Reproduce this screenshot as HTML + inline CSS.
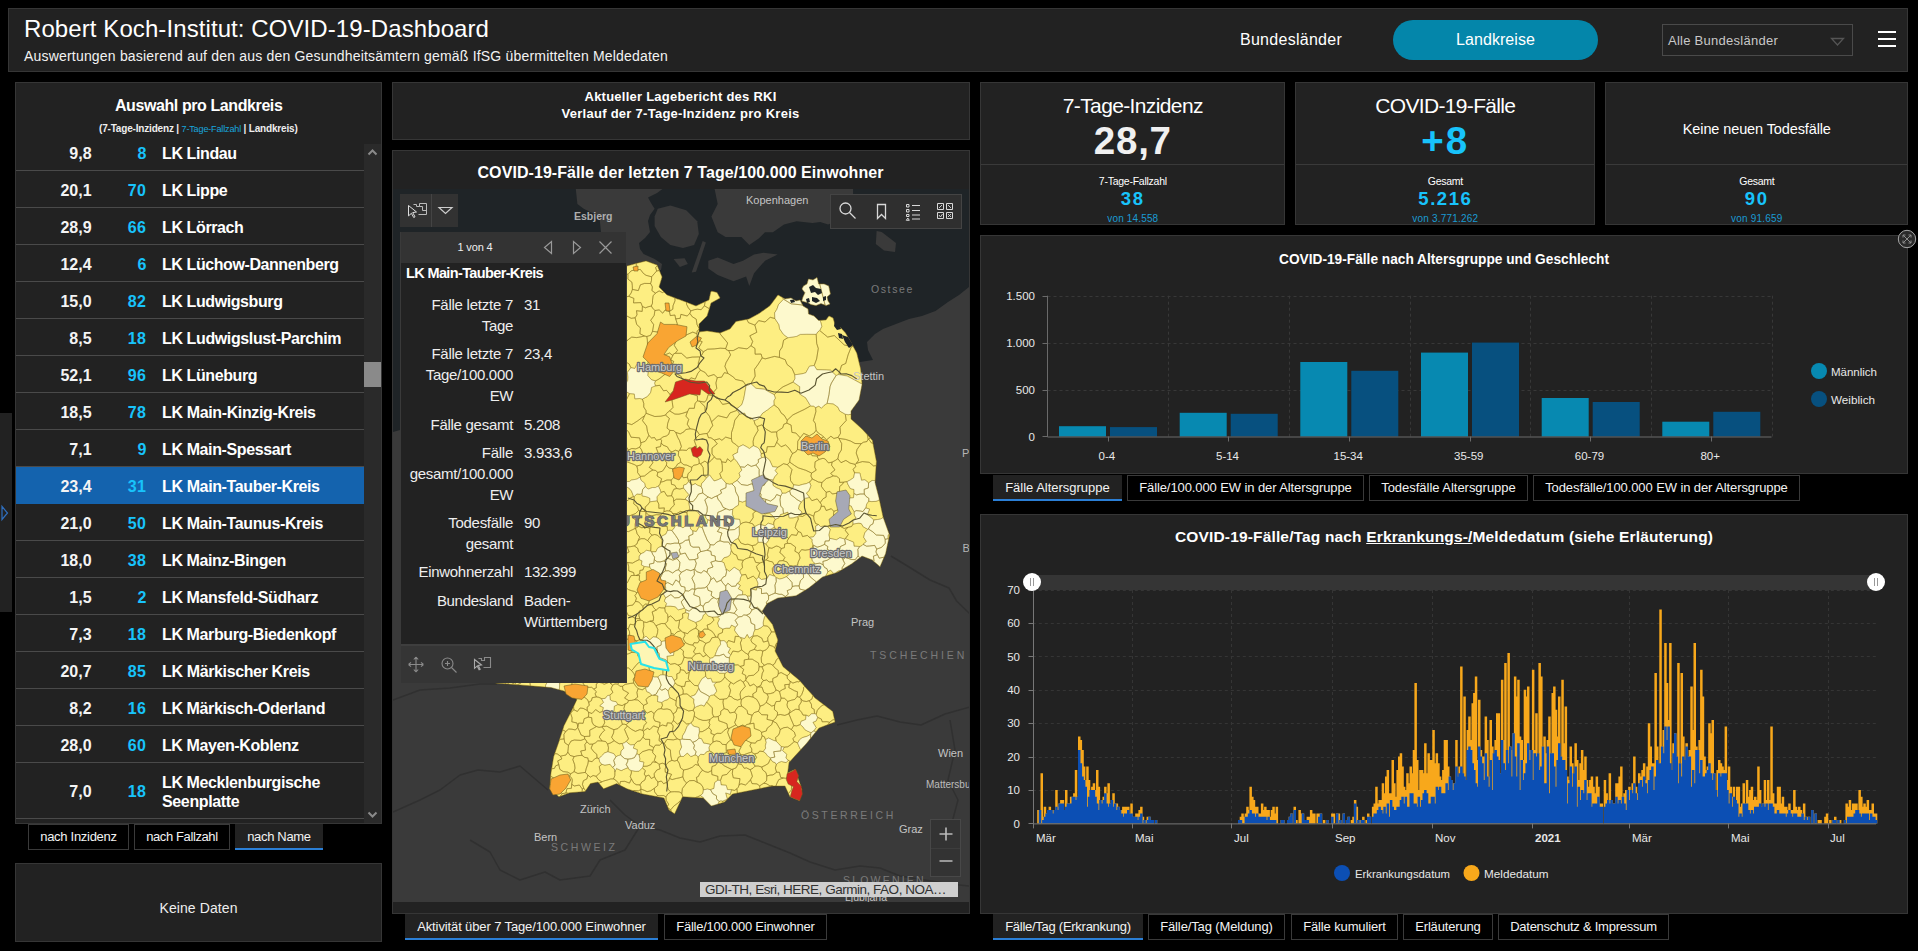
<!DOCTYPE html>
<html lang="de"><head><meta charset="utf-8"><title>Robert Koch-Institut: COVID-19-Dashboard</title>
<style>
html,body{margin:0;padding:0;background:#000;}
body{width:1918px;height:951px;position:relative;overflow:hidden;font-family:"Liberation Sans",sans-serif;}
.b{position:absolute;box-sizing:border-box;}
.t{position:absolute;white-space:nowrap;}
svg{overflow:visible}
svg text{font-family:"Liberation Sans",sans-serif;}
</style></head><body>
<div class="b" style="left:8px;top:8px;width:1900px;height:64px;background:#222;border:1px solid #363636;"></div>
<div class="t" style="left:24.0px;top:16.7px;font-size:24px;line-height:24px;color:#fff;letter-spacing:0.087px;">Robert Koch-Institut: COVID-19-Dashboard</div>
<div class="t" style="left:24.0px;top:49.1px;font-size:14px;line-height:14px;color:#f2f2f2;letter-spacing:0.191px;">Auswertungen basierend auf den aus den Gesundheitsämtern gemäß IfSG übermittelten Meldedaten</div>
<div class="t" style="left:1240.0px;top:32.0px;font-size:16px;line-height:16px;color:#fff;letter-spacing:0.272px;">Bundesländer</div>
<div class="b" style="left:1393px;top:20px;width:205px;height:40px;border-radius:20px;background:#0486aa"></div>
<div class="t" style="left:1456.0px;top:32.0px;font-size:16px;line-height:16px;color:#fff;letter-spacing:0.073px;">Landkreise</div>
<div class="b" style="left:1662px;top:24px;width:191px;height:32px;background:#222;border:1px solid #4a4a4a;"></div>
<div class="t" style="left:1668.0px;top:33.5px;font-size:13px;line-height:13px;color:#c8c8c8;letter-spacing:0.264px;">Alle Bundesländer</div>
<svg class="b" style="left:1829px;top:36px" width="18" height="12"><path d="M2.5 2.5h12l-6 6.5z" fill="none" stroke="#555" stroke-width="1.3"/></svg>
<div class="b" style="left:1878px;top:31px;width:18px;height:2px;background:#fff;"></div>
<div class="b" style="left:1878px;top:38px;width:18px;height:2px;background:#fff;"></div>
<div class="b" style="left:1878px;top:45px;width:18px;height:2px;background:#fff;"></div>
<div class="b" style="left:0px;top:413px;width:12px;height:199px;background:#222;"></div>
<svg class="b" style="left:0;top:504px" width="12" height="18"><path d="M2 2.5l5.5 6.5L2 15.5z" fill="none" stroke="#2f6fbf" stroke-width="1.2"/></svg>
<div class="b" style="left:15px;top:82px;width:367px;height:742px;background:#222;border:1px solid #363636;"></div>
<div class="t" style="left:114.9px;top:97.5px;font-size:16px;line-height:16px;color:#fff;font-weight:700;letter-spacing:-0.406px;">Auswahl pro Landkreis</div>
<div class="t" style="left:99px;top:123px;font-size:10px;line-height:11px;font-weight:700;color:#eee;letter-spacing:-0.18px">(7-Tage-Inzidenz | <span style="color:#18a6dd;font-weight:400;font-size:9.1px;letter-spacing:-0.18px">7-Tage-Fallzahl</span> | Landkreis)</div>
<div class="b" style="left:0;top:140px;width:382px;height:683px;overflow:hidden"><div class="b" style="left:0;top:-140px"><div class="b" style="left:16px;top:170px;width:348px;height:1px;background:#4a4a4a;"></div><div class="t" style="left:69.3px;top:146.1px;font-size:16px;line-height:16px;color:#f4f4f4;font-weight:700;">9,8</div><div class="t" style="left:137.4px;top:146.1px;font-size:16px;line-height:16px;color:#18c3fb;font-weight:700;">8</div><div class="t" style="left:162.0px;top:146.1px;font-size:16px;line-height:16px;color:#fff;font-weight:700;letter-spacing:-0.391px;">LK Lindau</div><div class="b" style="left:16px;top:207px;width:348px;height:1px;background:#4a4a4a;"></div><div class="t" style="left:60.4px;top:183.1px;font-size:16px;line-height:16px;color:#f4f4f4;font-weight:700;">20,1</div><div class="t" style="left:127.8px;top:183.1px;font-size:16px;line-height:16px;color:#18c3fb;font-weight:700;letter-spacing:0.356px;">70</div><div class="t" style="left:162.0px;top:183.1px;font-size:16px;line-height:16px;color:#fff;font-weight:700;letter-spacing:-0.385px;">LK Lippe</div><div class="b" style="left:16px;top:244px;width:348px;height:1px;background:#4a4a4a;"></div><div class="t" style="left:60.4px;top:220.1px;font-size:16px;line-height:16px;color:#f4f4f4;font-weight:700;">28,9</div><div class="t" style="left:127.8px;top:220.1px;font-size:16px;line-height:16px;color:#18c3fb;font-weight:700;letter-spacing:0.356px;">66</div><div class="t" style="left:162.0px;top:220.1px;font-size:16px;line-height:16px;color:#fff;font-weight:700;letter-spacing:-0.384px;">LK Lörrach</div><div class="b" style="left:16px;top:281px;width:348px;height:1px;background:#4a4a4a;"></div><div class="t" style="left:60.4px;top:257.1px;font-size:16px;line-height:16px;color:#f4f4f4;font-weight:700;">12,4</div><div class="t" style="left:137.4px;top:257.1px;font-size:16px;line-height:16px;color:#18c3fb;font-weight:700;">6</div><div class="t" style="left:162.0px;top:257.1px;font-size:16px;line-height:16px;color:#fff;font-weight:700;letter-spacing:-0.416px;">LK Lüchow-Dannenberg</div><div class="b" style="left:16px;top:318px;width:348px;height:1px;background:#4a4a4a;"></div><div class="t" style="left:60.4px;top:294.1px;font-size:16px;line-height:16px;color:#f4f4f4;font-weight:700;">15,0</div><div class="t" style="left:127.8px;top:294.1px;font-size:16px;line-height:16px;color:#18c3fb;font-weight:700;letter-spacing:0.356px;">82</div><div class="t" style="left:162.0px;top:294.1px;font-size:16px;line-height:16px;color:#fff;font-weight:700;letter-spacing:-0.406px;">LK Ludwigsburg</div><div class="b" style="left:16px;top:355px;width:348px;height:1px;background:#4a4a4a;"></div><div class="t" style="left:69.3px;top:331.1px;font-size:16px;line-height:16px;color:#f4f4f4;font-weight:700;">8,5</div><div class="t" style="left:127.8px;top:331.1px;font-size:16px;line-height:16px;color:#18c3fb;font-weight:700;letter-spacing:0.356px;">18</div><div class="t" style="left:162.0px;top:331.1px;font-size:16px;line-height:16px;color:#fff;font-weight:700;letter-spacing:-0.384px;">LK Ludwigslust-Parchim</div><div class="b" style="left:16px;top:392px;width:348px;height:1px;background:#4a4a4a;"></div><div class="t" style="left:60.4px;top:368.1px;font-size:16px;line-height:16px;color:#f4f4f4;font-weight:700;">52,1</div><div class="t" style="left:127.8px;top:368.1px;font-size:16px;line-height:16px;color:#18c3fb;font-weight:700;letter-spacing:0.356px;">96</div><div class="t" style="left:162.0px;top:368.1px;font-size:16px;line-height:16px;color:#fff;font-weight:700;letter-spacing:-0.407px;">LK Lüneburg</div><div class="b" style="left:16px;top:429px;width:348px;height:1px;background:#4a4a4a;"></div><div class="t" style="left:60.4px;top:405.1px;font-size:16px;line-height:16px;color:#f4f4f4;font-weight:700;">18,5</div><div class="t" style="left:127.8px;top:405.1px;font-size:16px;line-height:16px;color:#18c3fb;font-weight:700;letter-spacing:0.356px;">78</div><div class="t" style="left:162.0px;top:405.1px;font-size:16px;line-height:16px;color:#fff;font-weight:700;letter-spacing:-0.362px;">LK Main-Kinzig-Kreis</div><div class="b" style="left:16px;top:466px;width:348px;height:1px;background:#4a4a4a;"></div><div class="t" style="left:69.3px;top:442.1px;font-size:16px;line-height:16px;color:#f4f4f4;font-weight:700;">7,1</div><div class="t" style="left:137.4px;top:442.1px;font-size:16px;line-height:16px;color:#18c3fb;font-weight:700;">9</div><div class="t" style="left:162.0px;top:442.1px;font-size:16px;line-height:16px;color:#fff;font-weight:700;letter-spacing:-0.380px;">LK Main-Spessart</div><div class="b" style="left:16px;top:467px;width:348px;height:37px;background:#1463ae;"></div><div class="t" style="left:60.4px;top:479.1px;font-size:16px;line-height:16px;color:#f4f4f4;font-weight:700;">23,4</div><div class="t" style="left:127.8px;top:479.1px;font-size:16px;line-height:16px;color:#18c3fb;font-weight:700;letter-spacing:0.356px;">31</div><div class="t" style="left:162.0px;top:479.1px;font-size:16px;line-height:16px;color:#fff;font-weight:700;letter-spacing:-0.371px;">LK Main-Tauber-Kreis</div><div class="b" style="left:16px;top:540px;width:348px;height:1px;background:#4a4a4a;"></div><div class="t" style="left:60.4px;top:516.1px;font-size:16px;line-height:16px;color:#f4f4f4;font-weight:700;">21,0</div><div class="t" style="left:127.8px;top:516.1px;font-size:16px;line-height:16px;color:#18c3fb;font-weight:700;letter-spacing:0.356px;">50</div><div class="t" style="left:162.0px;top:516.1px;font-size:16px;line-height:16px;color:#fff;font-weight:700;letter-spacing:-0.379px;">LK Main-Taunus-Kreis</div><div class="b" style="left:16px;top:577px;width:348px;height:1px;background:#4a4a4a;"></div><div class="t" style="left:60.4px;top:553.1px;font-size:16px;line-height:16px;color:#f4f4f4;font-weight:700;">18,0</div><div class="t" style="left:127.8px;top:553.1px;font-size:16px;line-height:16px;color:#18c3fb;font-weight:700;letter-spacing:0.356px;">38</div><div class="t" style="left:162.0px;top:553.1px;font-size:16px;line-height:16px;color:#fff;font-weight:700;letter-spacing:-0.389px;">LK Mainz-Bingen</div><div class="b" style="left:16px;top:614px;width:348px;height:1px;background:#4a4a4a;"></div><div class="t" style="left:69.3px;top:590.1px;font-size:16px;line-height:16px;color:#f4f4f4;font-weight:700;">1,5</div><div class="t" style="left:137.4px;top:590.1px;font-size:16px;line-height:16px;color:#18c3fb;font-weight:700;">2</div><div class="t" style="left:162.0px;top:590.1px;font-size:16px;line-height:16px;color:#fff;font-weight:700;letter-spacing:-0.387px;">LK Mansfeld-Südharz</div><div class="b" style="left:16px;top:651px;width:348px;height:1px;background:#4a4a4a;"></div><div class="t" style="left:69.3px;top:627.1px;font-size:16px;line-height:16px;color:#f4f4f4;font-weight:700;">7,3</div><div class="t" style="left:127.8px;top:627.1px;font-size:16px;line-height:16px;color:#18c3fb;font-weight:700;letter-spacing:0.356px;">18</div><div class="t" style="left:162.0px;top:627.1px;font-size:16px;line-height:16px;color:#fff;font-weight:700;letter-spacing:-0.390px;">LK Marburg-Biedenkopf</div><div class="b" style="left:16px;top:688px;width:348px;height:1px;background:#4a4a4a;"></div><div class="t" style="left:60.4px;top:664.1px;font-size:16px;line-height:16px;color:#f4f4f4;font-weight:700;">20,7</div><div class="t" style="left:127.8px;top:664.1px;font-size:16px;line-height:16px;color:#18c3fb;font-weight:700;letter-spacing:0.356px;">85</div><div class="t" style="left:162.0px;top:664.1px;font-size:16px;line-height:16px;color:#fff;font-weight:700;letter-spacing:-0.366px;">LK Märkischer Kreis</div><div class="b" style="left:16px;top:725px;width:348px;height:1px;background:#4a4a4a;"></div><div class="t" style="left:69.3px;top:701.1px;font-size:16px;line-height:16px;color:#f4f4f4;font-weight:700;">8,2</div><div class="t" style="left:127.8px;top:701.1px;font-size:16px;line-height:16px;color:#18c3fb;font-weight:700;letter-spacing:0.356px;">16</div><div class="t" style="left:162.0px;top:701.1px;font-size:16px;line-height:16px;color:#fff;font-weight:700;letter-spacing:-0.384px;">LK Märkisch-Oderland</div><div class="b" style="left:16px;top:762px;width:348px;height:1px;background:#4a4a4a;"></div><div class="t" style="left:60.4px;top:738.1px;font-size:16px;line-height:16px;color:#f4f4f4;font-weight:700;">28,0</div><div class="t" style="left:127.8px;top:738.1px;font-size:16px;line-height:16px;color:#18c3fb;font-weight:700;letter-spacing:0.356px;">60</div><div class="t" style="left:162.0px;top:738.1px;font-size:16px;line-height:16px;color:#fff;font-weight:700;letter-spacing:-0.402px;">LK Mayen-Koblenz</div><div class="b" style="left:16px;top:818px;width:348px;height:1px;background:#4a4a4a;"></div><div class="t" style="left:69.3px;top:784.1px;font-size:16px;line-height:16px;color:#f4f4f4;font-weight:700;">7,0</div><div class="t" style="left:127.8px;top:784.1px;font-size:16px;line-height:16px;color:#18c3fb;font-weight:700;letter-spacing:0.356px;">18</div><div class="t" style="left:162.0px;top:775.1px;font-size:16px;line-height:16px;color:#fff;font-weight:700;letter-spacing:-0.392px;">LK Mecklenburgische</div><div class="t" style="left:162.0px;top:794.1px;font-size:16px;line-height:16px;color:#fff;font-weight:700;letter-spacing:-0.364px;">Seenplatte</div></div></div>
<div class="b" style="left:364px;top:144px;width:17px;height:679px;background:#2a2a2a;"></div>
<div class="b" style="left:364px;top:362px;width:17px;height:25px;background:#8a8a8a;"></div>
<svg class="b" style="left:364px;top:144px" width="17" height="17"><path d="M4.5 10.5l4-4 4 4" fill="none" stroke="#8a8a8a" stroke-width="2"/></svg>
<svg class="b" style="left:364px;top:806px" width="17" height="17"><path d="M4.5 6.5l4 4 4-4" fill="none" stroke="#8a8a8a" stroke-width="2"/></svg>
<div class="b" style="left:28px;top:824px;width:101px;height:26px;background:#000;border:1px solid #3a3a3a;"></div>
<div class="t" style="left:40.2px;top:830.1px;font-size:13px;line-height:13px;color:#f2f2f2;letter-spacing:-0.286px;">nach Inzidenz</div>
<div class="b" style="left:134px;top:824px;width:96px;height:26px;background:#000;border:1px solid #3a3a3a;"></div>
<div class="t" style="left:146.2px;top:830.1px;font-size:13px;line-height:13px;color:#f2f2f2;letter-spacing:-0.392px;">nach Fallzahl</div>
<div class="b" style="left:235px;top:824px;width:88px;height:26px;background:#222;border-bottom:2px solid #2b7fd6;box-sizing:border-box;"></div>
<div class="t" style="left:247.2px;top:830.1px;font-size:13px;line-height:13px;color:#f2f2f2;letter-spacing:-0.331px;">nach Name</div>
<div class="b" style="left:15px;top:863px;width:367px;height:79px;background:#222;border:1px solid #363636;"></div>
<div class="t" style="left:159.5px;top:901.1px;font-size:14px;line-height:14px;color:#eee;letter-spacing:0.086px;">Keine Daten</div>
<div class="b" style="left:392px;top:82px;width:578px;height:58px;background:#222;border:1px solid #363636;"></div>
<div class="t" style="left:584.5px;top:90.0px;font-size:13px;line-height:13px;color:#fff;font-weight:700;letter-spacing:0.244px;">Aktueller Lagebericht des RKI</div>
<div class="t" style="left:561.5px;top:107.0px;font-size:13px;line-height:13px;color:#fff;font-weight:700;letter-spacing:0.270px;">Verlauf der 7-Tage-Inzidenz pro Kreis</div>
<div class="b" style="left:980px;top:82px;width:305px;height:143px;background:#222;border:1px solid #363636;"></div>
<div class="b" style="left:981px;top:164px;width:303px;height:1px;background:#3a3a3a;"></div>
<div class="t" style="left:1062.8px;top:95.2px;font-size:21px;line-height:21px;color:#fff;letter-spacing:-0.627px;">7-Tage-Inzidenz</div>
<div class="t" style="left:1093.8px;top:122.4px;font-size:38.5px;line-height:38.5px;color:#f0f0f0;font-weight:700;letter-spacing:0.769px;">28,7</div>
<div class="t" style="left:1098.8px;top:176.1px;font-size:10.5px;line-height:10.5px;color:#fff;letter-spacing:-0.252px;">7-Tage-Fallzahl</div>
<div class="t" style="left:1120.8px;top:190.0px;font-size:18.5px;line-height:18.5px;color:#18c3fb;font-weight:700;letter-spacing:1.712px;">38</div>
<div class="t" style="left:1107.3px;top:213.5px;font-size:10px;line-height:10px;color:#1a9bd3;letter-spacing:0.152px;">von 14.558</div>
<div class="b" style="left:1295px;top:82px;width:300px;height:143px;background:#222;border:1px solid #363636;"></div>
<div class="b" style="left:1296px;top:164px;width:298px;height:1px;background:#3a3a3a;"></div>
<div class="t" style="left:1375.3px;top:95.2px;font-size:21px;line-height:21px;color:#fff;letter-spacing:-0.669px;">COVID-19-Fälle</div>
<div class="t" style="left:1421.3px;top:122.4px;font-size:38.5px;line-height:38.5px;color:#18c3fb;font-weight:700;letter-spacing:2.052px;">+8</div>
<div class="t" style="left:1427.8px;top:176.1px;font-size:10.5px;line-height:10.5px;color:#fff;letter-spacing:-0.293px;">Gesamt</div>
<div class="t" style="left:1418.3px;top:190.0px;font-size:18.5px;line-height:18.5px;color:#18c3fb;font-weight:700;letter-spacing:1.542px;">5.216</div>
<div class="t" style="left:1412.3px;top:213.5px;font-size:10px;line-height:10px;color:#1a9bd3;letter-spacing:0.201px;">von 3.771.262</div>
<div class="b" style="left:1605px;top:82px;width:303px;height:143px;background:#222;border:1px solid #363636;"></div>
<div class="b" style="left:1606px;top:164px;width:301px;height:1px;background:#3a3a3a;"></div>
<div class="t" style="left:1682.8px;top:121.7px;font-size:14.5px;line-height:14.5px;color:#fff;letter-spacing:-0.113px;">Keine neuen Todesfälle</div>
<div class="t" style="left:1739.3px;top:176.1px;font-size:10.5px;line-height:10.5px;color:#fff;letter-spacing:-0.293px;">Gesamt</div>
<div class="t" style="left:1744.8px;top:190.0px;font-size:18.5px;line-height:18.5px;color:#18c3fb;font-weight:700;letter-spacing:1.712px;">90</div>
<div class="t" style="left:1731.0px;top:213.5px;font-size:10px;line-height:10px;color:#1a9bd3;letter-spacing:0.202px;">von 91.659</div>
<div class="b" style="left:980px;top:235px;width:928px;height:239px;background:#222;border:1px solid #363636;"></div>
<div class="b" style="left:980px;top:514px;width:928px;height:400px;background:#222;border:1px solid #363636;"></div>
<svg class="b" style="left:0;top:0" width="1918" height="951"><path d="M1168.5 295.7V436.5M1289.5 295.7V436.5M1410.5 295.7V436.5M1530.5 295.7V436.5M1651.5 295.7V436.5M1772.5 295.7V436.5M1047.5 390.5H1771.5M1047.5 343.5H1771.5M1047.5 296.5H1771.5" stroke="#383838" stroke-width="1" stroke-dasharray="3 3" fill="none"/><rect x="1059.0" y="426.2" width="47" height="10.3" fill="#0789b1"/><rect x="1110.0" y="427.1" width="47" height="9.4" fill="#07507f"/><rect x="1179.7" y="412.8" width="47" height="23.7" fill="#0789b1"/><rect x="1230.7" y="413.8" width="47" height="22.7" fill="#07507f"/><rect x="1300.3" y="362.0" width="47" height="74.5" fill="#0789b1"/><rect x="1351.3" y="370.8" width="47" height="65.7" fill="#07507f"/><rect x="1421.0" y="352.6" width="47" height="83.9" fill="#0789b1"/><rect x="1472.0" y="342.6" width="47" height="93.9" fill="#07507f"/><rect x="1541.7" y="398.0" width="47" height="38.5" fill="#0789b1"/><rect x="1592.7" y="402.0" width="47" height="34.5" fill="#07507f"/><rect x="1662.3" y="421.7" width="47" height="14.8" fill="#0789b1"/><rect x="1713.3" y="411.8" width="47" height="24.7" fill="#07507f"/><path d="M1047.5 295.7V437.0H1771.5M1047.5 436.5h-5M1047.5 390.5h-5M1047.5 343.5h-5M1047.5 296.5h-5M1108.5 436.5v5M1228.5 436.5v5M1349.5 436.5v5M1470.5 436.5v5M1590.5 436.5v5M1711.5 436.5v5" stroke="#6a6a6a" stroke-width="1" fill="none"/><text x="1035.0" y="440.5" font-size="11.5" fill="#e8e8e8" text-anchor="end">0</text><text x="1035.0" y="393.6" font-size="11.5" fill="#e8e8e8" text-anchor="end">500</text><text x="1035.0" y="346.6" font-size="11.5" fill="#e8e8e8" text-anchor="end">1.000</text><text x="1035.0" y="299.7" font-size="11.5" fill="#e8e8e8" text-anchor="end">1.500</text><text x="1106.8" y="460.0" font-size="11.5" fill="#e8e8e8" text-anchor="middle">0-4</text><text x="1227.5" y="460.0" font-size="11.5" fill="#e8e8e8" text-anchor="middle">5-14</text><text x="1348.2" y="460.0" font-size="11.5" fill="#e8e8e8" text-anchor="middle">15-34</text><text x="1468.8" y="460.0" font-size="11.5" fill="#e8e8e8" text-anchor="middle">35-59</text><text x="1589.5" y="460.0" font-size="11.5" fill="#e8e8e8" text-anchor="middle">60-79</text><text x="1710.2" y="460.0" font-size="11.5" fill="#e8e8e8" text-anchor="middle">80+</text><text x="1444.0" y="263.5" font-size="14" fill="#fff" text-anchor="middle" font-weight="700" textLength="330.0" lengthAdjust="spacingAndGlyphs">COVID-19-Fälle nach Altersgruppe und Geschlecht</text><circle cx="1819" cy="371" r="8" fill="#0789b1"/><circle cx="1819" cy="399" r="8" fill="#07507f"/><text x="1831.0" y="375.5" font-size="11" fill="#e8e8e8" textLength="46.0" lengthAdjust="spacingAndGlyphs">Männlich</text><text x="1831.0" y="403.5" font-size="11" fill="#e8e8e8" textLength="44.0" lengthAdjust="spacingAndGlyphs">Weiblich</text><circle cx="1907" cy="239" r="8.700" fill="#2b2b2b" stroke="#a8a8a8" stroke-width="1"/><path d="M1903 235l8 8M1911 235l-8 8M1903 237.500v-2.500h2.500M1908.500 235h2.500v2.500M1911 240.500v2.500h-2.500M1905.500 243h-2.500v-2.500" stroke="#8c8c8c" stroke-width="1" fill="none"/><rect x="1032" y="575" width="844" height="15" fill="#353535"/><path d="M1132.5 590V823.4M1231.5 590V823.4M1332.5 590V823.4M1432.5 590V823.4M1532.5 590V823.4M1629.5 590V823.4M1728.5 590V823.4M1828.5 590V823.4M1032.8 790.5H1876M1032.8 757.5H1876M1032.8 723.5H1876M1032.8 690.5H1876M1032.8 656.5H1876M1032.8 623.5H1876M1032.8 590.5H1876" stroke="#353535" stroke-width="1" stroke-dasharray="3 3" fill="none"/><path d="M1037.2 823.4v-13.4h2.5v13.4zM1038.8 823.4v-13.4h2.5v13.4zM1040.5 823.4v-50.1h2.5v50.1zM1042.1 823.4v-6.7h2.5v6.7zM1043.7 823.4v-16.7h2.5v16.7zM1045.4 823.4v-10.0h2.5v10.0zM1047.0 823.4v-13.4h2.5v13.4zM1048.6 823.4v-16.7h2.5v16.7zM1050.3 823.4v-13.4h2.5v13.4zM1051.9 823.4v-13.4h2.5v13.4zM1053.5 823.4v-13.4h2.5v13.4zM1055.2 823.4v-33.4h2.5v33.4zM1056.8 823.4v-16.7h2.5v16.7zM1058.4 823.4v-20.0h2.5v20.0zM1060.1 823.4v-23.4h2.5v23.4zM1061.7 823.4v-23.4h2.5v23.4zM1063.3 823.4v-13.4h2.5v13.4zM1065.0 823.4v-33.4h2.5v33.4zM1066.6 823.4v-20.0h2.5v20.0zM1068.2 823.4v-20.0h2.5v20.0zM1069.9 823.4v-26.7h2.5v26.7zM1071.5 823.4v-26.7h2.5v26.7zM1073.1 823.4v-30.1h2.5v30.1zM1074.8 823.4v-53.4h2.5v53.4zM1076.4 823.4v-26.7h2.5v26.7zM1078.0 823.4v-86.8h2.5v86.8zM1079.6 823.4v-83.5h2.5v83.5zM1081.3 823.4v-73.5h2.5v73.5zM1082.9 823.4v-56.8h2.5v56.8zM1084.5 823.4v-43.4h2.5v43.4zM1086.2 823.4v-56.8h2.5v56.8zM1087.8 823.4v-43.4h2.5v43.4zM1089.4 823.4v-33.4h2.5v33.4zM1091.1 823.4v-36.7h2.5v36.7zM1092.7 823.4v-40.1h2.5v40.1zM1094.3 823.4v-33.4h2.5v33.4zM1096.0 823.4v-53.4h2.5v53.4zM1097.6 823.4v-36.7h2.5v36.7zM1099.2 823.4v-23.4h2.5v23.4zM1100.9 823.4v-23.4h2.5v23.4zM1102.5 823.4v-26.7h2.5v26.7zM1104.1 823.4v-36.7h2.5v36.7zM1105.8 823.4v-30.1h2.5v30.1zM1107.4 823.4v-40.1h2.5v40.1zM1109.0 823.4v-20.0h2.5v20.0zM1110.7 823.4v-23.4h2.5v23.4zM1112.3 823.4v-30.1h2.5v30.1zM1113.9 823.4v-20.0h2.5v20.0zM1115.6 823.4v-20.0h2.5v20.0zM1117.2 823.4v-16.7h2.5v16.7zM1118.8 823.4v-13.4h2.5v13.4zM1120.5 823.4v-13.4h2.5v13.4zM1122.1 823.4v-16.7h2.5v16.7zM1123.7 823.4v-16.7h2.5v16.7zM1125.4 823.4v-16.7h2.5v16.7zM1127.0 823.4v-16.7h2.5v16.7zM1128.6 823.4v-10.0h2.5v10.0zM1130.3 823.4v-20.0h2.5v20.0zM1131.9 823.4v-6.7h2.5v6.7zM1133.5 823.4v-6.7h2.5v6.7zM1135.2 823.4v-10.0h2.5v10.0zM1136.8 823.4v-10.0h2.5v10.0zM1138.4 823.4v-13.4h2.5v13.4zM1140.1 823.4v-16.7h2.5v16.7zM1141.7 823.4v-6.7h2.5v6.7zM1143.3 823.4v-3.3h2.5v3.3zM1145.0 823.4v-3.3h2.5v3.3zM1146.6 823.4v-6.7h2.5v6.7zM1148.2 823.4v-6.7h2.5v6.7zM1149.9 823.4v-3.3h2.5v3.3zM1151.5 823.4v-3.3h2.5v3.3zM1154.8 823.4v-3.3h2.5v3.3zM1238.0 823.4v-3.3h2.5v3.3zM1239.7 823.4v-6.7h2.5v6.7zM1241.3 823.4v-10.0h2.5v10.0zM1242.9 823.4v-6.7h2.5v6.7zM1244.6 823.4v-10.0h2.5v10.0zM1246.2 823.4v-16.7h2.5v16.7zM1247.8 823.4v-13.4h2.5v13.4zM1249.4 823.4v-36.7h2.5v36.7zM1251.1 823.4v-26.7h2.5v26.7zM1252.7 823.4v-23.4h2.5v23.4zM1254.3 823.4v-16.7h2.5v16.7zM1256.0 823.4v-16.7h2.5v16.7zM1257.6 823.4v-10.0h2.5v10.0zM1259.2 823.4v-10.0h2.5v10.0zM1260.9 823.4v-20.0h2.5v20.0zM1262.5 823.4v-13.4h2.5v13.4zM1264.1 823.4v-16.7h2.5v16.7zM1265.8 823.4v-13.4h2.5v13.4zM1267.4 823.4v-13.4h2.5v13.4zM1269.0 823.4v-6.7h2.5v6.7zM1270.7 823.4v-13.4h2.5v13.4zM1272.3 823.4v-16.7h2.5v16.7zM1273.9 823.4v-10.0h2.5v10.0zM1275.6 823.4v-16.7h2.5v16.7zM1280.5 823.4v-3.3h2.5v3.3zM1282.1 823.4v-3.3h2.5v3.3zM1287.0 823.4v-3.3h2.5v3.3zM1288.6 823.4v-6.7h2.5v6.7zM1290.3 823.4v-10.0h2.5v10.0zM1293.5 823.4v-16.7h2.5v16.7zM1295.2 823.4v-3.3h2.5v3.3zM1298.4 823.4v-13.4h2.5v13.4zM1300.1 823.4v-10.0h2.5v10.0zM1301.7 823.4v-10.0h2.5v10.0zM1303.3 823.4v-3.3h2.5v3.3zM1305.0 823.4v-3.3h2.5v3.3zM1306.6 823.4v-6.7h2.5v6.7zM1308.2 823.4v-6.7h2.5v6.7zM1309.9 823.4v-13.4h2.5v13.4zM1311.5 823.4v-10.0h2.5v10.0zM1313.1 823.4v-10.0h2.5v10.0zM1316.4 823.4v-10.0h2.5v10.0zM1318.0 823.4v-10.0h2.5v10.0zM1319.7 823.4v-10.0h2.5v10.0zM1322.9 823.4v-3.3h2.5v3.3zM1326.2 823.4v-3.3h2.5v3.3zM1331.1 823.4v-10.0h2.5v10.0zM1332.7 823.4v-10.0h2.5v10.0zM1336.0 823.4v-10.0h2.5v10.0zM1337.6 823.4v-10.0h2.5v10.0zM1339.2 823.4v-3.3h2.5v3.3zM1342.5 823.4v-10.0h2.5v10.0zM1345.8 823.4v-3.3h2.5v3.3zM1347.4 823.4v-6.7h2.5v6.7zM1350.7 823.4v-3.3h2.5v3.3zM1352.3 823.4v-6.7h2.5v6.7zM1353.9 823.4v-23.4h2.5v23.4zM1355.6 823.4v-16.7h2.5v16.7zM1357.2 823.4v-3.3h2.5v3.3zM1358.8 823.4v-3.3h2.5v3.3zM1360.5 823.4v-3.3h2.5v3.3zM1362.1 823.4v-6.7h2.5v6.7zM1365.4 823.4v-3.3h2.5v3.3zM1367.0 823.4v-10.0h2.5v10.0zM1368.6 823.4v-6.7h2.5v6.7zM1371.9 823.4v-16.7h2.5v16.7zM1373.5 823.4v-20.0h2.5v20.0zM1375.2 823.4v-36.7h2.5v36.7zM1376.8 823.4v-20.0h2.5v20.0zM1378.4 823.4v-23.4h2.5v23.4zM1380.1 823.4v-23.4h2.5v23.4zM1381.7 823.4v-40.1h2.5v40.1zM1383.3 823.4v-30.1h2.5v30.1zM1385.0 823.4v-46.8h2.5v46.8zM1386.6 823.4v-53.4h2.5v53.4zM1388.2 823.4v-30.1h2.5v30.1zM1389.9 823.4v-30.1h2.5v30.1zM1391.5 823.4v-63.5h2.5v63.5zM1393.1 823.4v-40.1h2.5v40.1zM1394.8 823.4v-26.7h2.5v26.7zM1396.4 823.4v-53.4h2.5v53.4zM1398.0 823.4v-66.8h2.5v66.8zM1399.7 823.4v-70.1h2.5v70.1zM1401.3 823.4v-56.8h2.5v56.8zM1402.9 823.4v-36.7h2.5v36.7zM1404.6 823.4v-33.4h2.5v33.4zM1406.2 823.4v-50.1h2.5v50.1zM1407.8 823.4v-40.1h2.5v40.1zM1409.5 823.4v-56.8h2.5v56.8zM1411.1 823.4v-50.1h2.5v50.1zM1412.7 823.4v-73.5h2.5v73.5zM1414.4 823.4v-140.3h2.5v140.3zM1416.0 823.4v-63.5h2.5v63.5zM1417.6 823.4v-33.4h2.5v33.4zM1419.2 823.4v-53.4h2.5v53.4zM1420.9 823.4v-53.4h2.5v53.4zM1422.5 823.4v-50.1h2.5v50.1zM1424.1 823.4v-80.2h2.5v80.2zM1425.8 823.4v-50.1h2.5v50.1zM1427.4 823.4v-70.1h2.5v70.1zM1429.0 823.4v-63.5h2.5v63.5zM1430.7 823.4v-63.5h2.5v63.5zM1432.3 823.4v-93.5h2.5v93.5zM1433.9 823.4v-60.1h2.5v60.1zM1435.6 823.4v-70.1h2.5v70.1zM1437.2 823.4v-60.1h2.5v60.1zM1438.8 823.4v-46.8h2.5v46.8zM1440.5 823.4v-43.4h2.5v43.4zM1442.1 823.4v-53.4h2.5v53.4zM1443.7 823.4v-83.5h2.5v83.5zM1445.4 823.4v-83.5h2.5v83.5zM1447.0 823.4v-56.8h2.5v56.8zM1448.6 823.4v-46.8h2.5v46.8zM1450.3 823.4v-43.4h2.5v43.4zM1451.9 823.4v-40.1h2.5v40.1zM1453.5 823.4v-40.1h2.5v40.1zM1455.2 823.4v-83.5h2.5v83.5zM1456.8 823.4v-46.8h2.5v46.8zM1458.4 823.4v-56.8h2.5v56.8zM1460.1 823.4v-157.0h2.5v157.0zM1461.7 823.4v-50.1h2.5v50.1zM1463.3 823.4v-126.9h2.5v126.9zM1465.0 823.4v-43.4h2.5v43.4zM1466.6 823.4v-93.5h2.5v93.5zM1468.2 823.4v-106.9h2.5v106.9zM1469.9 823.4v-83.5h2.5v83.5zM1471.5 823.4v-120.2h2.5v120.2zM1473.1 823.4v-130.3h2.5v130.3zM1474.8 823.4v-147.0h2.5v147.0zM1476.4 823.4v-63.5h2.5v63.5zM1478.0 823.4v-123.6h2.5v123.6zM1479.7 823.4v-73.5h2.5v73.5zM1481.3 823.4v-66.8h2.5v66.8zM1482.9 823.4v-66.8h2.5v66.8zM1484.6 823.4v-106.9h2.5v106.9zM1486.2 823.4v-83.5h2.5v83.5zM1487.8 823.4v-46.8h2.5v46.8zM1489.5 823.4v-103.5h2.5v103.5zM1491.1 823.4v-76.8h2.5v76.8zM1492.7 823.4v-70.1h2.5v70.1zM1494.4 823.4v-83.5h2.5v83.5zM1496.0 823.4v-110.2h2.5v110.2zM1497.6 823.4v-110.2h2.5v110.2zM1499.3 823.4v-50.1h2.5v50.1zM1500.9 823.4v-143.6h2.5v143.6zM1502.5 823.4v-83.5h2.5v83.5zM1504.2 823.4v-160.3h2.5v160.3zM1505.8 823.4v-73.5h2.5v73.5zM1507.4 823.4v-170.3h2.5v170.3zM1509.0 823.4v-76.8h2.5v76.8zM1510.7 823.4v-73.5h2.5v73.5zM1512.3 823.4v-90.2h2.5v90.2zM1513.9 823.4v-147.0h2.5v147.0zM1515.6 823.4v-126.9h2.5v126.9zM1517.2 823.4v-143.6h2.5v143.6zM1518.8 823.4v-86.8h2.5v86.8zM1520.5 823.4v-83.5h2.5v83.5zM1522.1 823.4v-63.5h2.5v63.5zM1523.7 823.4v-133.6h2.5v133.6zM1525.4 823.4v-126.9h2.5v126.9zM1527.0 823.4v-136.9h2.5v136.9zM1528.6 823.4v-73.5h2.5v73.5zM1530.3 823.4v-73.5h2.5v73.5zM1531.9 823.4v-153.6h2.5v153.6zM1533.5 823.4v-73.5h2.5v73.5zM1535.2 823.4v-110.2h2.5v110.2zM1536.8 823.4v-70.1h2.5v70.1zM1538.4 823.4v-160.3h2.5v160.3zM1540.1 823.4v-147.0h2.5v147.0zM1541.7 823.4v-76.8h2.5v76.8zM1543.3 823.4v-86.8h2.5v86.8zM1545.0 823.4v-70.1h2.5v70.1zM1546.6 823.4v-83.5h2.5v83.5zM1548.2 823.4v-106.9h2.5v106.9zM1549.9 823.4v-70.1h2.5v70.1zM1551.5 823.4v-130.3h2.5v130.3zM1553.1 823.4v-136.9h2.5v136.9zM1554.8 823.4v-113.6h2.5v113.6zM1556.4 823.4v-86.8h2.5v86.8zM1558.0 823.4v-126.9h2.5v126.9zM1559.7 823.4v-66.8h2.5v66.8zM1561.3 823.4v-143.6h2.5v143.6zM1562.9 823.4v-80.2h2.5v80.2zM1564.6 823.4v-116.9h2.5v116.9zM1566.2 823.4v-46.8h2.5v46.8zM1567.8 823.4v-43.4h2.5v43.4zM1569.5 823.4v-76.8h2.5v76.8zM1571.1 823.4v-60.1h2.5v60.1zM1572.7 823.4v-50.1h2.5v50.1zM1574.4 823.4v-80.2h2.5v80.2zM1576.0 823.4v-63.5h2.5v63.5zM1577.6 823.4v-43.4h2.5v43.4zM1579.3 823.4v-60.1h2.5v60.1zM1580.9 823.4v-73.5h2.5v73.5zM1582.5 823.4v-53.4h2.5v53.4zM1584.2 823.4v-66.8h2.5v66.8zM1585.8 823.4v-43.4h2.5v43.4zM1587.4 823.4v-36.7h2.5v36.7zM1589.1 823.4v-43.4h2.5v43.4zM1590.7 823.4v-46.8h2.5v46.8zM1592.3 823.4v-36.7h2.5v36.7zM1593.9 823.4v-30.1h2.5v30.1zM1595.6 823.4v-46.8h2.5v46.8zM1597.2 823.4v-36.7h2.5v36.7zM1598.8 823.4v-20.0h2.5v20.0zM1600.5 823.4v-20.0h2.5v20.0zM1603.7 823.4v-43.4h2.5v43.4zM1605.4 823.4v-30.1h2.5v30.1zM1607.0 823.4v-23.4h2.5v23.4zM1608.6 823.4v-50.1h2.5v50.1zM1610.3 823.4v-23.4h2.5v23.4zM1611.9 823.4v-20.0h2.5v20.0zM1613.5 823.4v-20.0h2.5v20.0zM1615.2 823.4v-40.1h2.5v40.1zM1616.8 823.4v-40.1h2.5v40.1zM1618.4 823.4v-46.8h2.5v46.8zM1620.1 823.4v-56.8h2.5v56.8zM1621.7 823.4v-26.7h2.5v26.7zM1623.3 823.4v-30.1h2.5v30.1zM1625.0 823.4v-33.4h2.5v33.4zM1626.6 823.4v-33.4h2.5v33.4zM1628.2 823.4v-36.7h2.5v36.7zM1629.9 823.4v-33.4h2.5v33.4zM1631.5 823.4v-40.1h2.5v40.1zM1633.1 823.4v-66.8h2.5v66.8zM1634.8 823.4v-36.7h2.5v36.7zM1636.4 823.4v-30.1h2.5v30.1zM1638.0 823.4v-50.1h2.5v50.1zM1639.7 823.4v-46.8h2.5v46.8zM1641.3 823.4v-53.4h2.5v53.4zM1642.9 823.4v-60.1h2.5v60.1zM1644.6 823.4v-43.4h2.5v43.4zM1646.2 823.4v-56.8h2.5v56.8zM1647.8 823.4v-100.2h2.5v100.2zM1649.5 823.4v-76.8h2.5v76.8zM1651.1 823.4v-60.1h2.5v60.1zM1652.7 823.4v-60.1h2.5v60.1zM1654.4 823.4v-150.3h2.5v150.3zM1656.0 823.4v-76.8h2.5v76.8zM1657.6 823.4v-60.1h2.5v60.1zM1659.3 823.4v-213.8h2.5v213.8zM1660.9 823.4v-76.8h2.5v76.8zM1662.5 823.4v-93.5h2.5v93.5zM1664.2 823.4v-180.4h2.5v180.4zM1665.8 823.4v-140.3h2.5v140.3zM1667.4 823.4v-103.5h2.5v103.5zM1669.1 823.4v-180.4h2.5v180.4zM1670.7 823.4v-53.4h2.5v53.4zM1672.3 823.4v-80.2h2.5v80.2zM1674.0 823.4v-90.2h2.5v90.2zM1675.6 823.4v-66.8h2.5v66.8zM1677.2 823.4v-160.3h2.5v160.3zM1678.8 823.4v-60.1h2.5v60.1zM1680.5 823.4v-150.3h2.5v150.3zM1682.1 823.4v-86.8h2.5v86.8zM1683.7 823.4v-63.5h2.5v63.5zM1685.4 823.4v-80.2h2.5v80.2zM1687.0 823.4v-66.8h2.5v66.8zM1688.6 823.4v-73.5h2.5v73.5zM1690.3 823.4v-136.9h2.5v136.9zM1691.9 823.4v-93.5h2.5v93.5zM1693.5 823.4v-180.4h2.5v180.4zM1695.2 823.4v-76.8h2.5v76.8zM1696.8 823.4v-73.5h2.5v73.5zM1698.4 823.4v-83.5h2.5v83.5zM1700.1 823.4v-153.6h2.5v153.6zM1701.7 823.4v-126.9h2.5v126.9zM1703.3 823.4v-66.8h2.5v66.8zM1705.0 823.4v-53.4h2.5v53.4zM1706.6 823.4v-56.8h2.5v56.8zM1708.2 823.4v-100.2h2.5v100.2zM1709.9 823.4v-90.2h2.5v90.2zM1711.5 823.4v-103.5h2.5v103.5zM1713.1 823.4v-50.1h2.5v50.1zM1714.8 823.4v-33.4h2.5v33.4zM1716.4 823.4v-53.4h2.5v53.4zM1718.0 823.4v-63.5h2.5v63.5zM1719.7 823.4v-60.1h2.5v60.1zM1721.3 823.4v-56.8h2.5v56.8zM1722.9 823.4v-53.4h2.5v53.4zM1724.6 823.4v-96.9h2.5v96.9zM1726.2 823.4v-43.4h2.5v43.4zM1727.8 823.4v-56.8h2.5v56.8zM1729.5 823.4v-36.7h2.5v36.7zM1731.1 823.4v-26.7h2.5v26.7zM1732.7 823.4v-36.7h2.5v36.7zM1734.4 823.4v-23.4h2.5v23.4zM1736.0 823.4v-36.7h2.5v36.7zM1737.6 823.4v-36.7h2.5v36.7zM1739.3 823.4v-16.7h2.5v16.7zM1740.9 823.4v-20.0h2.5v20.0zM1742.5 823.4v-40.1h2.5v40.1zM1744.2 823.4v-20.0h2.5v20.0zM1745.8 823.4v-43.4h2.5v43.4zM1747.4 823.4v-26.7h2.5v26.7zM1749.1 823.4v-33.4h2.5v33.4zM1750.7 823.4v-36.7h2.5v36.7zM1752.3 823.4v-23.4h2.5v23.4zM1754.0 823.4v-26.7h2.5v26.7zM1755.6 823.4v-23.4h2.5v23.4zM1757.2 823.4v-56.8h2.5v56.8zM1758.9 823.4v-33.4h2.5v33.4zM1760.5 823.4v-16.7h2.5v16.7zM1762.1 823.4v-20.0h2.5v20.0zM1763.7 823.4v-43.4h2.5v43.4zM1765.4 823.4v-23.4h2.5v23.4zM1767.0 823.4v-43.4h2.5v43.4zM1768.6 823.4v-23.4h2.5v23.4zM1770.3 823.4v-96.9h2.5v96.9zM1771.9 823.4v-30.1h2.5v30.1zM1773.5 823.4v-20.0h2.5v20.0zM1775.2 823.4v-20.0h2.5v20.0zM1776.8 823.4v-36.7h2.5v36.7zM1778.4 823.4v-36.7h2.5v36.7zM1780.1 823.4v-20.0h2.5v20.0zM1781.7 823.4v-26.7h2.5v26.7zM1783.3 823.4v-16.7h2.5v16.7zM1785.0 823.4v-16.7h2.5v16.7zM1786.6 823.4v-13.4h2.5v13.4zM1788.2 823.4v-20.0h2.5v20.0zM1789.9 823.4v-13.4h2.5v13.4zM1791.5 823.4v-13.4h2.5v13.4zM1793.1 823.4v-33.4h2.5v33.4zM1794.8 823.4v-16.7h2.5v16.7zM1796.4 823.4v-13.4h2.5v13.4zM1798.0 823.4v-16.7h2.5v16.7zM1799.7 823.4v-13.4h2.5v13.4zM1801.3 823.4v-10.0h2.5v10.0zM1802.9 823.4v-20.0h2.5v20.0zM1804.6 823.4v-6.7h2.5v6.7zM1806.2 823.4v-6.7h2.5v6.7zM1807.8 823.4v-6.7h2.5v6.7zM1811.1 823.4v-13.4h2.5v13.4zM1814.4 823.4v-10.0h2.5v10.0zM1817.6 823.4v-3.3h2.5v3.3zM1819.3 823.4v-3.3h2.5v3.3zM1824.2 823.4v-6.7h2.5v6.7zM1825.8 823.4v-10.0h2.5v10.0zM1829.1 823.4v-3.3h2.5v3.3zM1832.3 823.4v-3.3h2.5v3.3zM1834.0 823.4v-6.7h2.5v6.7zM1837.2 823.4v-3.3h2.5v3.3zM1838.9 823.4v-3.3h2.5v3.3zM1843.8 823.4v-3.3h2.5v3.3zM1845.4 823.4v-20.0h2.5v20.0zM1847.0 823.4v-16.7h2.5v16.7zM1848.7 823.4v-23.4h2.5v23.4zM1850.3 823.4v-13.4h2.5v13.4zM1851.9 823.4v-20.0h2.5v20.0zM1853.5 823.4v-20.0h2.5v20.0zM1855.2 823.4v-20.0h2.5v20.0zM1856.8 823.4v-13.4h2.5v13.4zM1858.4 823.4v-33.4h2.5v33.4zM1860.1 823.4v-26.7h2.5v26.7zM1861.7 823.4v-16.7h2.5v16.7zM1863.3 823.4v-20.0h2.5v20.0zM1865.0 823.4v-16.7h2.5v16.7zM1866.6 823.4v-23.4h2.5v23.4zM1868.2 823.4v-13.4h2.5v13.4zM1869.9 823.4v-13.4h2.5v13.4zM1871.5 823.4v-20.0h2.5v20.0zM1873.1 823.4v-10.0h2.5v10.0zM1874.8 823.4v-10.0h2.5v10.0z" fill="#f8a81b"/><path d="M1038.8 823.4v-13.4h2.5v13.4zM1042.1 823.4v-3.3h2.5v3.3zM1043.7 823.4v-6.7h2.5v6.7zM1045.4 823.4v-10.0h2.5v10.0zM1047.0 823.4v-13.4h2.5v13.4zM1048.6 823.4v-13.4h2.5v13.4zM1050.3 823.4v-13.4h2.5v13.4zM1051.9 823.4v-10.0h2.5v10.0zM1053.5 823.4v-13.4h2.5v13.4zM1055.2 823.4v-16.7h2.5v16.7zM1056.8 823.4v-13.4h2.5v13.4zM1058.4 823.4v-20.0h2.5v20.0zM1060.1 823.4v-20.0h2.5v20.0zM1061.7 823.4v-20.0h2.5v20.0zM1063.3 823.4v-13.4h2.5v13.4zM1065.0 823.4v-16.7h2.5v16.7zM1066.6 823.4v-20.0h2.5v20.0zM1068.2 823.4v-20.0h2.5v20.0zM1069.9 823.4v-20.0h2.5v20.0zM1071.5 823.4v-26.7h2.5v26.7zM1073.1 823.4v-26.7h2.5v26.7zM1074.8 823.4v-23.4h2.5v23.4zM1076.4 823.4v-26.7h2.5v26.7zM1078.0 823.4v-73.5h2.5v73.5zM1079.6 823.4v-60.1h2.5v60.1zM1081.3 823.4v-46.8h2.5v46.8zM1082.9 823.4v-43.4h2.5v43.4zM1084.5 823.4v-36.7h2.5v36.7zM1086.2 823.4v-16.7h2.5v16.7zM1087.8 823.4v-26.7h2.5v26.7zM1089.4 823.4v-33.4h2.5v33.4zM1091.1 823.4v-33.4h2.5v33.4zM1092.7 823.4v-33.4h2.5v33.4zM1094.3 823.4v-26.7h2.5v26.7zM1096.0 823.4v-20.0h2.5v20.0zM1097.6 823.4v-13.4h2.5v13.4zM1099.2 823.4v-23.4h2.5v23.4zM1100.9 823.4v-20.0h2.5v20.0zM1102.5 823.4v-23.4h2.5v23.4zM1104.1 823.4v-30.1h2.5v30.1zM1105.8 823.4v-20.0h2.5v20.0zM1107.4 823.4v-16.7h2.5v16.7zM1109.0 823.4v-20.0h2.5v20.0zM1110.7 823.4v-23.4h2.5v23.4zM1112.3 823.4v-16.7h2.5v16.7zM1113.9 823.4v-20.0h2.5v20.0zM1115.6 823.4v-13.4h2.5v13.4zM1117.2 823.4v-16.7h2.5v16.7zM1118.8 823.4v-13.4h2.5v13.4zM1120.5 823.4v-10.0h2.5v10.0zM1122.1 823.4v-6.7h2.5v6.7zM1123.7 823.4v-10.0h2.5v10.0zM1125.4 823.4v-10.0h2.5v10.0zM1127.0 823.4v-13.4h2.5v13.4zM1128.6 823.4v-10.0h2.5v10.0zM1130.3 823.4v-10.0h2.5v10.0zM1131.9 823.4v-6.7h2.5v6.7zM1133.5 823.4v-6.7h2.5v6.7zM1135.2 823.4v-6.7h2.5v6.7zM1136.8 823.4v-3.3h2.5v3.3zM1138.4 823.4v-6.7h2.5v6.7zM1140.1 823.4v-10.0h2.5v10.0zM1143.3 823.4v-3.3h2.5v3.3zM1146.6 823.4v-3.3h2.5v3.3zM1148.2 823.4v-6.7h2.5v6.7zM1149.9 823.4v-3.3h2.5v3.3zM1151.5 823.4v-3.3h2.5v3.3zM1154.8 823.4v-3.3h2.5v3.3zM1238.0 823.4v-3.3h2.5v3.3zM1239.7 823.4v-3.3h2.5v3.3zM1244.6 823.4v-6.7h2.5v6.7zM1246.2 823.4v-6.7h2.5v6.7zM1247.8 823.4v-10.0h2.5v10.0zM1249.4 823.4v-13.4h2.5v13.4zM1251.1 823.4v-10.0h2.5v10.0zM1252.7 823.4v-10.0h2.5v10.0zM1254.3 823.4v-6.7h2.5v6.7zM1256.0 823.4v-10.0h2.5v10.0zM1257.6 823.4v-6.7h2.5v6.7zM1259.2 823.4v-6.7h2.5v6.7zM1260.9 823.4v-6.7h2.5v6.7zM1262.5 823.4v-6.7h2.5v6.7zM1264.1 823.4v-6.7h2.5v6.7zM1265.8 823.4v-3.3h2.5v3.3zM1267.4 823.4v-6.7h2.5v6.7zM1269.0 823.4v-3.3h2.5v3.3zM1270.7 823.4v-3.3h2.5v3.3zM1272.3 823.4v-3.3h2.5v3.3zM1273.9 823.4v-3.3h2.5v3.3zM1280.5 823.4v-3.3h2.5v3.3zM1282.1 823.4v-3.3h2.5v3.3zM1287.0 823.4v-3.3h2.5v3.3zM1288.6 823.4v-6.7h2.5v6.7zM1290.3 823.4v-10.0h2.5v10.0zM1293.5 823.4v-13.4h2.5v13.4zM1301.7 823.4v-10.0h2.5v10.0zM1303.3 823.4v-3.3h2.5v3.3zM1305.0 823.4v-3.3h2.5v3.3zM1306.6 823.4v-3.3h2.5v3.3zM1318.0 823.4v-6.7h2.5v6.7zM1319.7 823.4v-10.0h2.5v10.0zM1326.2 823.4v-3.3h2.5v3.3zM1331.1 823.4v-6.7h2.5v6.7zM1336.0 823.4v-10.0h2.5v10.0zM1339.2 823.4v-3.3h2.5v3.3zM1342.5 823.4v-10.0h2.5v10.0zM1345.8 823.4v-3.3h2.5v3.3zM1347.4 823.4v-6.7h2.5v6.7zM1353.9 823.4v-20.0h2.5v20.0zM1357.2 823.4v-3.3h2.5v3.3zM1360.5 823.4v-3.3h2.5v3.3zM1362.1 823.4v-3.3h2.5v3.3zM1367.0 823.4v-6.7h2.5v6.7zM1368.6 823.4v-6.7h2.5v6.7zM1371.9 823.4v-6.7h2.5v6.7zM1373.5 823.4v-10.0h2.5v10.0zM1375.2 823.4v-10.0h2.5v10.0zM1376.8 823.4v-13.4h2.5v13.4zM1378.4 823.4v-16.7h2.5v16.7zM1380.1 823.4v-13.4h2.5v13.4zM1381.7 823.4v-10.0h2.5v10.0zM1383.3 823.4v-16.7h2.5v16.7zM1385.0 823.4v-10.0h2.5v10.0zM1386.6 823.4v-20.0h2.5v20.0zM1388.2 823.4v-6.7h2.5v6.7zM1389.9 823.4v-23.4h2.5v23.4zM1391.5 823.4v-16.7h2.5v16.7zM1393.1 823.4v-13.4h2.5v13.4zM1394.8 823.4v-13.4h2.5v13.4zM1396.4 823.4v-16.7h2.5v16.7zM1398.0 823.4v-16.7h2.5v16.7zM1399.7 823.4v-23.4h2.5v23.4zM1401.3 823.4v-26.7h2.5v26.7zM1402.9 823.4v-20.0h2.5v20.0zM1404.6 823.4v-26.7h2.5v26.7zM1406.2 823.4v-16.7h2.5v16.7zM1407.8 823.4v-16.7h2.5v16.7zM1409.5 823.4v-30.1h2.5v30.1zM1411.1 823.4v-30.1h2.5v30.1zM1412.7 823.4v-20.0h2.5v20.0zM1414.4 823.4v-20.0h2.5v20.0zM1416.0 823.4v-16.7h2.5v16.7zM1417.6 823.4v-26.7h2.5v26.7zM1419.2 823.4v-16.7h2.5v16.7zM1420.9 823.4v-23.4h2.5v23.4zM1422.5 823.4v-30.1h2.5v30.1zM1424.1 823.4v-33.4h2.5v33.4zM1425.8 823.4v-30.1h2.5v30.1zM1427.4 823.4v-20.0h2.5v20.0zM1429.0 823.4v-20.0h2.5v20.0zM1430.7 823.4v-26.7h2.5v26.7zM1432.3 823.4v-26.7h2.5v26.7zM1433.9 823.4v-20.0h2.5v20.0zM1435.6 823.4v-36.7h2.5v36.7zM1437.2 823.4v-33.4h2.5v33.4zM1438.8 823.4v-36.7h2.5v36.7zM1440.5 823.4v-30.1h2.5v30.1zM1442.1 823.4v-30.1h2.5v30.1zM1443.7 823.4v-30.1h2.5v30.1zM1445.4 823.4v-40.1h2.5v40.1zM1447.0 823.4v-33.4h2.5v33.4zM1448.6 823.4v-46.8h2.5v46.8zM1450.3 823.4v-43.4h2.5v43.4zM1451.9 823.4v-33.4h2.5v33.4zM1453.5 823.4v-40.1h2.5v40.1zM1455.2 823.4v-56.8h2.5v56.8zM1456.8 823.4v-46.8h2.5v46.8zM1458.4 823.4v-50.1h2.5v50.1zM1460.1 823.4v-56.8h2.5v56.8zM1461.7 823.4v-50.1h2.5v50.1zM1463.3 823.4v-46.8h2.5v46.8zM1465.0 823.4v-43.4h2.5v43.4zM1466.6 823.4v-73.5h2.5v73.5zM1468.2 823.4v-76.8h2.5v76.8zM1469.9 823.4v-73.5h2.5v73.5zM1471.5 823.4v-60.1h2.5v60.1zM1473.1 823.4v-53.4h2.5v53.4zM1474.8 823.4v-40.1h2.5v40.1zM1476.4 823.4v-36.7h2.5v36.7zM1478.0 823.4v-76.8h2.5v76.8zM1479.7 823.4v-66.8h2.5v66.8zM1481.3 823.4v-60.1h2.5v60.1zM1482.9 823.4v-43.4h2.5v43.4zM1484.6 823.4v-70.1h2.5v70.1zM1486.2 823.4v-46.8h2.5v46.8zM1487.8 823.4v-36.7h2.5v36.7zM1489.5 823.4v-63.5h2.5v63.5zM1491.1 823.4v-33.4h2.5v33.4zM1492.7 823.4v-70.1h2.5v70.1zM1494.4 823.4v-73.5h2.5v73.5zM1496.0 823.4v-66.8h2.5v66.8zM1497.6 823.4v-63.5h2.5v63.5zM1499.3 823.4v-50.1h2.5v50.1zM1500.9 823.4v-83.5h2.5v83.5zM1502.5 823.4v-60.1h2.5v60.1zM1504.2 823.4v-53.4h2.5v53.4zM1505.8 823.4v-73.5h2.5v73.5zM1507.4 823.4v-60.1h2.5v60.1zM1509.0 823.4v-76.8h2.5v76.8zM1510.7 823.4v-46.8h2.5v46.8zM1512.3 823.4v-90.2h2.5v90.2zM1513.9 823.4v-66.8h2.5v66.8zM1515.6 823.4v-46.8h2.5v46.8zM1517.2 823.4v-80.2h2.5v80.2zM1518.8 823.4v-33.4h2.5v33.4zM1520.5 823.4v-63.5h2.5v63.5zM1522.1 823.4v-43.4h2.5v43.4zM1523.7 823.4v-50.1h2.5v50.1zM1525.4 823.4v-60.1h2.5v60.1zM1527.0 823.4v-80.2h2.5v80.2zM1528.6 823.4v-63.5h2.5v63.5zM1530.3 823.4v-73.5h2.5v73.5zM1531.9 823.4v-43.4h2.5v43.4zM1533.5 823.4v-70.1h2.5v70.1zM1535.2 823.4v-66.8h2.5v66.8zM1536.8 823.4v-70.1h2.5v70.1zM1538.4 823.4v-53.4h2.5v53.4zM1540.1 823.4v-56.8h2.5v56.8zM1541.7 823.4v-76.8h2.5v76.8zM1543.3 823.4v-40.1h2.5v40.1zM1545.0 823.4v-40.1h2.5v40.1zM1546.6 823.4v-76.8h2.5v76.8zM1548.2 823.4v-30.1h2.5v30.1zM1549.9 823.4v-70.1h2.5v70.1zM1551.5 823.4v-70.1h2.5v70.1zM1553.1 823.4v-56.8h2.5v56.8zM1554.8 823.4v-36.7h2.5v36.7zM1556.4 823.4v-63.5h2.5v63.5zM1558.0 823.4v-80.2h2.5v80.2zM1559.7 823.4v-66.8h2.5v66.8zM1561.3 823.4v-63.5h2.5v63.5zM1562.9 823.4v-63.5h2.5v63.5zM1564.6 823.4v-53.4h2.5v53.4zM1566.2 823.4v-20.0h2.5v20.0zM1567.8 823.4v-40.1h2.5v40.1zM1569.5 823.4v-56.8h2.5v56.8zM1571.1 823.4v-36.7h2.5v36.7zM1572.7 823.4v-50.1h2.5v50.1zM1574.4 823.4v-56.8h2.5v56.8zM1576.0 823.4v-16.7h2.5v16.7zM1577.6 823.4v-36.7h2.5v36.7zM1579.3 823.4v-23.4h2.5v23.4zM1580.9 823.4v-33.4h2.5v33.4zM1582.5 823.4v-30.1h2.5v30.1zM1584.2 823.4v-43.4h2.5v43.4zM1585.8 823.4v-23.4h2.5v23.4zM1587.4 823.4v-30.1h2.5v30.1zM1589.1 823.4v-30.1h2.5v30.1zM1590.7 823.4v-16.7h2.5v16.7zM1592.3 823.4v-20.0h2.5v20.0zM1593.9 823.4v-20.0h2.5v20.0zM1595.6 823.4v-20.0h2.5v20.0zM1597.2 823.4v-26.7h2.5v26.7zM1598.8 823.4v-16.7h2.5v16.7zM1600.5 823.4v-16.7h2.5v16.7zM1603.7 823.4v-16.7h2.5v16.7zM1605.4 823.4v-20.0h2.5v20.0zM1607.0 823.4v-23.4h2.5v23.4zM1608.6 823.4v-20.0h2.5v20.0zM1610.3 823.4v-23.4h2.5v23.4zM1611.9 823.4v-20.0h2.5v20.0zM1613.5 823.4v-20.0h2.5v20.0zM1615.2 823.4v-26.7h2.5v26.7zM1616.8 823.4v-20.0h2.5v20.0zM1618.4 823.4v-23.4h2.5v23.4zM1620.1 823.4v-20.0h2.5v20.0zM1621.7 823.4v-26.7h2.5v26.7zM1623.3 823.4v-20.0h2.5v20.0zM1625.0 823.4v-13.4h2.5v13.4zM1626.6 823.4v-33.4h2.5v33.4zM1628.2 823.4v-23.4h2.5v23.4zM1629.9 823.4v-33.4h2.5v33.4zM1631.5 823.4v-30.1h2.5v30.1zM1633.1 823.4v-40.1h2.5v40.1zM1634.8 823.4v-30.1h2.5v30.1zM1636.4 823.4v-23.4h2.5v23.4zM1638.0 823.4v-40.1h2.5v40.1zM1639.7 823.4v-43.4h2.5v43.4zM1641.3 823.4v-36.7h2.5v36.7zM1642.9 823.4v-46.8h2.5v46.8zM1644.6 823.4v-40.1h2.5v40.1zM1646.2 823.4v-30.1h2.5v30.1zM1647.8 823.4v-43.4h2.5v43.4zM1649.5 823.4v-53.4h2.5v53.4zM1651.1 823.4v-56.8h2.5v56.8zM1652.7 823.4v-33.4h2.5v33.4zM1654.4 823.4v-46.8h2.5v46.8zM1656.0 823.4v-63.5h2.5v63.5zM1657.6 823.4v-60.1h2.5v60.1zM1659.3 823.4v-60.1h2.5v60.1zM1660.9 823.4v-76.8h2.5v76.8zM1662.5 823.4v-70.1h2.5v70.1zM1664.2 823.4v-96.9h2.5v96.9zM1665.8 823.4v-83.5h2.5v83.5zM1667.4 823.4v-96.9h2.5v96.9zM1669.1 823.4v-60.1h2.5v60.1zM1670.7 823.4v-53.4h2.5v53.4zM1672.3 823.4v-70.1h2.5v70.1zM1674.0 823.4v-90.2h2.5v90.2zM1675.6 823.4v-66.8h2.5v66.8zM1677.2 823.4v-40.1h2.5v40.1zM1678.8 823.4v-60.1h2.5v60.1zM1680.5 823.4v-46.8h2.5v46.8zM1682.1 823.4v-66.8h2.5v66.8zM1683.7 823.4v-63.5h2.5v63.5zM1685.4 823.4v-76.8h2.5v76.8zM1687.0 823.4v-66.8h2.5v66.8zM1688.6 823.4v-66.8h2.5v66.8zM1690.3 823.4v-36.7h2.5v36.7zM1691.9 823.4v-53.4h2.5v53.4zM1693.5 823.4v-40.1h2.5v40.1zM1695.2 823.4v-73.5h2.5v73.5zM1696.8 823.4v-73.5h2.5v73.5zM1698.4 823.4v-50.1h2.5v50.1zM1700.1 823.4v-63.5h2.5v63.5zM1701.7 823.4v-46.8h2.5v46.8zM1703.3 823.4v-46.8h2.5v46.8zM1705.0 823.4v-50.1h2.5v50.1zM1706.6 823.4v-53.4h2.5v53.4zM1708.2 823.4v-60.1h2.5v60.1zM1709.9 823.4v-50.1h2.5v50.1zM1711.5 823.4v-43.4h2.5v43.4zM1713.1 823.4v-50.1h2.5v50.1zM1714.8 823.4v-33.4h2.5v33.4zM1716.4 823.4v-26.7h2.5v26.7zM1718.0 823.4v-50.1h2.5v50.1zM1719.7 823.4v-46.8h2.5v46.8zM1721.3 823.4v-50.1h2.5v50.1zM1722.9 823.4v-50.1h2.5v50.1zM1724.6 823.4v-50.1h2.5v50.1zM1726.2 823.4v-33.4h2.5v33.4zM1727.8 823.4v-20.0h2.5v20.0zM1729.5 823.4v-30.1h2.5v30.1zM1731.1 823.4v-16.7h2.5v16.7zM1732.7 823.4v-26.7h2.5v26.7zM1734.4 823.4v-23.4h2.5v23.4zM1736.0 823.4v-20.0h2.5v20.0zM1737.6 823.4v-6.7h2.5v6.7zM1739.3 823.4v-10.0h2.5v10.0zM1740.9 823.4v-6.7h2.5v6.7zM1742.5 823.4v-20.0h2.5v20.0zM1744.2 823.4v-20.0h2.5v20.0zM1745.8 823.4v-20.0h2.5v20.0zM1747.4 823.4v-13.4h2.5v13.4zM1749.1 823.4v-10.0h2.5v10.0zM1750.7 823.4v-13.4h2.5v13.4zM1752.3 823.4v-10.0h2.5v10.0zM1754.0 823.4v-16.7h2.5v16.7zM1755.6 823.4v-16.7h2.5v16.7zM1757.2 823.4v-16.7h2.5v16.7zM1758.9 823.4v-20.0h2.5v20.0zM1760.5 823.4v-16.7h2.5v16.7zM1762.1 823.4v-20.0h2.5v20.0zM1763.7 823.4v-16.7h2.5v16.7zM1765.4 823.4v-20.0h2.5v20.0zM1767.0 823.4v-13.4h2.5v13.4zM1768.6 823.4v-20.0h2.5v20.0zM1770.3 823.4v-20.0h2.5v20.0zM1771.9 823.4v-16.7h2.5v16.7zM1773.5 823.4v-10.0h2.5v10.0zM1775.2 823.4v-10.0h2.5v10.0zM1776.8 823.4v-13.4h2.5v13.4zM1778.4 823.4v-10.0h2.5v10.0zM1780.1 823.4v-10.0h2.5v10.0zM1781.7 823.4v-10.0h2.5v10.0zM1783.3 823.4v-10.0h2.5v10.0zM1785.0 823.4v-6.7h2.5v6.7zM1786.6 823.4v-10.0h2.5v10.0zM1788.2 823.4v-13.4h2.5v13.4zM1789.9 823.4v-10.0h2.5v10.0zM1791.5 823.4v-6.7h2.5v6.7zM1793.1 823.4v-10.0h2.5v10.0zM1794.8 823.4v-10.0h2.5v10.0zM1796.4 823.4v-6.7h2.5v6.7zM1798.0 823.4v-6.7h2.5v6.7zM1799.7 823.4v-6.7h2.5v6.7zM1801.3 823.4v-10.0h2.5v10.0zM1802.9 823.4v-3.3h2.5v3.3zM1804.6 823.4v-6.7h2.5v6.7zM1806.2 823.4v-3.3h2.5v3.3zM1807.8 823.4v-6.7h2.5v6.7zM1811.1 823.4v-13.4h2.5v13.4zM1814.4 823.4v-10.0h2.5v10.0zM1832.3 823.4v-3.3h2.5v3.3zM1834.0 823.4v-3.3h2.5v3.3zM1837.2 823.4v-3.3h2.5v3.3zM1843.8 823.4v-3.3h2.5v3.3zM1847.0 823.4v-6.7h2.5v6.7zM1848.7 823.4v-6.7h2.5v6.7zM1850.3 823.4v-6.7h2.5v6.7zM1851.9 823.4v-6.7h2.5v6.7zM1853.5 823.4v-10.0h2.5v10.0zM1855.2 823.4v-13.4h2.5v13.4zM1856.8 823.4v-13.4h2.5v13.4zM1858.4 823.4v-10.0h2.5v10.0zM1860.1 823.4v-6.7h2.5v6.7zM1861.7 823.4v-10.0h2.5v10.0zM1863.3 823.4v-10.0h2.5v10.0zM1865.0 823.4v-10.0h2.5v10.0zM1866.6 823.4v-10.0h2.5v10.0zM1868.2 823.4v-3.3h2.5v3.3zM1869.9 823.4v-10.0h2.5v10.0zM1871.5 823.4v-6.7h2.5v6.7zM1873.1 823.4v-6.7h2.5v6.7zM1874.8 823.4v-3.3h2.5v3.3z" fill="#0c4fb4"/><path d="M1033.5 590V823.9H1876M1033.5 823.5h-5M1033.5 790.5h-5M1033.5 757.5h-5M1033.5 723.5h-5M1033.5 690.5h-5M1033.5 656.5h-5M1033.5 623.5h-5M1033.5 590.5h-5M1033.5 823.4v5M1132.5 823.4v5M1231.5 823.4v5M1332.5 823.4v5M1432.5 823.4v5M1532.5 823.4v5M1629.5 823.4v5M1728.5 823.4v5M1828.5 823.4v5" stroke="#777" stroke-width="1" fill="none"/><text x="1020.0" y="827.6" font-size="11.5" fill="#e8e8e8" text-anchor="end">0</text><text x="1020.0" y="794.2" font-size="11.5" fill="#e8e8e8" text-anchor="end">10</text><text x="1020.0" y="760.8" font-size="11.5" fill="#e8e8e8" text-anchor="end">20</text><text x="1020.0" y="727.4" font-size="11.5" fill="#e8e8e8" text-anchor="end">30</text><text x="1020.0" y="694.0" font-size="11.5" fill="#e8e8e8" text-anchor="end">40</text><text x="1020.0" y="660.6" font-size="11.5" fill="#e8e8e8" text-anchor="end">50</text><text x="1020.0" y="627.2" font-size="11.5" fill="#e8e8e8" text-anchor="end">60</text><text x="1020.0" y="593.8" font-size="11.5" fill="#e8e8e8" text-anchor="end">70</text><text x="1036.0" y="842.0" font-size="11.5" fill="#e8e8e8">Mär</text><text x="1135.0" y="842.0" font-size="11.5" fill="#e8e8e8">Mai</text><text x="1234.0" y="842.0" font-size="11.5" fill="#e8e8e8">Jul</text><text x="1335.0" y="842.0" font-size="11.5" fill="#e8e8e8">Sep</text><text x="1435.0" y="842.0" font-size="11.5" fill="#e8e8e8">Nov</text><text x="1535.0" y="842.0" font-size="11.5" fill="#e8e8e8" font-weight="700">2021</text><text x="1632.0" y="842.0" font-size="11.5" fill="#e8e8e8">Mär</text><text x="1731.0" y="842.0" font-size="11.5" fill="#e8e8e8">Mai</text><text x="1830.0" y="842.0" font-size="11.5" fill="#e8e8e8">Jul</text><circle cx="1032" cy="582" r="9" fill="#fff"/><path d="M1030.5 578v8M1033.5 578v8" stroke="#999" stroke-width="1"/><circle cx="1876" cy="582" r="9" fill="#fff"/><path d="M1874.5 578v8M1877.5 578v8" stroke="#999" stroke-width="1"/><circle cx="1342" cy="873" r="8" fill="#0c4fb4"/><circle cx="1471.5" cy="873" r="8" fill="#f8a81b"/><text x="1355.0" y="877.5" font-size="11" fill="#e8e8e8" textLength="95.0" lengthAdjust="spacingAndGlyphs">Erkrankungsdatum</text><text x="1484.0" y="877.5" font-size="11" fill="#e8e8e8" textLength="64.5" lengthAdjust="spacingAndGlyphs">Meldedatum</text></svg>
<div class="t" style="left:1175.0px;top:529.4px;font-size:15.5px;line-height:15.5px;color:#fff;font-weight:700;letter-spacing:0.155px;">COVID-19-Fälle/Tag nach <span style="text-decoration:underline">Erkrankungs-/</span>Meldedatum (siehe Erläuterung)</div>
<div class="b" style="left:993px;top:475px;width:129px;height:26px;background:#222;border-bottom:2px solid #2b7fd6;box-sizing:border-box;"></div>
<div class="t" style="left:1005.2px;top:481.1px;font-size:13px;line-height:13px;color:#f2f2f2;letter-spacing:-0.015px;">Fälle Altersgruppe</div>
<div class="b" style="left:1127px;top:475px;width:237px;height:26px;background:#000;border:1px solid #3a3a3a;"></div>
<div class="t" style="left:1139.2px;top:481.1px;font-size:13px;line-height:13px;color:#f2f2f2;letter-spacing:-0.099px;">Fälle/100.000 EW in der Altersgruppe</div>
<div class="b" style="left:1369px;top:475px;width:159px;height:26px;background:#000;border:1px solid #3a3a3a;"></div>
<div class="t" style="left:1381.2px;top:481.1px;font-size:13px;line-height:13px;color:#f2f2f2;letter-spacing:-0.028px;">Todesfälle Altersgruppe</div>
<div class="b" style="left:1533px;top:475px;width:267px;height:26px;background:#000;border:1px solid #3a3a3a;"></div>
<div class="t" style="left:1545.2px;top:481.1px;font-size:13px;line-height:13px;color:#f2f2f2;letter-spacing:-0.095px;">Todesfälle/100.000 EW in der Altersgruppe</div>
<div class="b" style="left:993px;top:914px;width:150px;height:26px;background:#222;border-bottom:2px solid #2b7fd6;box-sizing:border-box;"></div>
<div class="t" style="left:1005.2px;top:920.1px;font-size:13px;line-height:13px;color:#f2f2f2;letter-spacing:-0.272px;">Fälle/Tag (Erkrankung)</div>
<div class="b" style="left:1148px;top:914px;width:137px;height:26px;background:#000;border:1px solid #3a3a3a;"></div>
<div class="t" style="left:1160.2px;top:920.1px;font-size:13px;line-height:13px;color:#f2f2f2;letter-spacing:-0.125px;">Fälle/Tag (Meldung)</div>
<div class="b" style="left:1291px;top:914px;width:107px;height:26px;background:#000;border:1px solid #3a3a3a;"></div>
<div class="t" style="left:1303.2px;top:920.1px;font-size:13px;line-height:13px;color:#f2f2f2;letter-spacing:-0.135px;">Fälle kumuliert</div>
<div class="b" style="left:1403px;top:914px;width:90px;height:26px;background:#000;border:1px solid #3a3a3a;"></div>
<div class="t" style="left:1415.2px;top:920.1px;font-size:13px;line-height:13px;color:#f2f2f2;letter-spacing:-0.155px;">Erläuterung</div>
<div class="b" style="left:1498px;top:914px;width:171px;height:26px;background:#000;border:1px solid #3a3a3a;"></div>
<div class="t" style="left:1510.2px;top:920.1px;font-size:13px;line-height:13px;color:#f2f2f2;letter-spacing:-0.258px;">Datenschutz &amp; Impressum</div>
<div class="b" style="left:392px;top:150px;width:578px;height:764px;background:#222;border:1px solid #363636;"></div>
<div class="t" style="left:477.5px;top:164.5px;font-size:16px;line-height:16px;color:#fff;font-weight:700;letter-spacing:0.069px;">COVID-19-Fälle der letzten 7 Tage/100.000 Einwohner</div>
<svg class="b" style="left:393px;top:189px" width="576" height="713" viewBox="393 189 576 713"><defs><clipPath id="mc"><rect x="393" y="189" width="576" height="713"/></clipPath></defs><g clip-path="url(#mc)"><rect x="393" y="189" width="576" height="713" fill="#3a3a3a"/><polygon points="393.0,189.0 969.0,189.0 969.0,287.0 959.0,295.0 948.0,302.0 935.5,311.0 922.0,316.0 909.0,319.0 896.0,324.0 883.0,329.0 875.0,334.0 872.0,337.0 867.0,342.0 868.0,350.0 873.0,360.0 840.0,365.0 700.0,345.0 627.0,345.0 420.0,345.0 400.0,430.0 393.0,432.0" fill="#1f2427"/><polygon points="575.8,189.0 662.5,189.0 657.0,193.0 648.0,197.6 651.0,203.0 654.6,208.7 650.0,215.0 648.0,221.0 650.0,232.0 645.0,238.0 639.0,243.0 640.0,249.0 643.6,254.0 654.6,259.0 662.0,264.0 661.0,270.0 627.0,270.0 601.0,232.0 599.4,216.5 583.7,208.7 577.4,204.0" fill="#3a3a3a"/><polygon points="657.8,208.7 670.4,205.5 686.2,210.2 697.2,221.3 698.8,233.9 694.1,244.9 683.0,248.1 670.4,244.9 660.9,237.1 654.6,226.0 654.6,216.5" fill="#3a3a3a"/><polygon points="714.6,188.9 717.7,203.9 711.4,216.5 717.7,232.3 725.6,237.1 741.4,237.1 749.3,244.9 758.7,238.6 765.0,232.3 772.9,232.3 784.0,224.4 796.6,221.3 812.4,222.9 820.3,222.1 828.1,224.4 836.0,221.3 843.9,216.5 850.2,197.6 853.1,194.5 853.1,188.9" fill="#3a3a3a"/><polygon points="708.3,260.7 717.7,257.6 733.5,263.9 743.0,260.7 754.0,254.4 763.5,252.8 777.7,254.4 765.0,260.7 754.0,273.3 749.3,285.9 746.1,276.5 733.5,281.2 717.7,274.9 708.3,268.6" fill="#3a3a3a"/><polygon points="702.7,241.0 705.9,242.6 696.0,271.8 691.7,272.5" fill="#3a3a3a"/><polygon points="673.6,259.1 684.6,258.3 687.8,263.9 679.9,267.0" fill="#3a3a3a"/><polygon points="876.6,231.0 881.7,232.0 896.0,243.0 895.0,252.0 884.0,250.6 875.8,244.0" fill="#3a3a3a"/><polyline points="891.0,556.0 909.0,567.0 930.0,580.0 949.0,588.0 956.6,601.0 970.0,614.0" fill="none" stroke="#303030" stroke-width="1.5" stroke-linejoin="round"/><polyline points="837.0,725.0 857.0,720.0 877.0,716.0 900.0,722.0 921.0,725.0 945.0,714.0 970.0,707.0" fill="none" stroke="#303030" stroke-width="1.5" stroke-linejoin="round"/><polyline points="393.0,812.0 420.0,800.0 440.0,790.0 460.0,775.0 478.0,770.0 500.0,772.0 520.0,766.0 548.0,790.0" fill="none" stroke="#303030" stroke-width="1.5" stroke-linejoin="round"/><polyline points="610.0,800.0 625.0,815.0 640.0,826.0 660.0,830.0 680.0,838.0 700.0,842.0 720.0,836.0 745.0,835.0 770.0,845.0 790.0,853.0 810.0,862.0 835.0,870.0 860.0,866.0 880.0,868.0 900.0,876.0 925.0,880.0 950.0,884.0 970.0,886.0" fill="none" stroke="#303030" stroke-width="1.5" stroke-linejoin="round"/><polyline points="470.0,840.0 490.0,852.0 500.0,870.0 520.0,880.0 545.0,872.0 560.0,880.0 590.0,876.0 600.0,860.0 625.0,850.0 640.0,826.0" fill="none" stroke="#303030" stroke-width="1.5" stroke-linejoin="round"/><polyline points="950.0,720.0 955.0,750.0 948.0,780.0 958.0,800.0 950.0,830.0 960.0,850.0" fill="none" stroke="#303030" stroke-width="1.5" stroke-linejoin="round"/><polyline points="393.0,700.0 420.0,690.0 450.0,688.0 480.0,684.0 497.0,684.0" fill="none" stroke="#303030" stroke-width="1.5" stroke-linejoin="round"/><polygon points="600.0,270.0 627.0,266.0 636.0,263.5 646.0,261.0 657.0,265.0 662.0,277.0 659.0,287.0 667.0,295.0 680.5,300.0 696.0,306.0 709.0,300.0 711.0,291.0 717.0,292.5 720.0,298.0 711.0,303.0 707.0,316.0 699.0,324.0 699.0,332.0 707.0,331.0 720.0,333.0 730.0,329.0 736.0,321.5 749.0,319.0 759.0,313.6 770.0,305.7 778.0,295.0 785.0,299.0 791.0,298.0 796.0,301.0 800.0,300.0 803.0,306.0 808.0,309.0 808.5,314.0 814.0,316.0 818.6,320.5 826.0,320.0 829.0,316.0 833.0,318.0 835.4,326.0 840.0,327.0 845.5,333.0 851.0,342.5 856.7,353.0 860.6,368.8 862.0,384.6 859.0,400.0 851.0,411.0 851.0,419.0 862.0,429.0 872.4,440.5 876.4,461.5 875.0,482.6 879.0,498.0 883.0,516.8 889.5,535.0 885.6,553.6 880.0,566.7 872.4,560.0 862.0,556.0 851.4,564.0 838.0,572.0 822.5,577.0 809.0,587.8 796.0,595.7 777.8,598.0 767.0,603.5 762.0,611.4 772.5,624.6 777.8,640.0 775.0,651.0 783.0,666.7 799.0,680.0 815.0,698.0 832.7,711.5 835.0,722.0 819.0,728.0 806.0,744.0 789.0,762.5 787.6,773.0 795.5,769.0 798.0,778.0 802.0,789.0 799.5,800.7 790.0,796.7 785.0,786.0 772.0,786.0 758.7,788.8 732.4,794.0 724.5,802.0 711.4,806.0 703.5,798.0 682.5,796.7 674.6,813.8 669.0,810.0 664.0,798.0 643.0,794.0 627.0,788.8 616.7,783.6 603.6,788.8 598.0,782.0 590.4,783.6 585.0,791.5 569.4,792.8 559.0,796.7 549.7,788.8 551.0,773.0 553.6,757.0 559.0,741.5 564.0,725.7 572.0,710.0 577.0,699.4 564.0,691.0 551.0,687.5 527.0,685.5 495.8,683.0 480.0,670.0 450.0,640.0 420.0,600.0 410.0,500.0 420.0,400.0 440.0,330.0 500.0,300.0 560.0,290.0" fill="#fdee82" stroke="#3a3420" stroke-width="1"/><polygon points="808.5,279.0 813.0,280.0 817.0,277.5 818.6,284.0 824.0,284.0 828.7,286.0 830.4,294.0 827.0,297.0 828.0,301.0 830.0,304.0 826.0,305.5 821.0,303.5 816.0,305.5 811.0,304.5 808.5,303.0 801.8,301.0 803.0,297.0 805.0,292.7 802.0,289.0 803.5,286.0 807.0,284.0" fill="#fdf9cd" stroke="#3a3420" stroke-width="1"/><path d="M633.6 572.6L628.7 570.8L628.7 566.6L627.7 562.5L626.0 561.7L624.0 562.1L622.6 562.9L620.2 565.4L618.6 568.1L617.5 571.2L617.5 574.7L622.0 575.8L622.0 580.9L623.8 583.3L623.8 583.3L627.4 582.7L629.3 578.7L631.1 575.6L634.2 575.4ZM653.4 597.3L656.7 593.3L659.1 595.4L663.2 593.8L665.4 590.8L665.8 587.7L664.3 584.4L661.8 581.2L660.2 577.9L658.2 577.6L655.7 576.9L654.2 578.6L649.4 578.7L646.8 579.5L645.0 583.8L643.4 586.7L643.9 589.4L645.6 592.5L647.7 593.4L649.8 595.1ZM720.6 714.7L720.8 711.2L724.1 708.6L723.4 704.9L723.0 702.3L723.4 699.2L719.7 699.4L717.3 697.6L713.9 694.8L711.1 695.2L709.3 696.5L708.3 699.9L706.5 702.0L710.5 706.0L712.4 708.0L712.3 713.3L713.7 716.8L715.8 716.9L718.2 716.5ZM656.7 271.0L654.1 273.9L651.6 276.8L651.5 280.3L650.6 283.5L652.4 286.9L651.9 290.6L655.5 293.1L659.1 290.9L662.4 292.6L663.9 291.9L659.0 287.0L662.0 277.0L659.3 270.5ZM616.2 742.1L619.2 743.8L622.3 743.5L624.6 742.7L626.3 741.5L628.5 738.8L626.0 733.0L624.5 729.4L627.3 726.1L626.1 724.7L624.1 724.1L622.4 724.4L619.2 727.1L617.9 728.6L613.9 729.7L613.6 733.0L611.6 737.3L614.1 740.7ZM653.4 622.2L656.0 625.8L658.5 624.6L661.6 623.5L665.1 623.7L667.7 621.0L667.9 617.5L667.6 614.4L665.3 611.7L664.7 608.0L661.4 607.9L659.1 607.5L656.1 610.2L652.1 611.9L653.6 617.1L653.3 620.6L649.9 621.2ZM643.8 626.3L642.8 631.2L643.8 635.4L643.0 638.6L646.0 636.1L649.8 639.9L653.1 636.9L656.1 637.2L657.6 632.6L657.8 629.3L656.0 625.8L653.4 622.2L649.9 621.2L646.6 622.5L643.6 621.9ZM631.8 424.6L637.6 420.9L641.7 417.8L644.5 415.8L645.4 414.4L646.1 413.2L646.0 410.6L643.7 407.0L643.8 403.6L642.4 399.1L639.8 398.5L634.9 398.8L634.3 393.9L629.6 393.6L626.4 399.8L621.7 401.7L618.8 406.3L615.0 408.2L617.6 410.5L623.8 415.3L622.7 422.0L627.1 423.3ZM792.9 488.4L793.7 484.9L790.6 480.7L790.3 476.4L792.0 469.6L787.4 464.7L783.5 463.7L780.0 466.0L777.6 467.3L775.0 470.6L777.5 473.6L774.8 476.5L772.9 480.1L772.9 485.3L776.2 487.7L780.7 489.6L782.2 493.3L785.7 493.2L789.6 490.9ZM815.3 480.4L818.3 482.0L821.9 482.5L824.2 480.5L826.4 478.5L830.2 477.3L833.1 475.9L830.7 473.3L835.0 469.9L831.5 465.2L832.1 462.1L828.4 462.9L825.2 459.0L823.0 458.3L819.1 459.4L815.1 461.8L814.7 467.2L816.2 470.2L811.6 473.1L810.9 476.0L812.4 479.1ZM778.5 408.3L781.5 413.4L784.0 415.0L787.2 420.2L792.9 414.9L799.5 411.7L804.2 409.5L810.6 405.9L805.6 397.7L799.5 393.9L799.8 386.7L793.2 382.0L787.2 384.9L783.0 386.8L779.0 389.9L774.2 394.7L775.3 398.2L773.8 400.8L774.0 404.8ZM806.9 334.2L800.2 334.4L796.5 336.4L787.9 337.7L783.6 340.2L782.2 347.1L779.6 350.9L779.4 357.4L785.2 359.7L787.0 364.4L792.1 368.5L794.8 374.8L801.8 373.9L805.8 372.8L809.4 366.3L814.2 365.5L816.6 359.0L818.3 348.5L816.7 343.4L816.2 334.3ZM686.1 499.6L680.4 499.2L676.3 499.2L673.6 501.1L674.4 505.0L671.2 507.9L669.4 511.0L671.6 511.8L672.5 513.5L676.9 513.5L680.7 511.3L684.1 512.4L686.9 512.6L687.7 510.7L689.9 509.4L689.4 505.8L688.8 501.5ZM557.7 760.9L561.8 758.9L560.5 756.2L557.1 753.8L554.7 753.7L553.6 757.0L551.7 768.8L554.4 768.4L555.7 765.8L558.8 764.6ZM781.2 446.8L785.6 444.9L789.1 448.3L792.5 453.5L795.7 452.0L797.5 449.4L797.6 445.8L797.8 441.2L800.2 437.8L795.9 433.0L791.9 432.4L791.1 425.1L786.8 423.1L783.8 424.3L782.7 427.8L778.5 430.4L776.6 431.9L776.9 436.1L777.9 439.3L776.7 442.2ZM771.7 785.5L770.1 785.9L766.2 783.6L763.7 783.3L761.7 784.5L759.7 785.9L759.8 787.7L759.6 788.6L772.0 786.0L773.1 786.0ZM685.9 416.1L688.7 419.4L687.2 424.2L690.2 428.8L693.4 429.3L696.9 430.7L699.4 434.7L703.7 433.8L707.0 433.5L708.9 431.9L711.0 427.6L712.9 425.8L711.5 421.9L709.4 416.1L705.1 410.8L705.0 406.7L699.4 401.2L697.5 400.9L695.1 403.2L694.3 408.3L689.2 408.3L687.5 411.7ZM847.1 376.0L855.8 380.7L862.0 384.1L860.6 368.8L856.7 353.0L853.0 346.2L851.3 346.8L848.1 354.8L845.7 363.5L841.6 365.3L838.7 374.6ZM631.2 292.9L632.4 289.4L632.3 285.7L631.9 282.2L627.9 279.1L628.0 274.3L623.7 273.0L621.7 273.7L616.9 270.5L613.8 271.1L601.0 274.1L592.7 275.5L580.5 279.8L570.2 284.9L584.7 287.6L600.3 290.8L608.5 296.0L623.1 298.2L625.4 297.0L628.8 296.3ZM697.2 330.9L699.0 329.4L699.0 328.4L697.0 324.5L696.2 319.1L692.3 316.8L689.9 313.4L687.1 316.0L680.9 314.3L680.2 318.3L675.7 318.9L677.4 324.2L676.2 326.1L673.5 330.6L676.2 333.8L678.1 336.7L681.6 335.6L686.6 334.8L692.8 332.1L696.8 333.7ZM586.2 768.6L587.8 764.2L588.4 760.9L587.8 757.9L584.7 757.4L582.0 755.3L577.7 755.7L574.1 756.6L572.8 759.6L574.6 764.5L575.0 768.1L574.1 771.6L577.9 773.5L582.3 772.8L585.3 772.4ZM740.3 585.4L738.2 588.8L742.6 591.3L742.5 594.8L745.4 594.9L747.3 596.2L750.4 596.2L751.2 589.0L756.3 590.2L757.3 587.3L758.1 583.4L756.5 579.3L753.2 576.1L747.7 578.9L745.7 574.4L741.7 575.1L740.3 578.1L740.0 580.8L737.4 583.2ZM650.8 671.8L649.2 669.2L648.9 665.9L646.3 663.1L642.5 661.3L638.4 662.8L635.7 665.7L633.3 668.7L631.6 670.6L633.7 673.2L635.2 676.4L639.7 676.4L642.0 676.2L645.6 674.1L650.2 675.7L651.0 675.1ZM762.7 769.9L766.0 772.6L766.8 776.0L770.0 775.1L773.0 774.9L776.6 772.2L775.3 768.0L776.4 764.6L775.3 762.7L772.5 761.6L770.5 758.8L768.3 763.5L765.2 765.4L761.7 767.0ZM767.8 647.9L766.0 649.9L762.8 651.0L762.0 655.6L761.2 657.8L761.5 662.3L764.4 665.3L767.4 663.8L770.1 663.8L772.7 665.1L774.9 663.4L776.3 660.0L778.5 657.8L775.0 651.0L775.4 649.5L774.7 647.6L772.5 646.2L769.3 645.2ZM789.3 780.9L791.6 784.6L795.1 785.7L797.5 787.7L800.5 787.3L800.7 785.5L798.0 778.0L795.9 770.4L795.0 769.6L793.0 770.3L791.7 770.9L790.4 773.9L787.7 776.0L786.9 778.2ZM839.2 570.4L835.3 572.9L838.0 572.0L840.0 570.8ZM830.5 570.0L827.9 571.8L826.4 574.5L825.5 576.0L833.7 573.4ZM703.1 467.4L703.4 470.9L703.6 475.6L706.8 477.6L709.6 475.1L714.1 481.0L717.4 480.0L721.4 478.1L719.8 473.6L722.4 471.0L722.3 465.4L721.7 461.8L720.5 459.0L716.4 459.0L714.4 456.9L711.6 460.1L707.8 463.3L704.9 461.1L700.6 463.8ZM755.7 544.8L758.3 542.3L757.8 539.0L758.7 533.9L754.3 529.8L754.7 526.7L752.8 523.9L749.4 522.8L746.0 522.0L742.9 522.7L740.4 524.3L739.0 526.4L739.2 530.4L739.4 534.2L738.1 538.3L740.8 543.0L745.1 544.6L747.9 544.2L752.1 545.7ZM699.9 773.1L698.3 776.5L696.4 777.4L697.3 782.4L700.4 783.7L702.9 787.0L703.4 789.9L707.3 789.1L710.5 789.7L714.0 788.4L714.6 782.7L717.8 780.3L717.8 776.3L711.9 774.6L711.6 770.6L708.1 772.4L705.1 771.7L702.5 770.2ZM836.7 476.3L839.5 478.7L839.6 482.4L843.6 482.2L845.3 481.8L847.0 481.7L850.6 479.8L853.7 477.6L854.6 472.9L853.1 469.3L855.7 466.6L855.2 464.4L850.0 463.1L845.9 460.4L841.0 462.7L837.9 458.7L835.4 460.4L832.1 462.1L831.5 465.2L835.0 469.9L830.7 473.3L833.1 475.9ZM560.6 739.3L564.1 738.9L563.9 734.4L565.7 731.5L562.7 729.9L559.4 740.1ZM636.2 267.1L636.3 263.4L636.0 263.5L627.0 266.0L613.8 268.0L613.8 271.1L616.9 270.5L621.7 273.7L623.7 273.0L628.0 274.3L631.1 270.9L634.5 269.9ZM717.7 637.3L718.3 634.3L722.4 632.5L722.8 629.0L718.9 627.0L717.7 623.0L719.6 618.9L717.5 616.8L714.6 616.9L712.2 617.1L714.0 620.1L710.6 623.7L707.1 625.1L708.1 629.2L711.6 630.9L714.0 633.8L715.8 637.1ZM799.1 792.2L799.6 795.9L799.1 800.5L799.5 800.7L801.5 791.1ZM733.6 377.2L735.4 379.4L743.0 381.1L746.1 385.6L748.4 385.1L750.9 383.7L755.2 376.1L754.5 369.3L758.0 364.5L762.2 357.9L761.1 354.0L755.1 354.2L755.0 348.5L751.0 345.7L747.0 348.9L738.6 347.7L733.2 350.6L728.6 350.5L730.6 354.9L726.0 362.7L724.9 366.4L727.9 373.4ZM647.9 363.9L648.7 359.1L649.8 355.2L653.1 352.1L649.1 348.6L647.6 346.5L647.3 339.5L646.8 336.5L644.4 336.0L640.8 336.9L636.6 337.6L631.7 337.1L627.2 340.4L624.3 345.3L626.4 349.7L620.9 354.3L621.7 358.4L624.4 360.1L627.7 363.1L629.2 364.0L630.9 367.7L634.9 368.5L636.7 364.7L641.3 367.9L644.2 366.4ZM592.0 713.5L595.6 709.6L599.8 712.5L602.5 711.4L603.5 707.6L599.8 705.8L603.6 702.4L601.6 698.7L598.8 697.3L596.4 696.9L592.2 697.7L591.4 700.7L588.7 702.3L589.3 705.4L587.1 707.2L587.3 710.5L588.5 712.3ZM766.4 730.9L767.1 728.3L771.8 724.5L772.8 721.3L772.9 720.7L767.0 719.4L767.7 714.9L761.7 714.7L758.4 711.2L754.2 712.6L752.2 715.2L751.3 717.9L750.7 721.7L749.7 723.9L753.9 723.2L754.4 728.5L759.4 730.4L761.7 732.3ZM672.5 699.0L669.6 697.5L667.7 699.6L664.9 700.4L661.6 702.4L662.5 705.4L661.0 708.6L663.6 709.3L667.1 708.9L670.5 709.9L673.1 713.9L676.0 712.0L677.5 707.7L675.8 705.1L676.2 701.0ZM567.5 772.1L563.2 771.6L559.8 769.3L558.8 764.6L555.7 765.8L554.4 768.4L551.7 768.8L551.0 773.0L550.7 776.2L554.9 778.8L555.5 781.8L559.9 782.6L561.4 777.8L566.2 779.5L569.7 776.1L570.6 773.8ZM835.4 460.4L837.9 458.7L838.8 454.0L841.4 450.0L841.7 443.6L838.9 438.4L838.1 437.3L833.9 438.5L830.9 436.2L826.7 439.8L823.6 436.9L819.6 439.4L822.5 447.7L821.6 450.6L817.4 456.1L817.6 458.0L819.1 459.4L823.0 458.3L825.2 459.0L828.4 462.9L832.1 462.1ZM677.5 685.0L674.9 682.9L673.0 686.7L670.0 687.5L668.1 690.9L668.7 694.3L669.6 697.5L672.5 699.0L676.2 701.0L676.7 697.5L679.2 695.7L683.1 694.1L683.2 690.2L681.4 686.4ZM655.6 267.6L657.3 265.7L657.0 265.0L646.0 261.0L636.3 263.4L636.2 267.1L634.5 269.9L640.3 269.4L643.4 273.4L646.0 275.3L651.6 276.8L654.1 273.9L656.7 271.0ZM572.2 711.6L573.8 709.7L573.6 706.7L572.0 710.0L570.6 712.8ZM662.9 671.3L662.9 667.8L665.9 665.1L667.8 662.0L667.5 661.5L665.6 659.5L662.2 658.4L659.6 657.5L656.1 658.5L652.4 660.0L649.4 662.6L648.9 665.9L649.2 669.2L650.8 671.8L651.0 675.1L654.2 677.1L657.8 677.0L660.0 675.1L662.9 674.8ZM690.9 377.8L695.3 379.1L697.9 373.2L700.5 370.2L698.6 367.6L698.3 362.9L699.1 360.5L699.7 356.9L692.2 357.1L686.8 358.1L681.4 353.3L675.2 353.3L673.7 353.8L672.8 355.5L670.7 359.9L673.7 361.4L671.7 366.1L673.5 368.9L675.1 372.8L681.2 376.4L682.1 378.6L687.6 381.7ZM672.3 492.5L673.9 489.2L676.8 488.5L674.6 485.1L671.5 484.3L671.1 480.0L666.9 480.0L663.3 481.6L660.5 482.2L660.1 484.1L658.4 486.1L660.0 489.4L660.9 492.3L664.2 491.4L667.1 496.1L671.6 495.7ZM628.7 432.1L631.0 437.2L639.6 437.9L640.8 442.8L645.1 441.4L647.0 438.8L648.8 435.4L647.4 431.2L646.6 426.0L642.5 420.7L644.5 415.8L641.7 417.8L637.6 420.9L631.8 424.6L627.1 423.3L625.9 426.1L625.0 428.1ZM732.1 442.0L736.3 444.9L738.5 447.1L743.0 444.8L747.2 447.1L749.3 448.6L753.4 445.7L753.1 441.3L754.1 437.3L758.1 430.3L757.0 426.6L755.0 424.2L754.0 420.7L751.5 417.8L746.6 417.1L744.6 413.0L739.5 414.1L734.8 420.2L733.5 426.5L731.5 432.6L731.4 438.8ZM667.1 496.1L664.2 491.4L660.9 492.3L659.1 494.3L656.9 496.9L657.1 500.7L658.8 504.1L658.8 508.3L664.4 507.9L663.9 511.7L666.9 510.8L669.4 511.0L671.2 507.9L674.4 505.0L673.6 501.1L673.5 498.3L671.6 495.7ZM657.8 350.9L663.4 355.5L669.6 353.0L672.8 355.5L673.7 353.8L675.2 353.3L677.5 350.4L674.3 345.5L675.8 341.0L678.1 336.7L676.2 333.8L673.5 330.6L667.7 331.4L663.0 330.2L659.3 332.3L652.5 331.3L650.6 335.3L646.8 336.5L647.3 339.5L647.6 346.5L649.1 348.6L653.1 352.1ZM845.6 439.4L850.5 441.0L855.0 443.5L861.2 443.7L863.3 442.3L867.0 441.5L868.1 439.1L867.3 434.8L862.0 429.0L851.0 419.0L851.0 414.3L848.1 414.7L845.3 414.2L846.2 420.5L840.0 427.2L840.5 433.3L838.1 437.3L838.9 438.4ZM820.5 321.5L821.8 326.3L819.7 330.5L827.7 337.1L834.3 335.5L844.2 344.9L851.3 346.8L853.0 346.2L851.0 342.5L845.5 333.0L840.0 327.0L835.4 326.0L833.0 318.0L829.0 316.0L826.0 320.0L820.5 320.4ZM823.0 498.8L826.1 497.1L826.2 492.3L823.6 489.5L821.3 486.2L821.9 482.5L818.3 482.0L815.3 480.4L812.4 479.1L810.6 480.7L809.5 482.2L810.9 485.8L808.9 490.8L806.3 493.1L809.5 497.4L811.9 500.7L817.2 498.9L820.2 502.7ZM732.3 773.5L733.3 777.8L740.0 778.7L739.1 784.9L741.0 783.7L745.5 785.0L748.6 782.1L750.5 779.8L752.4 776.4L751.3 772.4L750.1 769.7L746.5 767.9L744.1 768.3L741.8 764.6L738.2 763.8L736.1 767.8L732.8 769.2ZM630.5 683.4L625.1 684.4L622.5 686.3L622.9 689.8L628.6 693.0L624.6 698.1L628.7 700.5L631.7 700.4L634.3 699.7L637.7 697.1L636.9 692.4L638.1 688.7L635.6 685.9L633.7 683.0ZM747.5 741.1L751.3 742.8L755.4 743.2L756.7 741.1L760.7 739.9L762.2 735.8L761.5 734.0L761.7 732.3L759.4 730.4L754.4 728.5L753.9 723.2L749.7 723.9L746.8 724.5L745.0 726.2L742.8 729.8L742.9 732.6L744.7 736.7L744.6 739.3ZM774.0 692.5L770.4 693.6L767.0 693.9L768.3 696.7L767.7 699.4L766.2 702.4L768.3 703.7L771.8 706.1L774.6 705.2L776.0 701.6L780.2 701.3L781.1 698.1L780.4 695.2L779.5 691.6L777.9 690.6L776.0 690.0ZM745.3 686.4L740.8 691.5L740.0 694.1L740.8 698.9L741.4 699.6L745.4 696.8L748.6 696.2L753.0 697.1L752.8 693.9L756.4 691.7L757.0 687.1L753.8 684.1L749.9 686.0L748.2 682.8L745.8 680.3L744.3 681.3L743.2 682.1ZM664.1 469.0L662.3 471.3L657.8 472.4L657.0 476.0L661.7 478.8L660.5 482.2L663.3 481.6L666.9 480.0L671.1 480.0L673.7 477.7L674.6 474.2L673.0 471.6L673.2 468.9L668.8 467.9L666.4 465.2ZM586.5 773.8L587.9 775.1L590.3 777.2L593.1 775.5L596.1 776.3L598.8 773.8L600.5 772.2L599.2 766.5L601.9 764.3L599.7 761.8L599.0 758.6L597.0 757.9L594.7 758.8L592.1 761.7L588.4 760.9L587.8 764.2L586.2 768.6L585.3 772.4ZM496.3 516.6L536.9 524.7L571.9 527.9L620.1 534.0L621.5 533.1L622.2 531.4L621.1 527.0L622.0 522.0L621.5 518.2L619.1 514.6L605.7 514.7L594.5 511.2L581.6 507.3L572.3 508.7L538.5 511.5L510.8 514.4L486.2 514.9L462.8 515.3ZM657.7 785.5L654.3 788.3L654.6 791.9L657.4 795.5L659.6 795.7L663.6 795.5L666.0 796.9L667.7 794.0L670.8 791.9L668.2 789.5L667.4 785.8L666.9 782.2L663.6 783.7L661.3 781.0L657.9 782.0ZM759.1 510.1L755.6 511.0L753.0 513.7L753.2 517.7L751.0 520.8L749.4 522.8L752.8 523.9L754.7 526.7L759.2 524.3L765.1 525.8L768.2 523.2L773.7 524.8L773.8 522.1L775.3 519.3L773.0 516.0L769.2 512.8L764.6 514.0L762.7 508.9ZM704.4 305.8L701.2 309.7L697.4 309.2L694.7 309.6L690.8 310.9L689.9 313.4L692.3 316.8L696.2 319.1L697.0 324.5L699.0 328.4L699.0 324.0L707.0 316.0L709.3 308.7ZM674.9 315.0L670.3 315.6L669.4 311.5L665.2 309.9L662.7 313.2L659.2 309.9L654.9 310.5L654.2 315.4L650.7 320.3L653.7 324.7L652.5 331.3L659.3 332.3L663.0 330.2L667.7 331.4L673.5 330.6L676.2 326.1L677.4 324.2L675.7 318.9ZM625.7 627.8L623.0 627.3L621.3 624.8L617.6 626.6L612.3 626.2L609.7 631.6L605.1 631.1L608.0 634.9L611.5 637.8L615.2 640.8L620.6 641.4L623.7 638.6L627.7 639.4L629.7 635.8L629.5 631.7L628.2 628.9ZM787.1 562.0L789.2 565.4L793.1 566.2L795.5 565.6L797.5 565.2L798.2 562.0L800.1 558.0L798.8 553.4L794.9 551.2L795.6 547.1L790.8 543.6L787.6 543.3L784.7 544.0L784.4 547.7L781.4 548.5L779.8 552.6L781.4 553.7L784.9 557.6L783.0 560.6ZM670.6 615.9L673.4 618.3L675.7 621.0L679.7 620.0L682.8 618.1L682.5 613.8L685.6 612.6L685.8 609.7L684.5 608.1L678.2 609.9L675.5 606.8L670.4 606.1L665.7 606.2L664.7 608.0L665.3 611.7L667.6 614.4L667.9 617.5ZM775.5 737.6L778.4 735.3L779.5 733.0L780.2 729.5L778.1 725.9L776.3 722.9L772.8 721.3L771.8 724.5L767.1 728.3L766.4 730.9L761.7 732.3L761.5 734.0L762.2 735.8L764.4 736.8L765.5 739.7L768.6 738.0L773.2 740.3L776.2 741.2ZM816.2 470.2L814.7 467.2L815.1 461.8L819.1 459.4L817.6 458.0L817.4 456.1L812.0 455.7L808.7 450.0L801.3 450.3L797.5 449.4L795.7 452.0L792.5 453.5L791.4 455.7L789.9 459.1L789.8 462.2L794.7 465.6L798.4 467.9L805.8 470.3L811.6 473.1ZM777.0 783.1L778.8 779.6L783.4 778.0L780.7 777.4L779.4 772.3L776.6 772.2L773.0 774.9L770.0 775.1L766.8 776.0L766.6 780.7L763.7 783.3L766.2 783.6L770.1 785.9L771.7 785.5L773.1 786.0L775.9 786.0ZM623.1 460.7L623.6 458.9L612.9 452.1L606.0 450.3L595.4 444.6L584.9 441.8L539.1 443.7L479.9 444.4L415.8 442.0L413.5 465.0L415.3 465.0L441.0 464.8L452.5 467.6L481.7 468.9L509.7 466.4L559.6 470.4L584.7 468.9L620.9 468.7L623.7 465.9L624.4 462.8ZM786.8 423.1L791.1 425.1L791.9 432.4L795.9 433.0L800.2 437.8L803.7 433.4L809.3 435.9L814.1 433.0L816.1 430.3L815.3 423.4L813.4 420.6L815.9 411.7L815.6 407.6L813.6 406.1L810.6 405.9L804.2 409.5L799.5 411.7L792.9 414.9L787.2 420.2ZM717.4 397.3L722.6 404.4L729.8 403.1L736.8 408.9L741.9 404.6L743.8 398.6L745.0 391.9L746.1 385.6L743.0 381.1L735.4 379.4L733.6 377.2L727.9 373.4L724.3 372.7L721.6 377.2L717.3 377.6L715.9 383.0L716.8 388.3L714.1 391.6L712.3 395.5ZM514.5 682.9L511.5 684.3L516.5 684.7ZM507.1 682.3L504.7 683.7L508.6 684.0ZM816.7 715.9L817.6 717.3L821.4 719.1L822.2 721.8L827.0 721.7L829.6 722.3L832.5 720.1L834.3 719.5L834.5 719.5L832.9 712.4L832.9 712.4L832.9 712.4L832.7 711.5L823.9 704.8L822.1 705.5L819.2 708.0L817.2 710.6L816.2 714.3ZM695.4 764.5L692.2 767.3L687.9 769.1L683.6 770.0L683.1 773.1L682.8 776.8L684.3 780.8L686.7 782.9L689.6 780.7L694.1 780.5L697.3 782.4L696.4 777.4L698.3 776.5L699.9 773.1L702.5 770.2L700.4 767.5L698.7 765.3ZM813.3 537.0L815.8 533.7L815.7 526.0L818.6 524.7L815.6 523.5L813.9 519.3L813.7 516.2L809.1 514.2L805.3 514.7L802.5 516.5L798.6 515.8L797.8 516.4L798.3 519.2L796.2 523.6L795.2 527.7L798.3 531.5L801.0 532.6L802.6 536.6L807.4 535.4L809.3 537.3ZM667.7 794.0L666.0 796.9L666.2 800.3L668.7 804.2L667.5 806.3L668.2 808.0L668.7 808.4L670.7 809.8L673.8 806.1L677.7 803.2L679.9 801.1L680.4 801.2L682.5 796.7L683.0 796.7L682.7 796.5L681.8 793.4L679.2 791.9L674.4 791.7L670.8 791.9ZM748.5 322.7L754.9 325.1L758.7 320.6L765.0 322.0L770.2 317.3L774.9 318.5L774.6 312.9L776.9 309.3L778.6 304.4L783.6 299.2L782.4 297.5L778.0 295.0L770.0 305.7L759.0 313.6L749.0 319.0L746.8 319.4ZM635.6 513.5L632.1 514.9L632.5 517.7L636.0 520.1L635.2 524.1L635.2 528.4L635.4 528.5L638.7 526.3L642.0 527.9L645.8 526.0L644.7 523.0L645.5 520.2L645.9 515.4L645.8 512.4L645.0 511.5L641.9 511.5L638.6 510.4ZM840.5 433.3L840.0 427.2L846.2 420.5L845.3 414.2L839.7 411.0L838.0 407.2L833.2 403.8L827.1 403.4L824.1 405.3L821.4 408.2L818.8 406.1L815.6 407.6L815.9 411.7L813.4 420.6L815.3 423.4L816.1 430.3L818.2 433.0L821.7 435.2L823.6 436.9L826.7 439.8L830.9 436.2L833.9 438.5L838.1 437.3ZM624.6 668.1L628.4 667.9L631.6 670.6L633.3 668.7L635.7 665.7L638.4 662.8L642.5 661.3L641.8 658.8L638.0 656.3L637.4 652.8L632.0 652.3L628.7 653.7L624.7 654.8L622.0 656.8L622.1 661.4L622.3 664.2L624.1 667.3ZM777.9 439.3L776.9 436.1L776.6 431.9L771.3 432.2L765.8 429.0L762.0 424.8L757.0 426.6L758.1 430.3L754.1 437.3L753.1 441.3L753.4 445.7L757.6 447.6L759.5 449.4L761.1 453.8L766.4 452.2L767.3 446.7L774.6 446.6L776.7 442.2ZM729.8 656.2L729.4 657.9L729.1 662.4L731.5 664.8L735.0 665.0L738.1 664.8L740.0 666.5L744.0 665.4L744.3 659.9L748.5 659.2L748.9 656.7L748.2 654.5L745.2 652.8L741.7 649.9L738.2 651.9L732.9 651.0L730.8 654.8ZM784.9 715.4L780.3 714.5L777.4 715.1L775.3 718.7L772.9 720.7L772.8 721.3L776.3 722.9L778.1 725.9L780.2 729.5L783.8 727.7L787.5 727.2L791.4 729.6L792.7 727.3L793.8 725.6L792.9 723.3L791.0 719.0L789.9 716.1L788.7 713.8ZM648.3 697.2L645.9 699.5L647.4 703.5L643.5 705.4L643.4 708.4L645.2 711.2L647.2 713.1L651.2 711.2L654.1 713.6L656.2 710.8L658.2 709.2L661.0 708.6L662.5 705.4L661.6 702.4L657.5 701.5L658.0 695.9L653.5 695.1L652.0 695.2ZM699.1 360.5L698.3 362.9L698.6 367.6L700.5 370.2L705.2 372.5L708.0 376.4L714.0 374.5L717.3 377.6L721.6 377.2L724.3 372.7L727.9 373.4L724.9 366.4L726.0 362.7L730.6 354.9L728.6 350.5L726.6 350.0L725.7 348.5L720.3 348.2L714.4 348.9L707.6 349.2L703.4 351.8L701.9 354.9L699.7 356.9ZM687.8 658.0L691.6 658.0L693.9 655.9L695.7 653.9L693.4 652.0L695.7 647.8L692.8 645.2L689.2 644.5L685.4 642.7L682.4 645.6L680.0 648.2L683.5 651.0L683.1 654.2L684.1 657.2ZM566.2 779.5L561.4 777.8L559.9 782.6L555.5 781.8L554.9 784.4L558.2 787.7L558.2 791.7L562.5 793.5L564.0 793.4L565.9 793.0L566.9 788.7L571.4 788.3L571.7 784.2L572.3 780.9L572.0 778.4L569.7 776.1ZM671.8 398.8L672.3 402.5L673.0 407.4L669.7 410.9L674.9 414.1L678.9 414.2L682.3 413.4L687.5 411.7L689.2 408.3L694.3 408.3L695.1 403.2L697.5 400.9L697.4 395.9L691.0 393.8L689.8 391.2L687.3 386.1L683.7 388.5L680.2 390.5L672.4 391.7L670.1 394.5ZM733.5 684.0L736.9 681.7L740.3 679.9L743.2 682.1L744.3 681.3L745.8 680.3L745.9 679.3L745.7 675.4L742.1 673.5L743.7 669.4L740.0 666.5L738.1 664.8L735.0 665.0L731.5 664.8L729.3 668.0L727.6 671.7L725.0 673.2L724.5 675.1L724.8 677.0L727.7 680.1L730.7 682.3ZM651.5 387.4L650.5 392.6L647.3 396.5L642.4 399.1L643.8 403.6L643.7 407.0L646.0 410.6L646.1 413.2L650.4 414.9L654.8 416.5L660.9 416.2L665.5 415.1L667.2 412.7L669.7 410.9L673.0 407.4L672.3 402.5L671.8 398.8L670.1 394.5L666.5 390.3L663.5 390.8L659.8 385.3L655.4 385.9ZM677.6 437.2L679.5 440.6L681.4 446.5L679.7 450.2L682.7 450.1L686.6 450.4L688.7 448.1L692.4 448.0L696.5 446.8L694.1 440.0L695.8 438.1L699.4 434.7L696.9 430.7L693.4 429.3L690.2 428.8L685.8 429.5L684.1 431.7L680.2 433.9L675.8 432.4ZM733.2 350.6L738.6 347.7L747.0 348.9L751.0 345.7L752.7 341.5L749.8 335.8L756.8 332.3L754.9 325.1L748.5 322.7L746.8 319.4L736.0 321.5L730.0 329.0L720.2 332.9L720.1 333.9L727.7 343.0L725.7 348.5L726.6 350.0L728.6 350.5ZM711.9 637.8L709.7 641.8L705.8 643.4L704.0 647.1L703.8 651.4L706.4 654.9L708.1 656.2L710.1 658.3L712.7 657.9L714.9 655.7L716.5 651.5L718.1 647.8L720.6 644.6L720.3 641.0L719.2 638.6L717.7 637.3L715.8 637.1ZM777.9 690.6L779.5 691.6L782.5 689.6L785.3 688.5L784.7 684.7L789.3 684.3L790.1 683.1L790.1 681.2L787.4 678.6L787.1 675.7L784.5 674.4L781.1 672.5L778.3 673.7L777.3 676.4L772.8 678.5L772.7 681.7L773.6 684.6L774.9 687.1L776.0 690.0ZM649.9 471.6L646.9 474.1L644.4 476.0L640.4 476.4L640.2 477.0L640.9 480.1L644.7 483.3L645.2 486.6L648.2 489.1L652.6 487.5L655.3 487.6L658.4 486.1L660.1 484.1L660.5 482.2L661.7 478.8L657.0 476.0L657.8 472.4L655.6 470.5L652.9 470.0ZM738.9 756.3L740.7 754.7L738.9 751.2L741.0 747.2L738.6 743.3L735.9 741.7L734.1 740.7L730.6 740.1L728.0 742.0L726.2 744.7L726.2 749.1L726.4 752.7L728.9 753.6L732.1 756.5L735.8 754.4L738.0 758.5ZM551.1 784.1L554.9 784.4L555.5 781.8L554.9 778.8L550.7 776.2L550.0 784.8ZM738.3 787.2L736.9 788.8L737.4 793.0L758.7 788.8L759.6 788.6L759.8 787.7L759.7 785.9L757.0 783.9L752.0 783.6L750.5 779.8L748.6 782.1L745.5 785.0L741.0 783.7L739.1 784.9ZM726.9 698.6L723.4 699.2L723.0 702.3L723.4 704.9L724.1 708.6L728.0 709.8L729.8 713.0L734.6 712.1L736.2 709.2L738.4 706.6L741.7 706.2L740.9 703.3L741.4 699.6L740.8 698.9L737.6 700.1L734.1 699.0L731.3 696.7L728.9 696.1ZM623.8 557.6L623.7 554.7L629.1 552.0L627.2 547.0L625.3 545.0L622.4 543.7L619.4 546.6L614.9 546.9L608.6 548.8L607.5 553.2L611.7 553.2L615.1 556.2L618.1 562.6L622.6 562.9L624.0 562.1L626.0 561.7ZM586.9 778.9L583.4 780.7L582.4 784.3L583.8 788.2L585.5 790.8L590.4 783.6L598.0 782.0L599.0 783.2L601.8 781.9L599.0 780.1L597.9 779.1L596.1 776.3L593.1 775.5L590.3 777.2L587.9 775.1ZM645.2 739.3L649.7 739.4L649.5 745.2L653.8 747.5L655.5 745.1L659.7 745.2L662.1 742.8L659.0 740.6L659.7 735.6L657.5 731.9L658.7 727.7L653.5 725.9L649.8 729.7L647.4 728.3L643.3 731.1L643.9 734.4L643.0 737.1ZM750.7 554.1L751.0 551.9L753.8 549.9L752.1 545.7L747.9 544.2L745.1 544.6L740.8 543.0L738.1 538.3L735.0 539.9L732.2 542.7L730.9 545.6L730.6 547.7L731.1 550.4L733.7 554.0L736.5 555.1L738.0 559.6L743.2 560.3L746.0 558.7L749.4 557.5ZM689.8 391.2L691.0 393.8L697.4 395.9L697.5 400.9L699.4 401.2L704.6 402.1L706.6 399.9L708.2 394.7L712.3 395.5L714.1 391.6L716.8 388.3L715.9 383.0L717.3 377.6L714.0 374.5L708.0 376.4L705.2 372.5L700.5 370.2L697.9 373.2L695.3 379.1L690.9 377.8L687.6 381.7L686.8 383.7L687.3 386.1ZM619.9 686.3L617.7 684.1L615.0 683.9L612.6 685.2L610.9 689.0L613.0 692.3L609.8 695.2L610.2 699.8L612.2 701.1L616.1 701.7L617.8 704.5L622.1 705.6L625.1 703.9L627.4 703.0L628.7 700.5L624.6 698.1L628.6 693.0L622.9 689.8L622.5 686.3ZM792.5 711.0L795.8 709.2L799.2 709.7L798.9 705.8L801.4 701.9L801.0 698.9L799.6 697.2L797.1 696.6L794.8 699.4L791.8 700.1L787.8 701.4L787.0 704.7L787.5 707.3L790.2 710.8L788.8 713.7ZM697.5 669.8L700.8 668.3L704.3 669.7L705.2 667.1L708.7 665.8L709.7 662.8L709.5 660.3L710.1 658.3L708.1 656.2L706.4 654.9L703.1 656.9L700.0 653.2L695.7 653.9L693.9 655.9L691.6 658.0L693.8 661.5L693.1 665.2L694.1 668.6ZM594.5 511.2L605.7 514.7L619.1 514.6L620.7 513.3L622.2 512.8L620.6 509.0L622.7 504.4L624.4 501.4L620.0 500.8L618.8 497.4L615.8 495.6L604.4 497.3L594.9 500.3L583.8 507.9ZM817.2 710.6L819.2 708.0L822.1 705.5L823.9 704.8L815.0 698.0L812.9 695.6L811.9 699.1L809.2 700.7L811.4 704.3L811.7 707.9L814.2 709.4L814.5 713.7L816.2 714.3ZM625.4 672.1L623.6 678.5L621.4 680.2L617.7 684.1L619.9 686.3L622.5 686.3L625.1 684.4L630.5 683.4L633.7 683.0L633.2 679.1L635.2 676.4L633.7 673.2L631.6 670.6L628.4 667.9L624.6 668.1ZM629.5 783.1L624.8 781.3L620.5 781.5L619.6 785.1L627.0 788.8L633.6 790.9L633.6 790.5L638.5 790.8L640.7 789.6L640.9 789.1L640.8 786.8L640.0 784.9L636.2 784.7L633.8 783.1L631.4 779.0ZM833.6 513.9L833.4 517.8L834.4 520.0L835.7 523.5L838.8 525.6L844.2 528.5L848.1 527.3L851.6 526.5L853.1 524.0L853.0 520.3L856.1 518.0L854.3 515.1L854.3 511.8L852.6 508.9L851.2 505.9L847.1 505.0L844.4 504.2L841.3 504.8L840.5 508.3L836.7 510.3L833.8 511.3ZM599.0 727.4L596.4 726.5L593.8 728.1L589.7 730.2L589.9 736.2L584.5 736.5L584.7 739.0L586.0 740.0L586.8 741.9L589.6 744.2L592.8 744.1L595.4 742.9L597.8 740.8L602.1 741.0L599.2 737.1L601.8 732.9L604.7 730.3L601.9 726.9ZM871.6 443.1L868.6 439.1L868.1 439.1L867.0 441.5L863.3 442.3L861.2 443.7L857.1 449.3L856.2 453.0L858.7 460.2L856.2 463.4L862.4 461.6L869.2 462.3L873.5 465.9L876.1 465.7L876.4 461.5L872.9 443.2ZM776.3 660.0L774.9 663.4L772.7 665.1L774.8 667.8L778.3 670.5L778.3 673.7L781.1 672.5L784.5 674.4L787.1 675.7L789.4 673.8L789.7 672.2L783.0 666.7L778.5 657.8ZM767.7 637.7L770.1 634.2L771.5 631.9L769.8 628.3L767.2 626.1L763.4 625.7L761.1 627.6L757.7 629.3L754.9 629.7L753.7 632.2L753.0 635.6L753.4 636.1L757.4 635.7L761.8 638.1L763.4 642.1L767.9 640.9ZM693.0 720.4L694.2 716.0L694.6 712.8L693.2 710.2L688.7 711.0L685.6 709.6L682.6 708.3L677.5 707.7L676.0 712.0L673.1 713.9L674.0 716.9L673.4 720.3L677.4 724.2L682.7 720.5L686.7 724.0L689.8 723.6L690.9 723.1ZM730.3 794.3L725.6 792.9L727.3 799.1L732.4 794.0L737.4 793.0L736.9 788.8L734.6 790.4L731.3 789.7ZM722.7 801.1L723.1 802.4L724.5 802.0L727.2 799.2ZM510.2 471.1L544.9 478.1L579.7 476.7L621.7 482.6L623.5 481.6L623.4 478.6L619.6 476.6L619.5 471.7L620.9 468.7L584.7 468.9L559.6 470.4L509.7 466.4L481.7 468.9ZM745.7 574.4L747.7 578.9L753.2 576.1L756.5 579.3L758.5 577.2L759.8 572.7L757.3 569.2L756.5 566.3L759.7 563.0L755.6 562.3L753.5 557.2L749.4 557.5L746.0 558.7L743.2 560.3L742.0 563.5L742.5 567.6L739.7 570.8L740.3 573.0L741.7 575.1ZM690.2 526.1L690.5 528.9L692.8 530.9L696.3 531.6L699.2 526.8L702.3 527.7L703.7 524.7L707.2 523.6L707.9 519.8L706.0 518.2L705.5 515.6L700.1 515.4L697.9 511.9L694.8 510.3L689.9 509.4L687.7 510.7L686.9 512.6L687.4 516.6L686.2 518.0L686.5 521.4L686.5 525.2ZM672.7 722.0L671.3 723.2L673.2 726.1L672.4 730.9L673.9 734.6L677.3 738.9L680.1 739.8L682.3 739.1L682.5 735.9L684.9 732.1L687.0 726.7L689.8 723.6L686.7 724.0L682.7 720.5L677.4 724.2L673.4 720.3ZM871.6 443.1L872.9 443.2L872.4 440.5L870.2 438.0L868.6 439.1ZM741.8 639.7L740.3 643.0L741.1 646.2L741.7 649.9L745.2 652.8L748.2 654.5L749.7 651.1L754.2 649.4L756.4 645.7L751.9 642.4L750.8 640.0L753.4 636.1L753.0 635.6L749.3 638.1L747.2 634.3L744.6 638.5L740.2 637.2ZM646.8 579.5L649.4 578.7L654.2 578.6L655.7 576.9L655.0 573.1L651.7 569.7L649.7 567.0L646.8 566.7L644.3 566.4L642.8 570.0L639.9 570.4L639.8 573.8L636.1 575.5L639.6 575.6L639.2 580.1L641.4 582.0L645.0 583.8ZM777.0 564.2L779.1 560.9L783.0 560.6L784.9 557.6L781.4 553.7L779.8 552.6L781.4 548.5L778.4 546.5L776.2 546.0L771.9 548.3L768.9 547.7L768.2 551.2L767.4 554.6L768.1 558.0L765.9 559.8L769.9 561.4L772.4 561.8L774.5 565.3ZM780.3 514.6L779.0 517.6L775.3 519.3L773.8 522.1L773.7 524.8L774.3 526.9L776.8 531.5L781.0 532.6L784.5 534.8L788.6 538.5L791.5 534.6L796.5 535.4L798.3 531.5L795.2 527.7L796.2 523.6L798.3 519.2L797.8 516.4L793.2 517.8L789.3 517.9L787.9 512.1L783.5 513.5ZM799.1 485.5L802.6 484.4L806.2 483.7L809.5 482.2L810.6 480.7L812.4 479.1L810.9 476.0L811.6 473.1L805.8 470.3L798.4 467.9L794.7 465.6L789.8 462.2L788.6 463.2L787.4 464.7L792.0 469.6L790.3 476.4L790.6 480.7L793.7 484.9ZM574.6 693.9L575.5 689.0L571.7 684.9L573.3 676.7L569.5 674.1L568.5 678.9L564.0 679.1L562.4 681.8L559.6 683.0L559.5 687.1L559.2 689.7L564.0 691.0L571.2 695.7L573.4 695.0ZM815.9 731.8L819.0 728.0L828.0 724.6L828.2 724.4L829.6 722.3L827.0 721.7L822.2 721.8L821.4 719.1L817.6 717.3L816.1 721.0L812.9 722.3L816.1 727.5L813.7 731.0ZM694.1 780.5L689.6 780.7L686.7 782.9L684.8 785.4L682.4 788.5L681.8 793.4L682.7 796.5L683.0 796.7L695.4 797.5L697.7 796.8L700.4 795.5L703.0 793.2L703.4 789.9L702.9 787.0L700.4 783.7L697.3 782.4ZM792.7 727.3L791.4 729.6L794.4 732.2L795.5 735.8L792.9 738.7L794.0 741.6L795.8 742.1L797.6 743.0L799.7 739.6L802.3 737.7L807.3 736.2L810.7 734.3L811.2 732.7L807.1 730.9L805.1 729.8L803.1 727.1L800.3 724.5L796.8 725.9L793.8 725.6ZM648.1 306.8L645.5 307.8L642.4 306.5L642.2 311.4L636.5 310.7L637.0 314.9L635.1 317.8L636.7 324.5L640.4 327.9L639.9 333.7L644.4 336.0L646.8 336.5L650.6 335.3L652.5 331.3L653.7 324.7L650.7 320.3L654.2 315.4L654.9 310.5L652.6 308.1L651.3 306.0ZM578.3 647.7L579.7 653.3L572.3 661.2L571.3 669.5L569.5 674.1L573.3 676.7L571.7 684.9L575.5 689.0L574.6 693.9L576.2 692.9L578.1 693.5L580.6 691.6L584.1 689.7L585.5 687.0L581.3 680.6L585.7 668.7L581.4 657.9L579.4 648.7ZM653.4 717.8L654.9 721.0L660.1 722.4L659.5 726.4L662.3 725.0L666.6 726.1L667.3 722.8L671.3 723.2L672.7 722.0L673.4 720.3L674.0 716.9L673.1 713.9L670.5 709.9L667.1 708.9L663.6 709.3L661.0 708.6L658.2 709.2L656.2 710.8L654.1 713.6ZM792.9 683.1L797.1 681.6L798.6 681.9L800.0 681.1L799.0 680.0L789.7 672.2L789.4 673.8L787.1 675.7L787.4 678.6L790.1 681.2ZM718.8 720.8L723.8 722.5L727.0 723.8L727.6 728.1L729.0 728.5L732.3 726.8L735.9 724.9L734.7 722.4L736.5 717.9L736.6 714.4L734.6 712.1L729.8 713.0L728.0 709.8L724.1 708.6L720.8 711.2L720.6 714.7L718.2 716.5ZM700.4 767.5L702.5 770.2L705.1 771.7L708.1 772.4L711.6 770.6L712.0 766.5L715.6 765.3L717.8 761.9L717.2 760.4L717.7 758.8L716.0 755.6L712.4 752.4L709.4 750.8L706.4 751.8L704.0 754.6L700.6 754.2L698.1 757.1L698.4 759.7L697.6 762.3L698.7 765.3ZM753.1 510.0L752.0 503.6L747.4 503.6L746.5 500.5L742.6 502.0L738.7 501.0L738.4 505.1L735.1 507.1L732.7 509.2L732.3 514.4L734.3 519.0L739.6 519.4L740.4 524.3L742.9 522.7L746.0 522.0L749.4 522.8L751.0 520.8L753.2 517.7L753.0 513.7L755.6 511.0ZM608.5 747.8L607.6 744.0L605.6 741.5L602.1 741.0L597.8 740.8L595.4 742.9L592.8 744.1L591.1 748.1L593.7 751.7L596.8 754.3L597.0 757.9L599.0 758.6L601.5 756.0L604.7 752.9L607.9 751.8ZM812.1 541.7L812.3 539.5L809.3 537.3L807.4 535.4L802.6 536.6L801.0 532.6L798.3 531.5L796.5 535.4L791.5 534.6L788.6 538.5L787.1 541.1L787.6 543.3L790.8 543.6L795.6 547.1L794.9 551.2L798.8 553.4L801.6 549.6L805.1 550.2L811.9 549.2L813.0 544.9ZM665.1 769.2L665.3 772.2L671.6 774.4L669.5 778.3L672.1 779.6L676.5 778.4L679.2 777.9L682.8 776.8L683.1 773.1L683.6 770.0L680.6 768.0L679.2 763.2L677.3 760.2L674.8 761.1L671.9 760.4L669.1 761.7L666.2 764.5ZM834.3 719.5L832.5 720.1L829.6 722.3L828.2 724.4L828.0 724.6L835.0 722.0L834.5 719.5ZM605.7 717.9L604.2 719.9L604.7 722.9L602.5 726.5L606.9 726.2L610.8 728.4L613.9 729.7L617.9 728.6L619.2 727.1L622.4 724.4L621.0 719.2L618.0 719.6L613.9 715.4L612.3 713.0L609.2 713.9L605.9 714.4ZM872.2 480.5L875.1 480.6L876.1 465.7L873.5 465.9L869.2 462.3L862.4 461.6L856.2 463.4L855.2 464.4L855.7 466.6L853.1 469.3L854.6 472.9L859.9 473.1L861.5 480.3L864.9 479.8L868.6 482.9ZM626.2 452.6L626.0 455.7L623.6 458.9L623.1 460.7L624.4 462.8L627.0 461.9L631.3 463.4L634.4 464.6L636.8 466.0L641.0 464.9L642.9 462.7L643.9 459.1L645.2 455.8L642.8 453.4L641.4 449.6L639.6 447.2L635.9 448.9L631.8 448.5L628.4 450.1ZM712.9 738.2L713.0 742.0L716.5 740.9L720.1 741.7L722.2 744.3L726.2 744.7L728.0 742.0L730.6 740.1L729.1 736.3L727.6 732.2L729.0 728.5L727.6 728.1L724.2 730.4L721.2 733.4L717.1 733.3L714.4 734.8ZM736.1 767.8L738.2 763.8L738.5 761.5L738.0 758.5L735.8 754.4L732.1 756.5L728.9 753.6L726.4 752.7L722.2 753.8L720.1 756.2L717.7 758.8L717.2 760.4L717.8 761.9L721.6 763.5L724.3 765.8L728.0 767.7L731.6 769.4L732.8 769.2ZM657.8 763.1L656.5 762.4L652.7 761.8L650.9 764.6L647.1 766.2L643.1 766.3L642.3 767.9L645.4 770.6L644.2 774.1L645.8 776.3L648.8 775.0L651.3 778.5L654.5 776.8L654.1 773.8L656.8 770.0L660.1 768.8L659.0 764.3ZM703.4 797.5L700.4 795.5L697.7 796.8L695.4 797.5L703.5 798.0L703.7 798.2ZM668.7 780.7L666.9 782.2L667.4 785.8L668.2 789.5L670.8 791.9L674.4 791.7L679.2 791.9L681.8 793.4L682.4 788.5L684.8 785.4L686.7 782.9L684.3 780.8L682.8 776.8L679.2 777.9L676.5 778.4L672.1 779.6L669.5 778.3ZM664.4 743.4L667.0 739.4L670.0 739.6L673.3 739.9L677.3 738.9L673.9 734.6L672.4 730.9L673.2 726.1L671.3 723.2L667.3 722.8L666.6 726.1L662.3 725.0L659.5 726.4L658.7 727.7L657.5 731.9L659.7 735.6L659.0 740.6L662.1 742.8ZM626.4 608.4L626.1 606.6L624.9 604.2L624.6 601.3L621.7 599.5L608.9 596.7L599.7 594.7L588.7 593.2L579.0 595.3L565.7 594.8L557.3 595.4L547.3 599.4L536.9 599.4L540.5 600.5L540.6 604.7L543.4 604.8L562.6 607.3L584.9 605.8L602.2 613.3L623.0 612.4L624.5 611.5L625.5 610.1ZM671.3 811.6L674.6 813.8L680.4 801.2L679.9 801.1L677.7 803.2L673.8 806.1L670.7 809.8ZM731.6 769.4L729.1 771.6L726.9 774.4L722.3 775.4L720.5 780.4L721.1 784.9L726.2 785.3L727.4 789.6L731.3 789.7L734.6 790.4L736.9 788.8L738.3 787.2L739.1 784.9L740.0 778.7L733.3 777.8L732.3 773.5L732.8 769.2ZM577.4 711.5L580.0 708.0L583.2 708.4L587.3 710.5L587.1 707.2L589.3 705.4L588.7 702.3L587.5 699.6L584.5 697.3L579.0 697.2L578.1 693.5L576.2 692.9L574.6 693.9L573.4 695.0L572.7 696.7L577.0 699.4L573.6 706.7L573.8 709.7ZM658.1 454.5L660.9 456.4L662.9 456.9L665.4 461.0L667.7 457.4L668.8 454.4L671.8 452.0L669.5 450.5L667.3 446.8L663.0 445.1L661.2 443.0L660.5 446.6L656.0 447.6L658.2 452.8L654.1 455.4ZM652.5 303.2L652.5 300.4L653.1 295.8L655.5 293.1L651.9 290.6L652.4 286.9L650.6 283.5L644.6 283.4L640.4 284.8L638.3 290.6L632.4 289.4L631.2 292.9L628.8 296.3L633.9 298.4L633.5 302.9L640.9 302.6L642.4 306.5L645.5 307.8L648.1 306.8L651.3 306.0ZM668.7 804.2L666.2 800.3L666.0 796.9L663.6 795.5L659.6 795.7L657.4 795.5L656.5 796.6L664.0 798.0L667.5 806.3ZM690.6 669.7L689.3 672.3L688.8 675.1L688.3 678.9L690.1 681.0L692.2 683.2L694.5 685.4L698.2 685.8L700.2 681.8L702.2 678.6L705.7 676.4L705.5 672.7L704.3 669.7L700.8 668.3L697.5 669.8L694.1 668.6ZM627.3 726.1L631.6 729.4L635.4 731.4L639.9 729.6L642.7 730.4L644.2 725.4L646.6 722.7L642.1 716.8L644.4 712.2L642.4 715.7L637.5 713.1L632.2 715.2L629.2 717.9L628.8 722.4L626.1 724.7ZM636.4 598.2L634.9 595.6L637.0 592.8L634.5 591.4L631.8 590.8L628.5 589.6L625.7 587.5L622.0 590.4L623.5 593.6L622.5 596.6L621.7 599.5L624.6 601.3L624.9 604.2L626.1 606.6L629.1 605.6L632.8 605.1L635.5 601.4ZM831.3 508.7L826.2 510.5L824.3 506.3L821.2 506.3L820.0 509.8L817.2 511.6L814.9 512.1L813.7 516.2L813.9 519.3L815.6 523.5L818.6 524.7L820.6 526.6L824.9 526.0L827.3 526.6L830.7 524.8L832.8 523.7L834.4 520.0L833.4 517.8L833.6 513.9L833.8 511.3ZM640.5 603.8L638.6 601.9L635.5 601.4L632.8 605.1L629.1 605.6L626.1 606.6L626.4 608.4L625.5 610.1L628.4 615.5L631.4 616.2L635.6 618.6L639.8 618.6L638.9 615.7L639.2 611.1L643.4 609.6L642.8 606.4ZM620.9 428.7L620.2 434.5L616.7 435.2L617.8 439.1L622.9 442.0L625.1 445.1L628.4 450.1L631.8 448.5L635.9 448.9L639.6 447.2L640.9 444.8L640.8 442.8L639.6 437.9L631.0 437.2L628.7 432.1L625.0 428.1ZM641.4 449.6L642.8 453.4L645.2 455.8L647.6 456.8L649.7 457.1L651.8 455.8L654.1 455.4L658.2 452.8L656.0 447.6L660.5 446.6L661.2 443.0L661.7 440.7L660.5 439.1L656.4 440.3L654.5 437.5L651.6 438.0L648.8 435.4L647.0 438.8L645.1 441.4L640.8 442.8L640.9 444.8L639.6 447.2ZM789.6 761.0L790.2 761.2L800.8 749.6L800.3 749.2L798.8 745.9L797.6 743.0L795.8 742.1L794.0 741.6L791.6 744.1L787.8 746.8L784.2 747.2L782.5 750.6L786.8 754.4L785.8 758.0L788.2 760.2ZM672.1 523.4L675.5 519.5L675.7 516.5L672.5 513.5L671.6 511.8L669.4 511.0L666.9 510.8L663.9 511.7L662.2 513.7L660.6 514.9L659.4 518.3L659.5 521.9L661.8 526.1L667.2 526.5L667.5 530.5L669.9 530.3L671.9 530.5L673.8 528.8L675.2 526.1ZM779.6 579.1L782.9 578.3L786.5 576.7L789.6 574.1L792.0 572.9L793.2 569.0L793.1 566.2L789.2 565.4L787.1 562.0L783.0 560.6L779.1 560.9L777.0 564.2L774.5 565.3L772.3 568.6L772.6 572.9L774.7 576.3L776.0 577.6ZM499.2 316.1L524.2 317.1L576.8 316.0L622.6 318.3L623.5 317.5L626.5 312.3L622.7 308.4L624.6 303.8L623.1 298.2L608.5 296.0L600.3 290.8L584.7 287.6L570.2 284.9L560.0 290.0L500.0 300.0L473.1 313.5ZM640.7 789.6L638.5 790.8L633.6 790.5L633.6 790.9L641.1 793.4ZM620.7 513.3L619.1 514.6L621.5 518.2L622.0 522.0L621.1 527.0L622.2 531.4L626.3 531.2L628.3 531.7L632.3 529.8L635.2 528.4L635.2 524.1L636.0 520.1L632.5 517.7L632.1 514.9L628.4 516.2L624.6 514.3L622.2 512.8ZM719.2 638.6L720.3 641.0L724.0 640.6L726.7 643.1L728.5 640.5L734.4 642.4L735.3 636.3L739.2 636.6L736.6 633.3L734.6 630.4L735.5 627.2L731.5 625.0L729.9 628.1L726.3 628.1L722.8 629.0L722.4 632.5L718.3 634.3L717.7 637.3ZM655.6 267.6L656.7 271.0L659.3 270.5L657.3 265.7ZM652.2 524.4L655.0 522.6L659.5 521.9L659.4 518.3L660.6 514.9L656.3 514.7L651.7 515.8L648.8 515.2L645.8 512.4L645.9 515.4L645.5 520.2L644.7 523.0L645.8 526.0L647.4 527.5L649.9 528.2ZM667.1 428.2L667.7 423.4L669.4 418.4L665.5 415.1L660.9 416.2L654.8 416.5L650.4 414.9L646.1 413.2L645.4 414.4L644.5 415.8L642.5 420.7L646.6 426.0L647.4 431.2L648.8 435.4L651.6 438.0L654.5 437.5L656.4 440.3L660.5 439.1L662.6 437.0L666.3 436.0L668.7 434.3L669.9 430.4ZM679.7 450.2L681.4 446.5L679.5 440.6L677.6 437.2L675.8 432.4L673.6 430.6L669.9 430.4L668.7 434.3L666.3 436.0L662.6 437.0L660.5 439.1L661.7 440.7L661.2 443.0L663.0 445.1L667.3 446.8L669.5 450.5L671.8 452.0L675.4 450.2L678.7 451.3ZM565.9 793.0L564.0 793.4L562.5 793.5L560.8 795.4L560.0 796.3L568.4 793.2ZM690.8 310.9L688.3 307.8L686.5 304.2L686.5 302.3L680.5 300.0L678.3 299.2L677.8 299.3L674.9 298.0L675.0 300.8L673.0 305.8L672.8 309.2L669.4 311.5L670.3 315.6L674.9 315.0L675.7 318.9L680.2 318.3L680.9 314.3L687.1 316.0L689.9 313.4ZM677.4 464.2L676.3 466.4L673.2 468.9L673.0 471.6L674.6 474.2L677.4 474.5L681.2 474.0L683.3 477.8L687.4 477.2L688.0 473.7L691.1 471.0L691.9 467.3L689.7 466.5L686.8 465.1L683.9 464.8L680.8 462.2ZM624.5 729.4L626.0 733.0L628.5 738.8L626.3 741.5L628.2 743.4L630.7 745.0L634.4 744.6L637.5 741.3L640.1 740.9L643.0 737.1L643.9 734.4L643.3 731.1L642.7 730.4L639.9 729.6L635.4 731.4L631.6 729.4L627.3 726.1ZM697.6 762.3L698.4 759.7L698.1 757.1L696.9 755.4L695.1 754.9L690.8 756.6L687.3 753.0L683.4 756.5L680.7 756.3L678.3 757.3L677.3 760.2L679.2 763.2L680.6 768.0L683.6 770.0L687.9 769.1L692.2 767.3L695.4 764.5L698.7 765.3ZM706.2 720.4L702.9 720.4L698.4 718.9L694.2 716.0L693.0 720.4L690.9 723.1L693.3 726.1L695.0 726.6L699.0 727.6L699.4 731.7L702.2 731.7L705.4 729.9L708.7 727.7L709.9 724.5L709.0 722.6L710.1 719.5ZM655.8 551.9L657.6 548.2L659.9 546.9L662.7 546.1L662.0 543.0L662.2 539.8L660.1 537.8L657.5 535.2L654.7 534.5L652.0 535.2L649.7 537.4L647.7 540.7L651.0 544.0L650.9 546.8L650.7 551.3L651.6 551.7ZM758.5 663.0L754.5 660.6L752.3 659.2L748.5 659.2L744.3 659.9L744.0 665.4L740.0 666.5L743.7 669.4L742.1 673.5L745.7 675.4L745.9 679.3L748.4 675.8L753.7 675.2L758.5 670.9L759.1 666.7ZM744.7 736.7L742.9 732.6L742.8 729.8L745.0 726.2L742.8 725.0L738.2 727.0L735.9 724.9L732.3 726.8L729.0 728.5L727.6 732.2L729.1 736.3L730.6 740.1L734.1 740.7L735.9 741.7L738.6 743.3L741.0 741.1L744.6 739.3ZM527.3 675.2L519.9 677.1L520.9 683.1L517.4 684.7L527.0 685.5L530.3 685.8L529.8 681.0L527.6 676.2L528.7 670.1ZM582.3 772.8L577.9 773.5L574.1 771.6L572.2 772.9L570.6 773.8L569.7 776.1L572.0 778.4L572.3 780.9L571.7 784.2L574.3 786.0L579.4 785.0L582.3 789.0L583.8 788.2L582.4 784.3L583.4 780.7L586.9 778.9L587.9 775.1L586.5 773.8L585.3 772.4ZM658.9 379.1L665.6 373.8L668.9 374.3L673.5 368.9L671.7 366.1L673.7 361.4L670.7 359.9L672.8 355.5L669.6 353.0L663.4 355.5L657.8 350.9L653.1 352.1L649.8 355.2L648.7 359.1L647.9 363.9L644.2 366.4L648.3 370.1L647.7 375.5L651.7 379.9L655.5 380.9ZM763.8 692.3L762.0 687.1L758.2 686.9L757.0 687.1L756.4 691.7L752.8 693.9L753.0 697.1L756.6 699.3L758.8 702.9L760.0 706.2L763.7 704.9L766.2 702.4L767.7 699.4L768.3 696.7L767.0 693.9ZM631.4 648.9L632.8 645.3L637.7 644.7L636.6 640.8L634.4 640.0L632.4 636.4L629.7 635.8L627.7 639.4L623.7 638.6L620.6 641.4L618.8 644.3L620.6 649.3L620.8 652.1L622.3 653.4L624.7 654.8L628.7 653.7L632.0 652.3ZM647.6 456.8L645.2 455.8L643.9 459.1L642.9 462.7L641.0 464.9L636.8 466.0L637.7 469.7L637.6 472.6L640.4 476.4L644.4 476.0L646.9 474.1L649.9 471.6L652.9 470.0L649.3 467.4L652.9 462.8L651.1 459.1L649.7 457.1ZM771.9 548.3L776.2 546.0L778.4 546.5L781.4 548.5L784.4 547.7L784.7 544.0L787.6 543.3L787.1 541.1L788.6 538.5L784.5 534.8L781.0 532.6L776.8 531.5L774.3 526.9L770.9 529.2L769.1 535.3L768.4 540.6L765.8 543.8L767.4 546.1L768.9 547.7ZM582.3 789.0L582.1 791.7L585.0 791.5L585.5 790.8L583.8 788.2ZM622.5 596.6L623.5 593.6L622.0 590.4L625.7 587.5L624.2 585.8L623.8 583.3L623.8 583.3L614.0 587.0L600.0 589.7L586.9 590.1L579.0 595.3L588.7 593.2L599.7 594.7L608.9 596.7L621.7 599.5ZM635.6 618.6L631.4 616.2L628.4 615.5L625.5 610.1L624.5 611.5L623.0 612.4L621.9 616.3L620.8 618.2L621.5 622.2L621.3 624.8L623.0 627.3L625.7 627.8L628.2 628.9L630.1 624.2L633.9 624.9L637.2 620.6L640.5 620.2L639.8 618.6ZM695.7 451.8L696.2 455.1L698.9 459.4L699.3 463.4L700.6 463.8L704.9 461.1L707.8 463.3L711.6 460.1L714.4 456.9L712.0 453.9L712.0 448.1L717.3 443.8L714.3 440.1L711.0 437.8L708.5 437.7L707.0 433.5L703.7 433.8L699.4 434.7L695.8 438.1L694.1 440.0L696.5 446.8L692.4 448.0ZM668.9 638.9L670.8 636.9L671.1 633.3L670.4 629.6L667.5 627.4L665.1 623.7L661.6 623.5L658.5 624.6L656.0 625.8L657.8 629.3L657.6 632.6L656.1 637.2L659.0 638.7L661.3 641.5L663.9 641.1L666.5 640.6ZM801.0 698.9L802.9 700.9L806.3 701.5L809.2 700.7L811.9 699.1L812.9 695.6L804.7 686.4L803.6 687.4L803.5 689.9L801.7 694.6L799.6 697.2ZM763.0 562.0L765.9 559.8L768.1 558.0L767.4 554.6L768.2 551.2L768.9 547.7L767.4 546.1L765.8 543.8L762.0 542.2L758.3 542.3L755.7 544.8L752.1 545.7L753.8 549.9L751.0 551.9L750.7 554.1L749.4 557.5L753.5 557.2L755.6 562.3L759.7 563.0ZM746.8 724.5L749.7 723.9L750.7 721.7L751.3 717.9L752.2 715.2L747.8 714.0L747.1 710.6L744.4 707.9L741.7 706.2L738.4 706.6L736.2 709.2L734.6 712.1L736.6 714.4L736.5 717.9L734.7 722.4L735.9 724.9L738.2 727.0L742.8 725.0L745.0 726.2ZM611.0 752.8L614.0 753.8L615.9 756.8L618.3 755.6L620.7 755.0L621.2 750.9L623.9 748.2L622.3 743.5L619.2 743.8L616.2 742.1L614.1 740.7L610.9 742.8L607.6 744.0L608.5 747.8L607.9 751.8ZM712.9 425.8L711.0 427.6L708.9 431.9L707.0 433.5L708.5 437.7L711.0 437.8L714.3 440.1L719.5 438.7L721.9 440.3L725.7 437.1L731.4 438.8L731.5 432.6L733.5 426.5L734.8 420.2L739.5 414.1L738.8 411.9L736.9 410.4L730.0 412.9L726.9 417.9L718.1 415.7L711.5 421.9ZM678.3 757.3L680.7 756.3L679.3 751.9L681.7 747.0L680.6 742.7L680.1 739.8L677.3 738.9L673.3 739.9L670.0 739.6L667.0 739.4L664.4 743.4L666.7 747.7L670.3 749.8L670.8 756.0L671.9 760.4L674.8 761.1L677.3 760.2ZM783.5 334.4L779.6 328.8L779.0 324.8L774.9 318.5L770.2 317.3L765.0 322.0L758.7 320.6L754.9 325.1L756.8 332.3L749.8 335.8L752.7 341.5L751.0 345.7L755.0 348.5L755.1 354.2L761.1 354.0L762.2 357.9L765.2 358.9L771.5 357.2L774.6 356.4L779.4 357.4L779.6 350.9L782.2 347.1L783.6 340.2L787.9 337.7ZM753.0 768.2L755.1 766.1L752.9 762.8L753.9 761.0L756.6 757.5L754.7 753.9L752.9 753.1L751.7 752.1L748.9 752.9L744.2 754.6L740.7 754.7L738.9 756.3L738.0 758.5L738.5 761.5L738.2 763.8L741.8 764.6L744.1 768.3L746.5 767.9L750.1 769.7ZM617.8 782.4L615.8 780.2L613.5 778.9L610.9 778.9L608.1 779.8L603.8 781.0L601.8 781.9L599.0 783.2L603.6 788.8L616.7 783.6L619.3 784.9ZM584.5 736.5L581.1 735.0L579.3 730.9L577.7 727.4L575.4 730.0L572.0 729.2L568.7 729.0L565.7 731.5L563.9 734.4L564.1 738.9L564.8 742.8L568.5 745.3L571.1 741.0L574.3 740.0L580.9 740.4L584.7 739.0ZM674.9 663.5L670.5 664.3L667.8 662.0L665.9 665.1L662.9 667.8L662.9 671.3L662.9 674.8L666.1 675.3L668.4 676.5L671.8 676.5L674.1 680.5L676.9 678.7L676.8 673.9L679.8 672.6L680.4 669.7L680.3 667.1L678.0 665.1ZM764.1 617.9L763.1 622.8L763.4 625.7L767.2 626.1L769.8 628.3L771.5 631.9L775.0 631.9L772.5 624.6L765.3 615.5ZM633.6 496.5L630.5 497.8L628.2 500.3L624.4 501.4L622.7 504.4L620.6 509.0L622.2 512.8L624.6 514.3L628.4 516.2L632.1 514.9L635.6 513.5L638.6 510.4L637.5 506.8L633.7 503.8L634.1 500.6L634.2 496.6ZM689.2 644.5L692.8 645.2L694.0 642.7L697.7 642.9L699.5 640.1L697.8 636.5L698.5 634.4L698.4 630.5L697.4 629.2L695.6 628.3L693.2 629.2L689.4 631.5L687.6 633.7L683.9 632.5L685.0 635.2L683.2 638.8L685.4 642.7ZM771.8 706.1L768.3 703.7L766.2 702.4L763.7 704.9L760.0 706.2L759.5 708.8L758.4 711.2L761.7 714.7L767.7 714.9L767.0 719.4L772.9 720.7L775.3 718.7L777.4 715.1L777.5 712.2L774.4 709.5L774.6 705.2ZM674.9 297.9L667.0 295.0L663.9 291.9L662.4 292.6L659.1 290.9L655.5 293.1L653.1 295.8L652.5 300.4L652.5 303.2L651.3 306.0L652.6 308.1L654.9 310.5L659.2 309.9L662.7 313.2L665.2 309.9L669.4 311.5L672.8 309.2L673.0 305.8L675.0 300.8L674.9 298.0ZM710.8 291.9L709.0 300.0L705.0 301.8L705.0 302.6L704.4 305.8L709.3 308.7L711.0 303.0L720.0 298.0L717.0 292.5L711.9 291.2ZM868.6 439.1L870.2 438.0L867.3 434.8L868.1 439.1ZM639.4 590.2L643.9 589.4L643.4 586.7L645.0 583.8L641.4 582.0L639.2 580.1L639.6 575.6L636.1 575.5L634.2 575.4L631.1 575.6L629.3 578.7L627.4 582.7L623.8 583.3L624.2 585.8L625.7 587.5L628.5 589.6L631.8 590.8L634.5 591.4L637.0 592.8ZM653.8 747.5L649.5 745.2L649.7 739.4L645.2 739.3L643.0 737.1L640.1 740.9L637.5 741.3L634.4 744.6L633.3 748.2L637.3 749.7L636.7 753.8L639.0 754.8L642.5 751.7L644.6 751.0L649.0 749.6L652.8 750.3ZM791.4 789.8L788.5 793.6L790.0 796.7L799.1 800.5L799.6 795.9L799.1 792.2L801.5 791.1L801.9 789.3L801.7 789.0L800.5 787.3L797.5 787.7L795.1 785.7L791.6 784.6ZM614.4 768.9L612.6 767.4L610.1 764.3L604.9 765.1L601.9 764.3L599.2 766.5L600.5 772.2L598.8 773.8L596.1 776.3L597.9 779.1L599.0 780.1L601.8 781.9L603.8 781.0L608.1 779.8L610.9 778.9L613.5 778.9L614.8 775.7L614.9 771.8ZM632.2 715.2L637.5 713.1L642.4 715.7L644.4 712.2L645.2 711.2L643.4 708.4L643.5 705.4L641.2 703.0L637.9 700.0L634.3 699.7L631.7 700.4L628.7 700.5L627.4 703.0L625.1 703.9L623.9 708.5L625.1 711.6L627.4 714.1L629.2 717.9ZM682.2 631.9L683.9 632.5L687.6 633.7L689.4 631.5L693.2 629.2L695.6 628.3L696.9 625.4L695.7 622.4L691.5 620.6L688.0 618.9L688.8 613.4L685.6 612.6L682.5 613.8L682.8 618.1L679.7 620.0L679.1 624.0L678.4 627.9L680.9 630.7ZM727.7 680.1L724.8 677.0L722.4 680.3L720.0 681.9L716.3 682.3L713.8 684.9L715.4 687.9L716.7 691.2L713.9 694.8L717.3 697.6L719.7 699.4L723.4 699.2L726.9 698.6L728.9 696.1L729.8 693.5L730.6 690.2L728.8 686.3L730.7 682.3ZM496.2 320.4L528.7 322.0L591.5 332.2L623.0 336.4L621.6 332.5L621.7 327.7L621.4 323.4L622.6 318.3L576.8 316.0L524.2 317.1L499.2 316.1L473.1 313.5L469.6 315.2ZM763.6 670.8L762.3 673.2L761.4 678.2L763.6 680.7L766.7 679.9L769.1 682.0L772.7 681.7L772.8 678.5L777.3 676.4L778.3 673.7L778.3 670.5L774.8 667.8L772.7 665.1L770.1 663.8L767.4 663.8L764.4 665.3L762.0 666.8ZM717.3 443.8L712.0 448.1L712.0 453.9L714.4 456.9L716.4 459.0L720.5 459.0L721.7 461.8L725.9 462.5L727.5 458.8L730.8 461.6L734.2 458.5L732.8 454.9L737.7 452.4L737.6 450.7L738.5 447.1L736.3 444.9L732.1 442.0L731.4 438.8L725.7 437.1L721.9 440.3L719.5 438.7L714.3 440.1ZM808.7 567.4L812.0 564.3L815.4 563.8L812.3 560.9L811.5 554.4L813.6 549.7L813.5 545.2L813.0 544.9L811.9 549.2L805.1 550.2L801.6 549.6L798.8 553.4L800.1 558.0L798.2 562.0L797.5 565.2L799.6 568.8L802.4 570.6L806.3 570.3ZM588.7 653.0L585.4 652.4L586.5 662.3L591.6 667.8L591.9 674.0L598.7 682.3L602.2 683.0L604.1 684.3L609.2 682.3L611.5 684.2L609.1 681.4L607.8 677.0L607.5 670.9L607.5 666.8L601.6 666.1L598.3 660.4L596.0 659.1L591.7 654.5ZM780.4 695.2L781.1 698.1L784.5 698.3L787.8 701.4L791.8 700.1L794.8 699.4L797.1 696.6L797.5 691.8L794.6 690.8L788.8 687.6L789.3 684.3L784.7 684.7L785.3 688.5L782.5 689.6L779.5 691.6ZM482.8 644.3L476.5 658.5L477.4 667.4L480.0 670.0L494.9 682.3L493.5 668.5L492.1 641.9L486.2 626.5L486.0 624.1ZM697.9 340.0L702.2 341.7L698.7 347.9L703.4 351.8L707.6 349.2L714.4 348.9L720.3 348.2L725.7 348.5L727.7 343.0L720.1 333.9L720.2 332.9L720.0 333.0L707.0 331.0L699.0 332.0L699.0 329.4L697.2 330.9L696.8 333.7ZM720.8 800.7L719.0 801.5L718.0 804.0L723.1 802.4L722.7 801.1ZM636.9 544.0L638.1 540.7L639.7 537.1L637.1 533.8L636.3 530.6L635.4 528.5L635.2 528.4L632.3 529.8L628.3 531.7L626.3 531.2L622.2 531.4L621.5 533.1L620.1 534.0L622.8 537.3L621.7 540.9L622.4 543.7L625.3 545.0L627.2 547.0L630.4 546.7L634.3 545.9ZM613.9 715.4L618.0 719.6L621.0 719.2L622.4 724.4L624.1 724.1L626.1 724.7L628.8 722.4L629.2 717.9L627.4 714.1L625.1 711.6L623.9 708.5L625.1 703.9L622.1 705.6L617.8 704.5L614.3 706.2L613.9 710.5L612.3 713.0ZM841.0 462.7L845.9 460.4L850.0 463.1L855.2 464.4L856.2 463.4L858.7 460.2L856.2 453.0L857.1 449.3L861.2 443.7L855.0 443.5L850.5 441.0L845.6 439.4L838.9 438.4L841.7 443.6L841.4 450.0L838.8 454.0L837.9 458.7ZM888.7 539.0L889.5 535.0L889.3 534.5L888.1 534.8L887.8 538.8ZM527.9 594.8L522.5 586.2L517.5 580.7L509.8 572.7L507.6 569.3L504.8 568.2L507.8 592.5L506.2 633.7L503.5 649.4L507.1 682.3L508.6 684.0L511.5 684.3L514.5 682.9L516.5 684.7L517.4 684.7L520.9 683.1L519.9 677.1L527.3 675.2L528.7 670.1L532.4 664.3L533.2 659.8L531.2 652.1L534.6 648.5L532.6 634.0L531.4 619.5L531.8 607.5L534.4 598.0ZM452.5 467.6L441.0 464.8L415.3 465.0L413.5 465.0L411.4 486.3L419.5 492.1L437.8 507.0L452.4 515.3L455.3 517.4L459.0 515.6L462.8 515.3L486.2 514.9L510.8 514.4L538.5 511.5L572.3 508.7L583.1 508.4L594.9 500.3L604.4 497.3L615.8 495.6L618.0 492.1L619.3 488.5L621.8 486.7L621.7 482.6L579.7 476.7L544.9 478.1L510.2 471.1L481.7 468.9ZM775.4 649.5L777.0 643.2L776.3 643.5L774.7 647.6ZM742.5 567.6L742.0 563.5L743.2 560.3L738.0 559.6L736.5 555.1L733.7 554.0L731.1 550.4L730.2 554.7L727.8 556.6L723.9 557.8L721.2 561.5L723.9 562.7L725.1 566.7L726.0 569.0L729.4 571.4L734.2 567.3L736.4 568.7L739.7 570.8ZM619.0 669.6L616.5 667.4L612.7 664.0L607.5 666.8L607.5 670.9L607.8 677.0L609.1 681.4L611.5 684.2L612.6 685.2L615.0 683.9L617.7 684.1L621.4 680.2L623.6 678.5L625.4 672.1L624.6 668.1L624.1 667.3ZM649.2 692.6L646.7 691.5L645.6 687.7L642.3 689.8L638.1 688.7L636.9 692.4L637.7 697.1L634.3 699.7L637.9 700.0L641.2 703.0L643.5 705.4L647.4 703.5L645.9 699.5L648.3 697.2L652.0 695.2ZM639.3 556.0L641.0 553.8L638.6 551.7L637.7 548.3L634.3 545.9L630.4 546.7L627.2 547.0L629.1 552.0L623.7 554.7L623.8 557.6L626.0 561.7L627.7 562.5L632.6 563.1L635.3 561.5L639.2 559.6ZM836.7 510.3L840.5 508.3L841.3 504.8L837.4 502.4L838.5 499.9L839.6 495.3L836.2 493.3L832.3 494.0L829.8 491.3L826.2 492.3L826.1 497.1L823.0 498.8L820.2 502.7L821.4 504.5L821.2 506.3L824.3 506.3L826.2 510.5L831.3 508.7L833.8 511.3ZM774.6 356.4L771.5 357.2L765.2 358.9L762.2 357.9L758.0 364.5L754.5 369.3L755.2 376.1L750.9 383.7L755.9 388.3L764.6 389.3L767.3 391.0L774.2 394.7L779.0 389.9L783.0 386.8L787.2 384.9L793.2 382.0L795.1 378.4L794.8 374.8L792.1 368.5L787.0 364.4L785.2 359.7L779.4 357.4ZM563.1 755.6L566.0 755.0L567.8 752.1L568.2 748.7L568.5 745.3L564.8 742.8L564.1 738.9L560.6 739.3L559.4 740.1L559.0 741.5L554.7 753.7L557.1 753.8L560.5 756.2ZM669.1 761.7L671.9 760.4L670.8 756.0L670.3 749.8L666.7 747.7L664.4 743.4L662.1 742.8L659.7 745.2L655.5 745.1L653.8 747.5L652.8 750.3L652.7 752.7L655.8 756.0L654.2 760.6L656.5 762.4L657.8 763.1L659.0 764.3L662.3 763.2L666.2 764.5ZM581.4 657.9L585.7 668.7L581.3 680.6L585.5 687.0L588.3 687.4L591.7 687.3L593.7 689.0L596.3 687.9L596.3 683.9L598.7 682.3L591.9 674.0L591.6 667.8L586.5 662.3L585.4 652.4L582.8 650.8L579.4 648.7ZM679.2 695.7L676.7 697.5L676.2 701.0L675.8 705.1L677.5 707.7L682.6 708.3L685.6 709.6L688.7 711.0L693.2 710.2L694.3 707.9L694.6 705.5L693.7 702.0L694.1 699.3L690.4 696.6L687.0 693.9L683.1 694.1ZM602.2 613.3L584.9 605.8L562.6 607.3L543.4 604.8L548.9 609.1L557.8 615.8L562.1 620.9L568.9 630.4L580.2 630.5L588.1 633.8L595.0 633.7L605.1 631.1L609.7 631.6L612.3 626.2L617.6 626.6L621.3 624.8L621.5 622.2L620.8 618.2L621.9 616.3L623.0 612.4ZM609.2 439.8L600.8 438.8L590.9 437.3L584.9 441.8L595.4 444.6L606.0 450.3L612.9 452.1L623.6 458.9L626.0 455.7L626.2 452.6L628.4 450.1L625.1 445.1L622.9 442.0L617.8 439.1L616.7 435.2ZM613.8 268.0L600.0 270.0L580.5 279.8L592.7 275.5L601.0 274.1L613.8 271.1ZM580.9 740.4L574.3 740.0L571.1 741.0L568.5 745.3L568.2 748.7L567.8 752.1L570.1 755.4L574.1 756.6L577.7 755.7L582.0 755.3L580.7 751.0L585.5 750.1L584.8 744.6L586.8 741.9L586.0 740.0L584.7 739.0ZM622.3 664.2L622.1 661.4L622.0 656.8L624.7 654.8L622.3 653.4L620.8 652.1L612.8 650.7L608.2 653.0L598.9 654.4L591.7 654.5L596.0 659.1L598.3 660.4L601.6 666.1L607.5 666.8L612.7 664.0L616.5 667.4L619.0 669.6L624.1 667.3ZM624.8 768.9L621.2 770.6L616.5 768.4L614.9 771.8L614.8 775.7L613.5 778.9L615.8 780.2L617.8 782.4L619.3 784.9L619.6 785.1L620.5 781.5L624.8 781.3L629.5 783.1L631.4 779.0L630.2 776.6L631.4 773.0L631.3 770.5L629.2 769.6L628.1 767.6ZM623.7 465.9L620.9 468.7L619.5 471.7L619.6 476.6L623.4 478.6L623.5 481.6L623.7 481.7L629.4 481.5L631.5 480.1L637.0 479.1L640.2 477.0L640.4 476.4L637.6 472.6L637.7 469.7L636.8 466.0L634.4 464.6L631.3 463.4L627.0 461.9L624.4 462.8ZM652.4 605.1L653.7 607.7L656.1 610.2L659.1 607.5L661.4 607.9L664.7 608.0L665.7 606.2L666.6 603.4L664.3 601.1L665.7 597.9L664.4 595.5L663.2 593.8L659.1 595.4L656.7 593.3L653.4 597.3L649.8 595.1L648.7 597.4L649.1 601.4L648.2 604.3ZM678.3 455.3L680.2 458.5L680.8 462.2L683.9 464.8L686.8 465.1L689.7 466.5L691.9 467.3L693.6 465.3L697.3 464.6L699.3 463.4L698.9 459.4L696.2 455.1L695.7 451.8L692.4 448.0L688.7 448.1L686.6 450.4L682.7 450.1L679.7 450.2L678.7 451.3ZM650.9 546.8L651.0 544.0L647.7 540.7L644.5 538.7L640.9 538.7L638.1 540.7L636.9 544.0L634.3 545.9L637.7 548.3L638.6 551.7L641.0 553.8L644.3 552.3L646.3 550.2L650.7 551.3ZM786.2 762.6L781.3 761.4L778.3 762.7L776.4 764.6L775.3 768.0L776.6 772.2L779.4 772.3L780.7 777.4L783.4 778.0L785.3 778.2L786.9 778.2L787.7 776.0L790.4 773.9L791.7 770.9L787.6 773.0L789.0 762.5L789.6 761.8L789.6 761.0L788.2 760.2ZM734.8 481.9L737.2 480.4L740.2 476.6L739.1 473.1L741.9 470.1L740.3 466.8L738.6 464.1L736.8 461.3L734.2 458.5L730.8 461.6L727.5 458.8L725.9 462.5L721.7 461.8L722.3 465.4L722.4 471.0L719.8 473.6L721.4 478.1L723.6 480.4L726.1 483.3L729.3 484.3L731.9 483.9ZM682.4 645.6L685.4 642.7L683.2 638.8L685.0 635.2L683.9 632.5L682.2 631.9L680.9 630.7L677.1 631.9L674.5 634.5L671.1 633.3L670.8 636.9L668.9 638.9L666.5 640.6L669.8 643.0L670.9 647.5L674.1 648.2L676.8 648.3L680.0 648.2ZM582.9 383.7L538.9 376.8L507.6 375.6L461.6 374.1L426.9 375.9L420.0 400.0L419.7 403.1L452.5 402.5L541.9 409.7L615.0 408.2L618.8 406.3L621.7 401.7L626.4 399.8L629.6 393.6L626.6 391.8L625.8 387.7L625.3 385.1ZM766.0 457.1L769.6 460.2L772.6 466.7L777.6 467.3L780.0 466.0L783.5 463.7L787.4 464.7L788.6 463.2L789.8 462.2L789.9 459.1L791.4 455.7L792.5 453.5L789.1 448.3L785.6 444.9L781.2 446.8L776.7 442.2L774.6 446.6L767.3 446.7L766.4 452.2L761.1 453.8L760.8 455.8L761.8 457.6ZM821.4 504.5L820.2 502.7L817.2 498.9L811.9 500.7L809.5 497.4L805.5 498.2L803.1 500.2L801.2 502.0L799.0 505.6L798.4 509.1L802.1 512.0L798.6 515.8L802.5 516.5L805.3 514.7L809.1 514.2L813.7 516.2L814.9 512.1L817.2 511.6L820.0 509.8L821.2 506.3ZM680.3 667.1L680.4 669.7L684.1 670.3L686.4 673.6L689.3 672.3L690.6 669.7L694.1 668.6L693.1 665.2L693.8 661.5L691.6 658.0L687.8 658.0L684.1 657.2L683.2 660.2L681.5 663.9L678.0 665.1ZM863.3 526.8L861.3 523.6L858.8 523.1L853.1 524.0L851.6 526.5L848.1 527.3L845.1 530.2L848.4 534.4L845.3 538.7L848.7 540.2L853.6 542.2L854.0 546.2L859.7 546.5L861.5 546.0L863.0 544.3L866.4 541.5L863.7 537.3L864.7 533.0L867.8 529.3ZM679.8 672.6L676.8 673.9L676.9 678.7L674.1 680.5L674.9 682.9L677.5 685.0L681.4 686.4L684.6 686.4L685.7 681.7L690.1 681.0L688.3 678.9L688.8 675.1L689.3 672.3L686.4 673.6L684.1 670.3L680.4 669.7ZM839.4 492.0L839.7 486.4L842.5 484.2L843.6 482.2L839.6 482.4L839.5 478.7L836.7 476.3L833.1 475.9L830.2 477.3L826.4 478.5L824.2 480.5L821.9 482.5L821.3 486.2L823.6 489.5L826.2 492.3L829.8 491.3L832.3 494.0L836.2 493.3ZM668.7 808.4L668.2 808.0L669.0 810.0L671.3 811.6L670.7 809.8ZM610.9 742.8L614.1 740.7L611.6 737.3L613.6 733.0L613.9 729.7L610.8 728.4L606.9 726.2L602.5 726.5L601.9 726.9L604.7 730.3L601.8 732.9L599.2 737.1L602.1 741.0L605.6 741.5L607.6 744.0ZM780.2 701.3L776.0 701.6L774.6 705.2L774.4 709.5L777.5 712.2L777.4 715.1L780.3 714.5L784.9 715.4L788.7 713.8L788.8 713.7L790.2 710.8L787.5 707.3L787.0 704.7L787.8 701.4L784.5 698.3L781.1 698.1ZM605.3 698.4L607.5 695.6L609.8 695.2L613.0 692.3L610.9 689.0L612.6 685.2L611.5 684.2L609.2 682.3L604.1 684.3L602.2 683.0L598.7 682.3L596.3 683.9L596.3 687.9L593.7 689.0L596.4 691.7L595.1 693.8L596.4 696.9L598.8 697.3L601.6 698.7ZM593.5 724.8L592.0 722.0L591.7 717.7L588.3 717.1L584.2 718.7L583.1 723.3L578.7 723.1L577.8 726.8L577.7 727.4L579.3 730.9L581.1 735.0L584.5 736.5L589.9 736.2L589.7 730.2L593.8 728.1L596.4 726.5ZM627.8 380.2L628.0 377.1L627.4 372.4L630.9 367.7L629.2 364.0L627.7 363.1L624.4 360.1L621.7 358.4L580.7 360.5L546.4 367.8L491.1 373.5L461.6 374.1L507.6 375.6L538.9 376.8L582.9 383.7L625.3 385.1ZM682.3 413.4L678.9 414.2L674.9 414.1L669.7 410.9L667.2 412.7L665.5 415.1L669.4 418.4L667.7 423.4L667.1 428.2L669.9 430.4L673.6 430.6L675.8 432.4L680.2 433.9L684.1 431.7L685.8 429.5L690.2 428.8L687.2 424.2L688.7 419.4L685.9 416.1L687.5 411.7ZM572.2 772.9L574.1 771.6L575.0 768.1L574.6 764.5L572.8 759.6L574.1 756.6L570.1 755.4L567.8 752.1L566.0 755.0L563.1 755.6L560.5 756.2L561.8 758.9L557.7 760.9L558.8 764.6L559.8 769.3L563.2 771.6L567.5 772.1L570.6 773.8ZM674.5 634.5L677.1 631.9L680.9 630.7L678.4 627.9L679.1 624.0L679.7 620.0L675.7 621.0L673.4 618.3L670.6 615.9L667.9 617.5L667.7 621.0L665.1 623.7L667.5 627.4L670.4 629.6L671.1 633.3ZM565.7 731.5L568.7 729.0L572.0 729.2L575.4 730.0L577.7 727.4L577.8 726.8L577.0 723.0L571.8 721.8L572.1 717.9L570.5 713.0L564.0 725.7L562.7 729.9ZM732.9 651.0L738.2 651.9L741.7 649.9L741.1 646.2L740.3 643.0L741.8 639.7L740.2 637.2L739.2 636.6L735.3 636.3L734.4 642.4L728.5 640.5L726.7 643.1L727.6 646.7L730.3 648.4L728.0 652.5L730.8 654.8ZM656.0 779.5L654.5 776.8L651.3 778.5L648.8 775.0L645.8 776.3L645.0 779.9L641.8 782.0L640.0 784.9L640.8 786.8L640.9 789.1L644.3 790.3L647.1 791.7L650.7 790.8L654.3 788.3L657.7 785.5L657.9 782.0ZM715.8 716.9L713.7 716.8L711.7 717.9L710.1 719.5L709.0 722.6L709.9 724.5L708.7 727.7L711.3 730.1L710.9 733.4L714.4 734.8L717.1 733.3L721.2 733.4L724.2 730.4L727.6 728.1L727.0 723.8L723.8 722.5L718.8 720.8L718.2 716.5ZM764.4 665.3L761.5 662.3L761.2 657.8L762.0 655.6L762.8 651.0L760.2 650.2L757.4 650.6L754.2 649.4L749.7 651.1L748.2 654.5L748.9 656.7L748.5 659.2L752.3 659.2L754.5 660.6L758.5 663.0L759.1 666.7L762.0 666.8ZM530.5 558.7L553.4 555.1L571.5 556.3L607.5 553.2L608.6 548.8L614.9 546.9L619.4 546.6L622.4 543.7L621.7 540.9L622.8 537.3L620.1 534.0L571.9 527.9L536.9 524.7L496.3 516.6L462.8 515.3L459.0 515.6L455.3 517.4L452.4 515.3L462.8 524.0L465.2 532.1L475.9 544.5L484.8 549.9L485.4 553.1L489.6 555.3L494.0 554.5L494.3 557.8ZM712.3 713.3L712.4 708.0L710.5 706.0L706.5 702.0L704.2 706.1L701.2 704.9L696.9 706.4L694.3 707.9L693.2 710.2L694.6 712.8L694.2 716.0L698.4 718.9L702.9 720.4L706.2 720.4L710.1 719.5L711.7 717.9L713.7 716.8ZM642.1 716.8L646.6 722.7L644.2 725.4L642.7 730.4L643.3 731.1L647.4 728.3L649.8 729.7L653.5 725.9L658.7 727.7L659.5 726.4L660.1 722.4L654.9 721.0L653.4 717.8L654.1 713.6L651.2 711.2L647.2 713.1L645.2 711.2L644.4 712.2ZM758.8 702.9L756.6 699.3L753.0 697.1L748.6 696.2L745.4 696.8L741.4 699.6L740.9 703.3L741.7 706.2L744.4 707.9L747.1 710.6L747.8 714.0L752.2 715.2L754.2 712.6L758.4 711.2L759.5 708.8L760.0 706.2ZM816.7 343.4L818.3 348.5L816.6 359.0L814.2 365.5L816.8 369.7L826.5 370.0L830.5 370.2L836.0 375.6L838.7 374.6L841.6 365.3L845.7 363.5L848.1 354.8L851.3 346.8L844.2 344.9L834.3 335.5L827.7 337.1L819.7 330.5L817.9 331.8L816.2 334.3ZM547.3 599.4L557.3 595.4L565.7 594.8L579.0 595.3L586.9 590.1L600.0 589.7L614.0 587.0L623.8 583.3L622.0 580.9L622.0 575.8L617.5 574.7L617.5 571.2L585.6 574.7L560.2 571.4L534.6 569.3L509.8 572.7L517.5 580.7L522.5 586.2L527.9 594.8L534.4 598.0L536.9 599.4ZM645.3 604.1L648.2 604.3L649.1 601.4L648.7 597.4L649.8 595.1L647.7 593.4L645.6 592.5L643.9 589.4L639.4 590.2L637.0 592.8L634.9 595.6L636.4 598.2L635.5 601.4L638.6 601.9L640.5 603.8L642.8 606.4ZM728.0 767.7L724.3 765.8L721.6 763.5L717.8 761.9L715.6 765.3L712.0 766.5L711.6 770.6L711.9 774.6L717.8 776.3L717.8 780.3L720.5 780.4L722.3 775.4L726.9 774.4L729.1 771.6L731.6 769.4ZM697.3 464.6L693.6 465.3L691.9 467.3L691.1 471.0L688.0 473.7L687.4 477.2L688.2 479.6L688.6 481.6L691.9 485.2L695.3 483.7L697.6 485.3L701.2 486.7L701.6 483.7L704.5 480.5L706.8 477.6L703.6 475.6L703.4 470.9L703.1 467.4L700.6 463.8L699.3 463.4ZM625.9 426.1L627.1 423.3L622.7 422.0L623.8 415.3L617.6 410.5L615.0 408.2L541.9 409.7L452.5 402.5L419.7 403.1L415.8 442.0L479.9 444.4L539.1 443.7L584.9 441.8L590.9 437.3L600.8 438.8L609.2 439.8L616.7 435.2L620.2 434.5L620.9 428.7L625.0 428.1ZM752.0 783.6L757.0 783.9L759.7 785.9L761.7 784.5L763.7 783.3L766.6 780.7L766.8 776.0L766.0 772.6L762.7 769.9L761.7 767.0L758.2 766.0L755.1 766.1L753.0 768.2L750.1 769.7L751.3 772.4L752.4 776.4L750.5 779.8ZM649.9 498.3L647.1 496.9L642.1 495.8L642.2 492.6L640.5 494.3L636.8 493.9L634.2 496.6L634.1 500.6L633.7 503.8L637.5 506.8L638.6 510.4L641.9 511.5L645.0 511.5L645.3 506.8L647.3 505.3L649.9 501.8ZM771.5 631.9L770.1 634.2L767.7 637.7L767.9 640.9L768.7 642.7L769.3 645.2L772.5 646.2L774.7 647.6L776.3 643.5L777.0 643.2L777.8 640.0L775.0 631.9ZM644.8 655.8L645.3 652.5L647.8 650.6L646.9 647.0L647.1 644.4L644.7 641.8L642.1 639.6L639.4 639.9L636.6 640.8L637.7 644.7L632.8 645.3L631.4 648.9L632.0 652.3L637.4 652.8L638.0 656.3L641.8 658.8ZM801.7 694.6L803.5 689.9L803.6 687.4L804.7 686.4L800.0 681.1L798.6 681.9L797.1 681.6L792.9 683.1L790.1 681.2L790.1 683.1L789.3 684.3L788.8 687.6L794.6 690.8L797.5 691.8L797.1 696.6L799.6 697.2ZM662.3 763.2L659.0 764.3L660.1 768.8L656.8 770.0L654.1 773.8L654.5 776.8L656.0 779.5L657.9 782.0L661.3 781.0L663.6 783.7L666.9 782.2L668.7 780.7L669.5 778.3L671.6 774.4L665.3 772.2L665.1 769.2L666.2 764.5ZM625.3 338.4L623.0 336.4L591.5 332.2L528.7 322.0L496.2 320.4L469.6 315.2L440.0 330.0L426.9 375.9L461.6 374.1L491.1 373.5L546.4 367.8L580.7 360.5L621.7 358.4L620.9 354.3L626.4 349.7L624.3 345.3L627.2 340.4ZM845.3 538.7L848.4 534.4L845.1 530.2L848.1 527.3L844.2 528.5L838.8 525.6L835.7 523.5L834.4 520.0L832.8 523.7L830.7 524.8L827.3 526.6L830.2 529.2L828.8 534.9L829.7 538.3L832.4 539.0L836.6 539.8L839.8 537.7L844.7 539.1ZM788.7 713.8L789.9 716.1L791.0 719.0L792.9 723.3L793.8 725.6L796.8 725.9L800.3 724.5L801.0 721.4L805.6 719.6L806.2 715.2L803.0 715.1L801.5 712.2L799.2 709.7L795.8 709.2L792.5 711.0L788.8 713.7ZM784.2 747.2L787.8 746.8L791.6 744.1L794.0 741.6L792.9 738.7L795.5 735.8L794.4 732.2L791.4 729.6L787.5 727.2L783.8 727.7L780.2 729.5L779.5 733.0L778.4 735.3L775.5 737.6L776.2 741.2L778.4 743.5L781.3 746.7ZM654.7 534.5L657.5 535.2L660.1 537.8L662.6 535.8L665.9 534.1L667.5 530.5L667.2 526.5L661.8 526.1L659.5 521.9L655.0 522.6L652.2 524.4L649.9 528.2L649.6 532.7L652.0 535.2ZM640.7 789.6L641.1 793.4L643.0 794.0L656.5 796.6L657.4 795.5L654.6 791.9L654.3 788.3L650.7 790.8L647.1 791.7L644.3 790.3L640.9 789.1ZM654.5 383.1L655.4 385.9L659.8 385.3L663.5 390.8L666.5 390.3L670.1 394.5L672.4 391.7L680.2 390.5L683.7 388.5L687.3 386.1L686.8 383.7L687.6 381.7L682.1 378.6L681.2 376.4L675.1 372.8L673.5 368.9L668.9 374.3L665.6 373.8L658.9 379.1L655.5 380.9ZM527.6 676.2L529.8 681.0L530.3 685.8L545.6 687.1L545.5 685.8L546.9 682.8L548.1 680.4L545.6 669.9L543.2 664.3L535.8 657.8L534.6 648.5L531.2 652.1L533.2 659.8L532.4 664.3L528.7 670.1ZM705.0 302.6L705.0 301.8L696.0 306.0L686.5 302.3L686.5 304.2L688.3 307.8L690.8 310.9L694.7 309.6L697.4 309.2L701.2 309.7L704.4 305.8ZM587.3 710.5L583.2 708.4L580.0 708.0L577.4 711.5L573.8 709.7L572.2 711.6L570.6 712.8L570.5 713.0L572.1 717.9L571.8 721.8L577.0 723.0L577.8 726.8L578.7 723.1L583.1 723.3L584.2 718.7L588.3 717.1L588.7 714.8L588.5 712.3ZM778.5 430.4L782.7 427.8L783.8 424.3L786.8 423.1L787.2 420.2L784.0 415.0L781.5 413.4L778.5 408.3L774.0 404.8L767.4 409.9L762.7 413.1L758.4 418.8L754.0 420.7L755.0 424.2L757.0 426.6L762.0 424.8L765.8 429.0L771.3 432.2L776.6 431.9ZM646.6 622.5L649.9 621.2L653.3 620.6L653.6 617.1L652.1 611.9L656.1 610.2L653.7 607.7L652.4 605.1L648.2 604.3L645.3 604.1L642.8 606.4L643.4 609.6L639.2 611.1L638.9 615.7L639.8 618.6L640.5 620.2L642.4 620.5L643.6 621.9ZM666.8 462.8L666.4 465.2L668.8 467.9L673.2 468.9L676.3 466.4L677.4 464.2L680.8 462.2L680.2 458.5L678.3 455.3L678.7 451.3L675.4 450.2L671.8 452.0L668.8 454.4L667.7 457.4L665.4 461.0ZM640.9 302.6L633.5 302.9L633.9 298.4L628.8 296.3L625.4 297.0L623.1 298.2L624.6 303.8L622.7 308.4L626.5 312.3L623.5 317.5L626.9 316.0L631.2 318.3L635.1 317.8L637.0 314.9L636.5 310.7L642.2 311.4L642.4 306.5ZM821.6 450.6L822.5 447.7L819.6 439.4L823.6 436.9L821.7 435.2L818.2 433.0L816.1 430.3L814.1 433.0L809.3 435.9L803.7 433.4L800.2 437.8L797.8 441.2L797.6 445.8L797.5 449.4L801.3 450.3L808.7 450.0L812.0 455.7L817.4 456.1ZM760.9 685.3L761.9 682.1L763.6 680.7L761.4 678.2L762.3 673.2L763.6 670.8L762.0 666.8L759.1 666.7L758.5 670.9L753.7 675.2L748.4 675.8L745.9 679.3L745.8 680.3L748.2 682.8L749.9 686.0L753.8 684.1L757.0 687.1L758.2 686.9ZM649.6 532.7L649.9 528.2L647.4 527.5L645.8 526.0L642.0 527.9L638.7 526.3L635.4 528.5L636.3 530.6L637.1 533.8L639.7 537.1L638.1 540.7L640.9 538.7L644.5 538.7L647.7 540.7L649.7 537.4L652.0 535.2ZM695.7 647.8L693.4 652.0L695.7 653.9L700.0 653.2L703.1 656.9L706.4 654.9L703.8 651.4L704.0 647.1L705.8 643.4L702.7 641.3L699.5 640.1L697.7 642.9L694.0 642.7L692.8 645.2ZM869.6 509.1L867.4 514.5L871.5 518.0L873.8 520.0L877.7 519.5L880.5 519.1L883.2 517.5L883.0 516.8L879.5 500.5L879.2 500.2L875.9 501.3L871.8 501.6L868.7 501.1L866.7 503.9L865.7 507.9ZM642.4 620.5L640.5 620.2L637.2 620.6L633.9 624.9L630.1 624.2L628.2 628.9L629.5 631.7L629.7 635.8L632.4 636.4L634.4 640.0L636.6 640.8L639.4 639.9L642.1 639.6L643.0 638.6L643.8 635.4L642.8 631.2L643.8 626.3L643.6 621.9ZM647.5 686.0L646.0 680.1L649.9 678.4L650.2 675.7L645.6 674.1L642.0 676.2L639.7 676.4L635.2 676.4L633.2 679.1L633.7 683.0L635.6 685.9L638.1 688.7L642.3 689.8L645.6 687.7ZM681.4 353.3L686.8 358.1L692.2 357.1L699.7 356.9L701.9 354.9L703.4 351.8L698.7 347.9L702.2 341.7L697.9 340.0L696.8 333.7L692.8 332.1L686.6 334.8L681.6 335.6L678.1 336.7L675.8 341.0L674.3 345.5L677.5 350.4L675.2 353.3ZM604.1 713.0L602.5 711.4L599.8 712.5L595.6 709.6L592.0 713.5L588.5 712.3L588.7 714.8L588.3 717.1L591.7 717.7L592.0 722.0L593.5 724.8L596.4 726.5L599.0 727.4L601.9 726.9L602.5 726.5L604.7 722.9L604.2 719.9L605.7 717.9L605.9 714.4ZM683.6 485.2L686.5 484.2L688.6 481.6L688.2 479.6L687.4 477.2L683.3 477.8L681.2 474.0L677.4 474.5L674.6 474.2L673.7 477.7L671.1 480.0L671.5 484.3L674.6 485.1L676.8 488.5L679.9 489.1L683.5 488.0ZM507.1 682.3L503.5 649.4L506.2 633.7L507.8 592.5L504.8 568.2L503.4 563.2L500.6 562.0L496.0 561.4L494.3 557.8L494.0 554.5L489.6 555.3L485.4 553.1L484.8 549.9L481.9 564.2L483.0 576.9L486.1 591.4L484.7 609.2L486.2 626.5L492.1 641.9L493.5 668.5L494.9 682.3L495.8 683.0L504.7 683.7ZM791.4 789.8L791.6 784.6L789.3 780.9L786.9 778.2L785.3 778.2L783.4 778.0L778.8 779.6L777.0 783.1L775.9 786.0L785.0 786.0L788.5 793.6ZM615.2 640.8L611.5 637.8L608.0 634.9L605.1 631.1L595.0 633.7L588.1 633.8L580.2 630.5L568.9 630.4L569.6 635.2L572.7 639.6L577.3 641.1L578.3 647.7L579.4 648.7L582.8 650.8L585.4 652.4L588.7 653.0L591.7 654.5L598.9 654.4L608.2 653.0L612.8 650.7L620.8 652.1L620.6 649.3L618.8 644.3L620.6 641.4ZM720.1 756.2L722.2 753.8L726.4 752.7L726.2 749.1L726.2 744.7L722.2 744.3L720.1 741.7L716.5 740.9L713.0 742.0L711.8 743.6L710.3 744.5L708.8 747.7L709.4 750.8L712.4 752.4L716.0 755.6L717.7 758.8ZM714.0 633.8L711.6 630.9L708.1 629.2L704.2 629.0L701.3 632.2L698.4 630.5L698.5 634.4L697.8 636.5L699.5 640.1L702.7 641.3L705.8 643.4L709.7 641.8L711.9 637.8L715.8 637.1ZM633.8 783.1L636.2 784.7L640.0 784.9L641.8 782.0L645.0 779.9L645.8 776.3L644.2 774.1L645.4 770.6L642.3 767.9L639.1 771.1L635.9 771.3L631.3 770.5L631.4 773.0L630.2 776.6L631.4 779.0ZM560.8 795.4L562.5 793.5L558.2 791.7L558.2 787.7L554.9 784.4L551.1 784.1L550.0 784.8L549.7 788.8L559.0 796.7L560.0 796.3ZM741.0 741.1L738.6 743.3L741.0 747.2L738.9 751.2L740.7 754.7L744.2 754.6L748.9 752.9L751.7 752.1L751.8 748.9L749.9 745.9L751.3 742.8L747.5 741.1L744.6 739.3ZM767.6 755.9L765.4 752.9L763.3 751.6L759.6 751.1L758.2 753.0L754.7 753.9L756.6 757.5L753.9 761.0L752.9 762.8L755.1 766.1L758.2 766.0L761.7 767.0L765.2 765.4L768.3 763.5L770.5 758.8L770.4 757.9ZM765.7 748.2L765.3 745.9L766.3 742.3L765.5 739.7L764.4 736.8L762.2 735.8L760.7 739.9L756.7 741.1L755.4 743.2L751.3 742.8L749.9 745.9L751.8 748.9L751.7 752.1L752.9 753.1L754.7 753.9L758.2 753.0L759.6 751.1L763.3 751.6ZM774.9 687.1L773.6 684.6L772.7 681.7L769.1 682.0L766.7 679.9L763.6 680.7L761.9 682.1L760.9 685.3L758.2 686.9L762.0 687.1L763.8 692.3L767.0 693.9L770.4 693.6L774.0 692.5L776.0 690.0ZM710.9 733.4L711.3 730.1L708.7 727.7L705.4 729.9L702.2 731.7L699.4 731.7L698.5 735.2L698.9 738.3L701.4 738.7L703.7 743.2L706.1 743.4L710.3 744.5L711.8 743.6L713.0 742.0L712.9 738.2L714.4 734.8ZM534.6 569.3L560.2 571.4L585.6 574.7L617.5 571.2L618.6 568.1L620.2 565.4L622.6 562.9L618.1 562.6L615.1 556.2L611.7 553.2L607.5 553.2L571.5 556.3L553.4 555.1L530.5 558.7L494.3 557.8L496.0 561.4L500.6 562.0L503.4 563.2L504.8 568.2L507.6 569.3L509.8 572.7ZM486.1 591.4L483.0 576.9L481.9 564.2L484.8 549.9L475.9 544.5L465.2 532.1L462.8 524.0L452.4 515.3L437.8 507.0L419.5 492.1L411.4 486.3L410.0 500.0L420.0 600.0L450.0 640.0L477.4 667.4L476.5 658.5L482.8 644.3L486.1 623.2L484.7 609.2ZM681.5 663.9L683.2 660.2L684.1 657.2L683.1 654.2L683.5 651.0L680.0 648.2L676.8 648.3L674.1 648.2L673.7 653.2L673.5 655.3L666.9 656.2L667.5 661.5L667.8 662.0L670.5 664.3L674.9 663.5L678.0 665.1ZM705.5 672.7L705.7 676.4L707.7 678.9L710.9 678.3L712.4 682.3L716.3 682.3L720.0 681.9L722.4 680.3L724.8 677.0L724.5 675.1L725.0 673.2L719.5 673.1L716.6 671.0L715.0 664.9L709.7 662.8L708.7 665.8L705.2 667.1L704.3 669.7ZM653.1 501.3L649.9 501.8L647.3 505.3L645.3 506.8L645.0 511.5L645.8 512.4L648.8 515.2L651.7 515.8L656.3 514.7L660.6 514.9L662.2 513.7L663.9 511.7L664.4 507.9L658.8 508.3L658.8 504.1L657.1 500.7ZM534.4 598.0L531.8 607.5L531.4 619.5L532.6 634.0L534.6 648.5L535.8 657.8L543.2 664.3L545.6 669.9L548.1 680.4L552.4 682.3L555.3 681.2L559.6 683.0L562.4 681.8L564.0 679.1L568.5 678.9L569.5 674.1L571.3 669.5L572.3 661.2L579.7 653.3L578.3 647.7L577.3 641.1L572.7 639.6L569.6 635.2L568.9 630.4L562.1 620.9L557.8 615.8L548.9 609.1L543.4 604.8L540.6 604.7L540.5 600.5L536.9 599.4ZM649.0 749.6L644.6 751.0L642.5 751.7L639.0 754.8L639.8 758.7L639.5 761.3L643.8 762.2L643.1 766.3L647.1 766.2L650.9 764.6L652.7 761.8L656.5 762.4L654.2 760.6L655.8 756.0L652.7 752.7L652.8 750.3ZM649.4 662.6L652.4 660.0L656.1 658.5L659.6 657.5L659.3 653.6L657.1 651.0L653.8 652.6L651.2 649.8L647.8 650.6L645.3 652.5L644.8 655.8L641.8 658.8L642.5 661.3L646.3 663.1L648.9 665.9ZM631.5 491.0L628.8 487.9L624.1 486.0L623.7 481.7L623.5 481.6L621.7 482.6L621.8 486.7L619.3 488.5L618.0 492.1L615.8 495.6L618.8 497.4L620.0 500.8L624.4 501.4L628.2 500.3L630.5 497.8L633.6 496.5ZM705.0 406.7L705.1 410.8L709.4 416.1L711.5 421.9L718.1 415.7L726.9 417.9L730.0 412.9L736.9 410.4L736.8 408.9L729.8 403.1L722.6 404.4L717.4 397.3L712.3 395.5L708.2 394.7L706.6 399.9L704.6 402.1L699.4 401.2ZM768.7 642.7L767.9 640.9L763.4 642.1L761.8 638.1L757.4 635.7L753.4 636.1L750.8 640.0L751.9 642.4L756.4 645.7L754.2 649.4L757.4 650.6L760.2 650.2L762.8 651.0L766.0 649.9L767.8 647.9L769.3 645.2ZM685.7 681.7L684.6 686.4L681.4 686.4L683.2 690.2L683.1 694.1L687.0 693.9L690.4 696.6L695.0 694.9L696.7 692.4L698.8 688.4L698.2 685.8L694.5 685.4L692.2 683.2L690.1 681.0ZM728.8 686.3L730.6 690.2L729.8 693.5L728.9 696.1L731.3 696.7L734.1 699.0L737.6 700.1L740.8 698.9L740.0 694.1L740.8 691.5L745.3 686.4L743.2 682.1L740.3 679.9L736.9 681.7L733.5 684.0L730.7 682.3ZM707.1 625.1L710.6 623.7L714.0 620.1L712.2 617.1L708.3 616.1L705.9 613.2L703.2 615.2L702.2 618.7L699.8 620.6L695.7 622.4L696.9 625.4L695.6 628.3L697.4 629.2L698.4 630.5L701.3 632.2L704.2 629.0L708.1 629.2ZM591.7 687.3L588.3 687.4L585.5 687.0L584.1 689.7L580.6 691.6L578.1 693.5L579.0 697.2L584.5 697.3L587.5 699.6L588.7 702.3L591.4 700.7L592.2 697.7L596.4 696.9L595.1 693.8L596.4 691.7L593.7 689.0ZM772.6 572.9L772.3 568.6L774.5 565.3L772.4 561.8L769.9 561.4L765.9 559.8L763.0 562.0L759.7 563.0L756.5 566.3L757.3 569.2L759.8 572.7L758.5 577.2L761.5 579.5L766.9 578.7L769.5 574.6L774.7 576.3ZM584.8 744.6L585.5 750.1L580.7 751.0L582.0 755.3L584.7 757.4L587.8 757.9L588.4 760.9L592.1 761.7L594.7 758.8L597.0 757.9L596.8 754.3L593.7 751.7L591.1 748.1L592.8 744.1L589.6 744.2L586.8 741.9ZM651.8 455.8L649.7 457.1L651.1 459.1L652.9 462.8L649.3 467.4L652.9 470.0L655.6 470.5L657.8 472.4L662.3 471.3L664.1 469.0L666.4 465.2L666.8 462.8L665.4 461.0L662.9 456.9L660.9 456.4L658.1 454.5L654.1 455.4ZM638.3 290.6L640.4 284.8L644.6 283.4L650.6 283.5L651.5 280.3L651.6 276.8L646.0 275.3L643.4 273.4L640.3 269.4L634.5 269.9L631.1 270.9L628.0 274.3L627.9 279.1L631.9 282.2L632.3 285.7L632.4 289.4ZM844.4 504.2L847.1 505.0L847.1 500.1L850.3 498.0L853.5 497.8L854.0 493.5L854.0 489.5L850.3 488.5L847.8 484.1L847.0 481.7L845.3 481.8L843.6 482.2L842.5 484.2L839.7 486.4L839.4 492.0L836.2 493.3L839.6 495.3L838.5 499.9L837.4 502.4L841.3 504.8ZM631.2 318.3L626.9 316.0L623.5 317.5L622.6 318.3L621.4 323.4L621.7 327.7L621.6 332.5L623.0 336.4L625.3 338.4L627.2 340.4L631.7 337.1L636.6 337.6L640.8 336.9L644.4 336.0L639.9 333.7L640.4 327.9L636.7 324.5L635.1 317.8ZM678.2 525.0L683.0 527.9L686.5 525.2L686.5 521.4L686.2 518.0L687.4 516.6L686.9 512.6L684.1 512.4L680.7 511.3L676.9 513.5L672.5 513.5L675.7 516.5L675.5 519.5L672.1 523.4L675.2 526.1ZM801.5 712.2L803.0 715.1L806.2 715.2L808.9 716.4L811.3 713.8L814.5 713.7L814.2 709.4L811.7 707.9L811.4 704.3L809.2 700.7L806.3 701.5L802.9 700.9L801.0 698.9L801.4 701.9L798.9 705.8L799.2 709.7ZM579.4 785.0L574.3 786.0L571.7 784.2L571.4 788.3L566.9 788.7L565.9 793.0L568.4 793.2L569.4 792.8L582.1 791.7L582.3 789.0ZM685.2 498.9L689.0 494.7L686.3 491.5L683.5 488.0L679.9 489.1L676.8 488.5L673.9 489.2L672.3 492.5L671.6 495.7L673.5 498.3L673.6 501.1L676.3 499.2L680.4 499.2L686.1 499.6L688.8 501.5L688.8 501.5ZM639.8 573.8L639.9 570.4L642.8 570.0L644.3 566.4L641.4 564.8L642.1 560.9L639.2 559.6L635.3 561.5L632.6 563.1L627.7 562.5L628.7 566.6L628.7 570.8L633.6 572.6L634.2 575.4L636.1 575.5Z" fill="#fdee82" stroke="#86701f" stroke-width="0.45" stroke-linejoin="round"/><path d="M868.4 529.0L870.3 525.3L873.0 523.8L873.8 520.0L871.5 518.0L867.4 514.5L869.6 509.1L865.7 507.9L862.8 511.6L860.6 511.0L856.1 510.6L854.3 511.8L854.3 515.1L856.1 518.0L853.0 520.3L853.1 524.0L858.8 523.1L861.3 523.6L863.3 526.8L867.8 529.3ZM721.7 597.1L718.9 598.2L717.8 602.1L719.3 605.9L720.2 610.2L722.2 612.8L726.8 612.7L729.3 612.4L734.1 613.3L736.9 609.7L735.4 606.6L733.2 602.8L734.2 599.7L729.9 599.8L726.0 597.6L724.1 594.6ZM872.9 531.9L876.2 535.0L883.6 535.4L885.1 539.3L887.8 538.8L888.1 534.8L889.3 534.5L883.2 517.5L880.5 519.1L877.7 519.5L873.8 520.0L873.0 523.8L870.3 525.3L868.4 529.0ZM696.1 751.8L693.6 748.5L694.5 745.3L692.7 742.4L690.4 739.6L685.4 739.4L682.3 739.1L680.1 739.8L680.6 742.7L681.7 747.0L679.3 751.9L680.7 756.3L683.4 756.5L687.3 753.0L690.8 756.6L695.1 754.9ZM609.2 713.9L612.3 713.0L613.9 710.5L614.3 706.2L617.8 704.5L616.1 701.7L612.2 701.1L610.2 699.8L609.8 695.2L607.5 695.6L605.3 698.4L601.6 698.7L603.6 702.4L599.8 705.8L603.5 707.6L602.5 711.4L604.1 713.0L605.9 714.4ZM685.8 609.7L689.1 611.2L692.7 608.2L697.2 606.7L700.3 605.0L700.2 601.8L699.5 597.0L693.7 594.7L695.0 589.4L694.8 589.3L692.0 588.8L688.7 591.1L685.2 590.7L684.4 592.6L683.3 594.0L684.4 598.3L681.2 601.9L682.5 604.8L684.5 608.1ZM760.4 485.6L764.3 485.1L767.0 479.1L772.9 480.1L774.8 476.5L777.5 473.6L775.0 470.6L777.6 467.3L772.6 466.7L769.6 460.2L766.0 457.1L761.8 457.6L758.2 459.6L758.5 462.2L755.9 465.0L759.2 469.3L759.1 473.3L759.6 480.2L756.7 484.3ZM758.1 583.4L757.3 587.3L761.5 588.7L761.5 593.6L767.0 593.0L768.6 595.9L771.6 594.5L775.1 593.1L775.4 589.8L774.9 585.2L776.3 581.4L776.0 577.6L774.7 576.3L769.5 574.6L766.9 578.7L761.5 579.5L758.5 577.2L756.5 579.3ZM651.7 379.9L647.7 375.5L648.3 370.1L644.2 366.4L641.3 367.9L636.7 364.7L634.9 368.5L630.9 367.7L627.4 372.4L628.0 377.1L627.8 380.2L625.3 385.1L625.8 387.7L626.6 391.8L629.6 393.6L634.3 393.9L634.9 398.8L639.8 398.5L642.4 399.1L647.3 396.5L650.5 392.6L651.5 387.4L655.4 385.9L654.5 383.1L655.5 380.9ZM613.7 760.4L615.1 765.1L612.6 767.4L614.4 768.9L614.9 771.8L616.5 768.4L621.2 770.6L624.8 768.9L628.1 767.6L626.2 764.7L627.7 761.4L627.9 759.1L624.6 758.5L623.2 757.3L620.7 755.0L618.3 755.6L615.9 756.8ZM810.5 737.6L810.8 738.1L815.9 731.8L813.7 731.0L812.4 731.8L811.2 732.7L810.7 734.3ZM720.6 536.8L722.0 533.1L717.4 531.5L720.1 527.5L716.0 526.0L714.5 522.7L712.5 520.1L710.3 520.5L707.9 519.8L707.2 523.6L703.7 524.7L702.3 527.7L704.4 533.4L706.0 537.2L707.1 539.9L710.1 544.7L713.9 545.0L716.8 542.0L720.0 540.8ZM809.4 366.3L805.8 372.8L801.8 373.9L794.8 374.8L795.1 378.4L793.2 382.0L799.8 386.7L799.5 393.9L805.6 397.7L810.6 405.9L813.6 406.1L815.6 407.6L818.8 406.1L821.4 408.2L824.1 405.3L827.1 403.4L829.0 394.6L830.0 386.7L831.4 383.1L836.0 375.6L830.5 370.2L826.5 370.0L816.8 369.7L814.2 365.5ZM723.2 507.4L720.3 501.7L718.1 499.6L717.0 495.9L714.4 496.9L711.7 498.5L708.2 497.0L704.8 499.8L707.3 507.1L707.1 511.7L705.5 515.6L706.0 518.2L707.9 519.8L710.3 520.5L712.5 520.1L716.5 519.2L717.9 512.3L721.0 511.1L726.0 508.7ZM702.2 678.6L700.2 681.8L698.2 685.8L698.8 688.4L700.4 691.5L703.9 693.4L705.9 694.4L709.3 696.5L711.1 695.2L713.9 694.8L716.7 691.2L715.4 687.9L713.8 684.9L716.3 682.3L712.4 682.3L710.9 678.3L707.7 678.9L705.7 676.4ZM709.5 660.3L709.7 662.8L715.0 664.9L716.6 671.0L719.5 673.1L725.0 673.2L727.6 671.7L729.3 668.0L731.5 664.8L729.1 662.4L729.4 657.9L725.8 657.0L723.7 654.1L719.4 655.7L714.9 655.7L712.7 657.9L710.1 658.3ZM783.6 299.2L791.0 303.8L800.7 304.8L802.6 305.2L800.0 300.0L796.0 301.0L791.0 298.0L785.0 299.0L782.4 297.5ZM819.7 284.0L818.6 284.0L817.0 277.5L813.0 280.0L808.5 279.0L807.0 284.0L803.5 286.0L802.0 289.0L805.0 292.7L803.0 297.0L801.8 301.0L808.5 303.0L811.0 304.5L816.0 305.5L821.0 303.5L825.1 305.1ZM723.9 557.8L727.8 556.6L730.2 554.7L731.1 550.4L730.6 547.7L730.9 545.6L728.5 542.0L723.9 542.0L720.0 540.8L716.8 542.0L713.9 545.0L710.1 544.7L709.7 547.9L707.1 550.2L711.0 551.4L711.4 555.1L715.1 556.0L715.6 560.7L718.3 561.4L721.2 561.5ZM875.9 552.0L877.4 554.6L879.2 558.2L883.9 557.2L884.0 557.3L885.6 553.6L888.7 539.0L887.8 538.8L885.1 539.3L885.3 543.2L882.3 546.7L881.2 547.5L876.7 549.1ZM666.8 543.5L670.4 543.9L674.8 543.1L678.5 543.2L678.6 540.2L675.6 535.5L674.6 534.2L671.9 530.5L669.9 530.3L667.5 530.5L665.9 534.1L662.6 535.8L660.1 537.8L662.2 539.8L662.0 543.0L662.7 546.1L664.7 547.2ZM673.8 528.8L671.9 530.5L674.6 534.2L675.6 535.5L678.6 540.2L678.5 543.2L679.5 543.7L682.2 542.9L685.4 540.4L689.1 539.8L688.8 536.0L693.0 534.2L692.8 530.9L690.5 528.9L690.2 526.1L686.5 525.2L683.0 527.9L678.2 525.0L675.2 526.1ZM817.9 331.8L819.7 330.5L821.8 326.3L820.5 321.5L820.5 320.4L818.6 320.5L814.0 316.0L808.5 314.0L808.0 309.0L803.0 306.0L802.6 305.2L800.7 304.8L791.0 303.8L783.6 299.2L778.6 304.4L776.9 309.3L774.6 312.9L774.9 318.5L779.0 324.8L779.6 328.8L783.5 334.4L787.9 337.7L796.5 336.4L800.2 334.4L806.9 334.2L816.2 334.3ZM650.2 675.7L649.9 678.4L646.0 680.1L647.5 686.0L645.6 687.7L646.7 691.5L649.2 692.6L652.0 695.2L653.5 695.1L656.2 694.1L658.2 690.3L659.7 688.3L661.2 685.1L659.4 680.1L657.8 677.0L654.2 677.1L651.0 675.1ZM653.1 636.9L649.8 639.9L646.0 636.1L643.0 638.6L642.1 639.6L644.7 641.8L647.1 644.4L646.9 647.0L647.8 650.6L651.2 649.8L653.8 652.6L657.1 651.0L656.9 646.9L661.1 645.1L661.3 641.5L659.0 638.7L656.1 637.2ZM709.7 547.9L710.1 544.7L707.1 539.9L706.0 537.2L704.4 533.4L702.3 527.7L699.2 526.8L696.3 531.6L692.8 530.9L693.0 534.2L688.8 536.0L689.1 539.8L690.5 545.6L693.0 547.2L699.2 547.1L700.6 551.7L703.4 551.1L707.1 550.2ZM727.9 583.2L731.7 586.4L735.7 586.1L737.4 583.2L740.0 580.8L740.3 578.1L741.7 575.1L740.3 573.0L739.7 570.8L736.4 568.7L734.2 567.3L729.4 571.4L726.0 569.0L726.6 571.8L725.5 576.1L723.1 577.1L721.0 580.1L722.8 582.9L725.7 586.1ZM868.3 488.0L864.2 489.3L864.3 494.0L865.9 496.3L868.9 498.4L868.7 501.1L871.8 501.6L875.9 501.3L879.2 500.2L879.1 498.7L879.0 498.0L875.0 482.6L875.1 480.6L872.2 480.5L868.6 482.9ZM693.1 501.6L696.3 497.8L698.6 494.0L702.7 493.0L702.5 489.6L701.2 486.7L697.6 485.3L695.3 483.7L691.9 485.2L688.6 481.6L686.5 484.2L683.6 485.2L683.5 488.0L686.3 491.5L689.0 494.7L685.2 498.9L688.8 501.5ZM699.8 620.6L702.2 618.7L703.2 615.2L705.9 613.2L703.7 610.3L703.2 606.3L701.8 605.6L700.3 605.0L697.2 606.7L692.7 608.2L689.1 611.2L685.8 609.7L685.6 612.6L688.8 613.4L688.0 618.9L691.5 620.6L695.7 622.4ZM860.1 494.0L856.6 494.9L854.0 493.5L853.5 497.8L850.3 498.0L847.1 500.1L847.1 505.0L851.2 505.9L852.6 508.9L854.3 511.8L856.1 510.6L860.6 511.0L862.8 511.6L865.7 507.9L866.7 503.9L868.7 501.1L868.9 498.4L865.9 496.3L864.3 494.0ZM808.7 574.2L810.1 576.7L814.6 580.5L816.3 581.9L822.5 577.0L825.5 576.0L826.4 574.5L827.9 571.8L827.0 568.7L824.6 567.5L823.2 565.0L820.0 563.1L815.4 563.8L812.0 564.3L808.7 567.4L806.3 570.3L806.4 570.8ZM662.6 573.0L661.5 575.6L660.2 577.9L661.8 581.2L664.3 584.4L667.8 582.5L672.7 585.2L675.8 579.9L679.3 582.3L680.1 579.2L679.3 575.4L681.5 572.2L679.5 571.1L678.7 569.7L675.9 570.5L672.7 573.0L668.5 570.7L665.4 570.9ZM646.8 566.7L649.7 567.0L649.4 564.1L653.8 563.2L654.3 559.6L654.6 557.1L652.8 554.6L651.6 551.7L650.7 551.3L646.3 550.2L644.3 552.3L641.0 553.8L639.3 556.0L639.2 559.6L642.1 560.9L641.4 564.8L644.3 566.4ZM864.9 479.8L861.5 480.3L859.9 473.1L854.6 472.9L853.7 477.6L850.6 479.8L847.0 481.7L847.8 484.1L850.3 488.5L854.0 489.5L854.0 493.5L856.6 494.9L860.1 494.0L864.3 494.0L864.2 489.3L868.3 488.0L868.6 482.9ZM790.8 494.9L793.8 496.9L796.9 499.5L801.2 502.0L803.1 500.2L805.5 498.2L809.5 497.4L806.3 493.1L808.9 490.8L810.9 485.8L809.5 482.2L806.2 483.7L802.6 484.4L799.1 485.5L793.7 484.9L792.9 488.4L789.6 490.9ZM756.3 590.2L751.2 589.0L750.4 596.2L747.3 596.2L748.9 600.3L750.6 603.7L749.4 607.5L752.0 609.9L755.7 608.2L757.2 607.1L761.9 611.5L762.0 611.4L762.0 611.4L766.6 604.2L766.4 602.2L768.5 599.5L768.6 595.9L767.0 593.0L761.5 593.6L761.5 588.7L757.3 587.3ZM833.9 555.2L837.4 555.3L840.2 556.5L838.7 552.5L840.4 546.5L845.5 544.2L844.7 539.1L839.8 537.7L836.6 539.8L832.4 539.0L829.7 538.3L829.2 540.9L825.2 541.0L824.5 544.4L827.9 546.6L827.2 549.3L831.4 551.5L831.2 554.9ZM670.8 559.3L672.8 560.2L676.9 558.6L678.5 556.0L680.5 554.2L679.2 550.1L680.7 547.8L679.5 543.7L678.5 543.2L674.8 543.1L670.4 543.9L666.8 543.5L664.7 547.2L664.9 550.2L666.3 554.7L666.6 558.1ZM858.1 555.9L855.2 559.7L851.3 559.5L845.6 557.4L842.9 559.6L844.8 563.6L842.1 567.8L842.2 569.5L851.4 564.0L859.8 557.7ZM642.6 489.6L645.2 486.6L644.7 483.3L640.9 480.1L640.2 477.0L637.0 479.1L631.5 480.1L629.4 481.5L623.7 481.7L624.1 486.0L628.8 487.9L631.5 491.0L633.6 496.5L634.2 496.6L636.8 493.9L640.5 494.3L642.2 492.6ZM679.5 571.1L681.5 572.2L684.4 570.8L686.6 569.5L690.8 570.7L694.1 569.3L694.5 568.9L695.6 566.1L696.3 563.2L694.7 559.5L689.3 559.9L687.0 556.3L685.3 553.0L680.5 554.2L678.5 556.0L676.9 558.6L679.9 562.1L679.6 566.1L678.7 569.7ZM760.8 455.8L761.1 453.8L759.5 449.4L757.6 447.6L753.4 445.7L749.3 448.6L747.2 447.1L743.0 444.8L738.5 447.1L737.6 450.7L737.7 452.4L732.8 454.9L734.2 458.5L736.8 461.3L738.6 464.1L740.3 466.8L744.5 467.2L747.8 464.4L751.2 466.4L755.9 465.0L758.5 462.2L758.2 459.6L761.8 457.6ZM736.9 410.4L738.8 411.9L739.5 414.1L744.6 413.0L746.6 417.1L751.5 417.8L754.0 420.7L758.4 418.8L762.7 413.1L767.4 409.9L774.0 404.8L773.8 400.8L775.3 398.2L774.2 394.7L767.3 391.0L764.6 389.3L755.9 388.3L750.9 383.7L748.4 385.1L746.1 385.6L745.0 391.9L743.8 398.6L741.9 404.6L736.8 408.9ZM707.3 789.1L703.4 789.9L703.0 793.2L700.4 795.5L703.4 797.5L703.7 798.2L711.4 806.0L718.0 804.0L719.0 801.5L716.5 798.8L716.5 795.8L712.8 793.7L710.5 789.7ZM708.3 616.1L712.2 617.1L714.6 616.9L717.5 616.8L720.4 615.8L722.2 612.8L720.2 610.2L719.3 605.9L717.8 602.1L718.9 598.2L716.6 599.0L713.9 597.6L711.5 598.7L708.7 602.1L705.4 602.9L703.2 606.3L703.7 610.3L705.9 613.2ZM825.1 305.1L826.0 305.5L830.0 304.0L828.0 301.0L827.0 297.0L830.4 294.0L828.7 286.0L824.0 284.0L819.7 284.0ZM756.4 486.2L756.5 484.5L751.2 483.9L747.3 485.4L741.2 484.5L737.2 480.4L734.8 481.9L731.9 483.9L735.0 487.0L735.7 491.7L738.4 496.8L738.7 501.0L742.6 502.0L746.5 500.5L746.4 496.9L750.1 494.0L756.0 492.5L756.6 488.2ZM697.8 588.2L700.8 588.2L704.9 587.8L706.9 586.4L709.1 583.6L710.7 579.8L710.9 577.3L708.7 574.5L707.0 572.2L703.9 570.5L701.1 573.1L696.8 571.7L694.5 568.9L694.1 569.3L694.4 574.6L691.9 578.2L694.7 584.3L694.8 589.3L695.0 589.4ZM759.2 492.0L761.0 494.4L760.7 497.9L765.9 499.4L770.5 501.1L774.5 498.2L776.7 494.5L780.6 496.1L781.5 494.5L782.2 493.3L780.7 489.6L776.2 487.7L772.9 485.3L772.9 480.1L767.0 479.1L764.3 485.1L760.4 485.6L756.7 484.3L756.5 484.5L756.4 486.2L756.6 488.2ZM785.7 493.2L782.2 493.3L781.5 494.5L780.6 496.1L780.0 499.6L780.7 506.0L782.9 508.4L783.5 513.5L787.9 512.1L789.3 517.9L793.2 517.8L797.8 516.4L798.6 515.8L802.1 512.0L798.4 509.1L799.0 505.6L801.2 502.0L796.9 499.5L793.8 496.9L790.8 494.9L789.6 490.9ZM792.0 582.5L789.4 579.4L786.5 576.7L782.9 578.3L779.6 579.1L776.0 577.6L776.3 581.4L774.9 585.2L775.4 589.8L775.1 593.1L779.2 594.3L781.9 594.3L785.3 596.5L788.3 594.2L787.2 590.6L791.2 589.1L792.3 586.5ZM708.0 568.7L713.0 567.0L710.8 562.2L715.6 560.7L715.1 556.0L711.4 555.1L711.0 551.4L707.1 550.2L703.4 551.1L700.6 551.7L697.4 554.1L698.1 558.2L694.7 559.5L696.3 563.2L695.6 566.1L694.5 568.9L696.8 571.7L701.1 573.1L703.9 570.5L707.0 572.2ZM864.7 533.0L863.7 537.3L866.4 541.5L863.0 544.3L866.6 546.2L869.4 546.0L874.7 545.4L876.7 549.1L881.2 547.5L882.3 546.7L885.3 543.2L885.1 539.3L883.6 535.4L876.2 535.0L872.9 531.9L868.4 529.0L867.8 529.3ZM546.9 682.8L545.5 685.8L545.6 687.1L551.0 687.5L559.2 689.7L559.5 687.1L559.6 683.0L555.3 681.2L552.4 682.3L548.1 680.4ZM660.0 489.4L658.4 486.1L655.3 487.6L652.6 487.5L648.2 489.1L645.2 486.6L642.6 489.6L642.2 492.6L642.1 495.8L647.1 496.9L649.9 498.3L649.9 501.8L653.1 501.3L657.1 500.7L656.9 496.9L659.1 494.3L660.9 492.3ZM717.8 780.3L714.6 782.7L714.0 788.4L710.5 789.7L712.8 793.7L716.5 795.8L716.5 798.8L719.0 801.5L720.8 800.7L722.7 801.1L727.2 799.2L727.3 799.1L725.6 792.9L730.3 794.3L731.3 789.7L727.4 789.6L726.2 785.3L721.1 784.9L720.5 780.4ZM738.2 595.0L736.3 597.2L734.2 599.7L733.2 602.8L735.4 606.6L736.9 609.7L734.1 613.3L736.4 614.8L738.5 616.9L741.8 616.5L743.8 614.9L746.5 615.2L750.0 613.5L752.0 609.9L749.4 607.5L750.6 603.7L748.9 600.3L747.3 596.2L745.4 594.9L742.5 594.8ZM705.2 494.9L708.2 497.0L711.7 498.5L714.4 496.9L717.0 495.9L721.6 493.1L720.4 490.2L726.0 487.6L726.1 483.3L723.6 480.4L721.4 478.1L717.4 480.0L714.1 481.0L709.6 475.1L706.8 477.6L704.5 480.5L701.6 483.7L701.2 486.7L702.5 489.6L702.7 493.0ZM700.6 754.2L704.0 754.6L706.4 751.8L709.4 750.8L708.8 747.7L710.3 744.5L706.1 743.4L703.7 743.2L701.4 738.7L698.9 738.3L696.1 740.9L692.7 742.4L694.5 745.3L693.6 748.5L696.1 751.8L695.1 754.9L696.9 755.4L698.1 757.1ZM778.4 743.5L776.2 741.2L773.2 740.3L768.6 738.0L765.5 739.7L766.3 742.3L765.3 745.9L765.7 748.2L763.3 751.6L765.4 752.9L767.6 755.9L770.4 757.9L774.8 757.1L773.7 751.7L780.9 750.9L781.3 746.7ZM729.4 510.0L726.0 508.7L721.0 511.1L717.9 512.3L716.5 519.2L712.5 520.1L714.5 522.7L716.0 526.0L720.1 527.5L725.8 528.8L728.3 530.0L734.4 529.6L739.0 526.4L740.4 524.3L739.6 519.4L734.3 519.0L732.3 514.4L732.7 509.2ZM785.3 596.5L781.9 594.3L779.2 594.3L775.1 593.1L771.6 594.5L768.6 595.9L768.5 599.5L766.4 602.2L766.6 604.2L767.0 603.5L777.8 598.0L785.7 597.0ZM874.0 560.7L873.4 556.2L877.4 554.6L875.9 552.0L876.7 549.1L874.7 545.4L869.4 546.0L866.6 546.2L863.0 544.3L861.5 546.0L859.7 546.5L857.8 549.4L858.1 553.0L858.1 555.9L859.8 557.7L862.0 556.0L872.4 560.0L873.7 561.2ZM795.2 585.9L799.1 585.9L800.4 580.7L803.5 577.7L803.4 574.5L806.4 570.8L806.3 570.3L802.4 570.6L799.6 568.8L797.5 565.2L795.5 565.6L793.1 566.2L793.2 569.0L792.0 572.9L789.6 574.1L786.5 576.7L789.4 579.4L792.0 582.5L792.3 586.5ZM799.8 589.1L799.1 585.9L795.2 585.9L792.3 586.5L791.2 589.1L787.2 590.6L788.3 594.2L785.3 596.5L785.7 597.0L796.0 595.7L805.0 590.3ZM698.1 558.2L697.4 554.1L700.6 551.7L699.2 547.1L693.0 547.2L690.5 545.6L689.1 539.8L685.4 540.4L682.2 542.9L679.5 543.7L680.7 547.8L679.2 550.1L680.5 554.2L685.3 553.0L687.0 556.3L689.3 559.9L694.7 559.5ZM831.4 551.5L827.2 549.3L827.9 546.6L824.5 544.4L820.6 546.2L817.1 547.2L813.5 545.2L813.6 549.7L811.5 554.4L812.3 560.9L815.4 563.8L820.0 563.1L823.2 565.0L822.9 561.4L827.1 560.3L830.8 557.9L831.2 554.9ZM825.2 541.0L829.2 540.9L829.7 538.3L828.8 534.9L830.2 529.2L827.3 526.6L824.9 526.0L820.6 526.6L818.6 524.7L815.7 526.0L815.8 533.7L813.3 537.0L809.3 537.3L812.3 539.5L812.1 541.7L813.0 544.9L813.5 545.2L817.1 547.2L820.6 546.2L824.5 544.4ZM830.8 557.9L827.1 560.3L822.9 561.4L823.2 565.0L824.6 567.5L827.0 568.7L827.9 571.8L830.5 570.0L833.7 573.4L835.3 572.9L839.2 570.4L840.0 570.8L842.2 569.5L842.1 567.8L844.8 563.6L842.9 559.6L842.1 557.8L840.2 556.5L837.4 555.3L833.9 555.2L831.2 554.9ZM681.0 586.2L684.9 587.1L685.2 590.7L688.7 591.1L692.0 588.8L694.8 589.3L694.7 584.3L691.9 578.2L694.4 574.6L694.1 569.3L690.8 570.7L686.6 569.5L684.4 570.8L681.5 572.2L679.3 575.4L680.1 579.2L679.3 582.3ZM729.3 484.3L726.1 483.3L726.0 487.6L720.4 490.2L721.6 493.1L717.0 495.9L718.1 499.6L720.3 501.7L723.2 507.4L726.0 508.7L729.4 510.0L732.7 509.2L735.1 507.1L738.4 505.1L738.7 501.0L738.4 496.8L735.7 491.7L735.0 487.0L731.9 483.9ZM740.2 637.2L744.6 638.5L747.2 634.3L749.3 638.1L753.0 635.6L753.7 632.2L754.9 629.7L754.7 624.8L751.2 623.2L750.0 617.8L746.5 615.2L743.8 614.9L741.8 616.5L738.5 616.9L735.2 620.3L737.7 624.8L735.5 627.2L734.6 630.4L736.6 633.3L739.2 636.6ZM670.9 594.5L674.7 597.9L679.0 597.6L683.3 594.0L684.4 592.6L685.2 590.7L684.9 587.1L681.0 586.2L679.3 582.3L675.8 579.9L672.7 585.2L667.8 582.5L664.3 584.4L665.8 587.7L665.4 590.8L663.2 593.8L664.4 595.5L665.7 597.9ZM660.2 561.9L657.1 561.8L654.3 559.6L653.8 563.2L649.4 564.1L649.7 567.0L651.7 569.7L655.0 573.1L655.7 576.9L658.2 577.6L660.2 577.9L661.5 575.6L662.6 573.0L665.4 570.9L665.3 567.7L666.6 563.8L664.0 560.9ZM831.4 383.1L830.0 386.7L829.0 394.6L827.1 403.4L833.2 403.8L838.0 407.2L839.7 411.0L845.3 414.2L848.1 414.7L851.0 414.3L851.0 411.0L859.0 400.0L862.0 384.6L862.0 384.1L855.8 380.7L847.1 376.0L838.7 374.6L836.0 375.6ZM764.6 514.0L769.2 512.8L773.0 516.0L775.3 519.3L779.0 517.6L780.3 514.6L783.5 513.5L782.9 508.4L780.7 506.0L780.0 499.6L780.6 496.1L776.7 494.5L774.5 498.2L770.5 501.1L765.9 499.4L765.4 502.2L765.7 506.1L762.7 508.9ZM663.9 641.1L661.3 641.5L661.1 645.1L656.9 646.9L657.1 651.0L659.3 653.6L659.6 657.5L662.2 658.4L665.6 659.5L667.5 661.5L666.9 656.2L673.5 655.3L673.7 653.2L674.1 648.2L670.9 647.5L669.8 643.0L666.5 640.6ZM694.1 699.3L693.7 702.0L694.6 705.5L694.3 707.9L696.9 706.4L701.2 704.9L704.2 706.1L706.5 702.0L708.3 699.9L709.3 696.5L705.9 694.4L703.9 693.4L700.4 691.5L698.8 688.4L696.7 692.4L695.0 694.9L690.4 696.6ZM732.2 542.7L735.0 539.9L738.1 538.3L739.4 534.2L739.2 530.4L739.0 526.4L734.4 529.6L728.3 530.0L725.8 528.8L720.1 527.5L717.4 531.5L722.0 533.1L720.6 536.8L720.0 540.8L723.9 542.0L728.5 542.0L730.9 545.6ZM689.8 723.6L687.0 726.7L684.9 732.1L682.5 735.9L682.3 739.1L685.4 739.4L690.4 739.6L692.7 742.4L696.1 740.9L698.9 738.3L698.5 735.2L699.4 731.7L699.0 727.6L695.0 726.6L693.3 726.1L690.9 723.1ZM623.2 757.3L624.6 758.5L627.9 759.1L631.4 758.7L634.5 757.6L636.7 753.8L637.3 749.7L633.3 748.2L634.4 744.6L630.7 745.0L628.2 743.4L626.3 741.5L624.6 742.7L622.3 743.5L623.9 748.2L621.2 750.9L620.7 755.0ZM705.4 602.9L708.7 602.1L711.5 598.7L713.9 597.6L711.1 595.4L711.9 591.6L708.2 590.4L706.9 586.4L704.9 587.8L700.8 588.2L697.8 588.2L695.0 589.4L693.7 594.7L699.5 597.0L700.2 601.8L700.3 605.0L701.8 605.6L703.2 606.3ZM722.8 582.9L721.0 580.1L716.7 582.2L713.7 577.8L710.7 579.8L709.1 583.6L706.9 586.4L708.2 590.4L711.9 591.6L711.1 595.4L713.9 597.6L716.6 599.0L718.9 598.2L721.7 597.1L724.1 594.6L725.2 591.2L725.8 588.7L725.7 586.1ZM798.8 745.9L800.3 749.2L800.8 749.6L806.0 744.0L810.8 738.1L810.5 737.6L810.7 734.3L807.3 736.2L802.3 737.7L799.7 739.6L797.6 743.0ZM805.6 719.6L801.0 721.4L800.3 724.5L803.1 727.1L805.1 729.8L807.1 730.9L811.2 732.7L812.4 731.8L813.7 731.0L816.1 727.5L812.9 722.3L816.1 721.0L817.6 717.3L816.7 715.9L816.2 714.3L814.5 713.7L811.3 713.8L808.9 716.4L806.2 715.2ZM741.2 484.5L747.3 485.4L751.2 483.9L756.5 484.5L756.7 484.3L759.6 480.2L759.1 473.3L759.2 469.3L755.9 465.0L751.2 466.4L747.8 464.4L744.5 467.2L740.3 466.8L741.9 470.1L739.1 473.1L740.2 476.6L737.2 480.4ZM719.6 618.9L717.7 623.0L718.9 627.0L722.8 629.0L726.3 628.1L729.9 628.1L731.5 625.0L735.5 627.2L737.7 624.8L735.2 620.3L738.5 616.9L736.4 614.8L734.1 613.3L729.3 612.4L726.8 612.7L722.2 612.8L720.4 615.8L717.5 616.8ZM725.1 566.7L723.9 562.7L721.2 561.5L718.3 561.4L715.6 560.7L710.8 562.2L713.0 567.0L708.0 568.7L707.0 572.2L708.7 574.5L710.9 577.3L710.7 579.8L713.7 577.8L716.7 582.2L721.0 580.1L723.1 577.1L725.5 576.1L726.6 571.8L726.0 569.0ZM666.6 563.8L665.3 567.7L665.4 570.9L668.5 570.7L672.7 573.0L675.9 570.5L678.7 569.7L679.6 566.1L679.9 562.1L676.9 558.6L672.8 560.2L670.8 559.3L666.6 558.1L665.2 559.8L664.0 560.9ZM629.2 769.6L631.3 770.5L635.9 771.3L639.1 771.1L642.3 767.9L643.1 766.3L643.8 762.2L639.5 761.3L639.8 758.7L639.0 754.8L636.7 753.8L634.5 757.6L631.4 758.7L627.9 759.1L627.7 761.4L626.2 764.7L628.1 767.6ZM670.4 606.1L675.5 606.8L678.2 609.9L684.5 608.1L682.5 604.8L681.2 601.9L684.4 598.3L683.3 594.0L679.0 597.6L674.7 597.9L670.9 594.5L665.7 597.9L664.3 601.1L666.6 603.4L665.7 606.2ZM763.1 622.8L764.1 617.9L765.3 615.5L762.0 611.4L761.9 611.5L757.2 607.1L755.7 608.2L752.0 609.9L750.0 613.5L746.5 615.2L750.0 617.8L751.2 623.2L754.7 624.8L754.9 629.7L757.7 629.3L761.1 627.6L763.4 625.7ZM780.9 750.9L773.7 751.7L774.8 757.1L770.4 757.9L770.5 758.8L772.5 761.6L775.3 762.7L776.4 764.6L778.3 762.7L781.3 761.4L786.2 762.6L788.2 760.2L785.8 758.0L786.8 754.4L782.5 750.6L784.2 747.2L781.3 746.7ZM765.7 506.1L765.4 502.2L765.9 499.4L760.7 497.9L761.0 494.4L759.2 492.0L756.6 488.2L756.0 492.5L750.1 494.0L746.4 496.9L746.5 500.5L747.4 503.6L752.0 503.6L753.1 510.0L755.6 511.0L759.1 510.1L762.7 508.9ZM660.0 675.1L657.8 677.0L659.4 680.1L661.2 685.1L659.7 688.3L661.6 690.3L665.4 688.6L668.1 690.9L670.0 687.5L673.0 686.7L674.9 682.9L674.1 680.5L671.8 676.5L668.4 676.5L666.1 675.3L662.9 674.8ZM688.8 501.5L689.4 505.8L689.9 509.4L694.8 510.3L697.9 511.9L700.1 515.4L705.5 515.6L707.1 511.7L707.3 507.1L704.8 499.8L708.2 497.0L705.2 494.9L702.7 493.0L698.6 494.0L696.3 497.8L693.1 501.6L688.8 501.5ZM842.1 557.8L842.9 559.6L845.6 557.4L851.3 559.5L855.2 559.7L858.1 555.9L858.1 553.0L857.8 549.4L859.7 546.5L854.0 546.2L853.6 542.2L848.7 540.2L845.3 538.7L844.7 539.1L845.5 544.2L840.4 546.5L838.7 552.5L840.2 556.5ZM604.7 752.9L601.5 756.0L599.0 758.6L599.7 761.8L601.9 764.3L604.9 765.1L610.1 764.3L612.6 767.4L615.1 765.1L613.7 760.4L615.9 756.8L614.0 753.8L611.0 752.8L607.9 751.8ZM814.6 580.5L810.1 576.7L808.7 574.2L806.4 570.8L803.4 574.5L803.5 577.7L800.4 580.7L799.1 585.9L799.8 589.1L805.0 590.3L809.0 587.8L816.3 581.9ZM658.0 695.9L657.5 701.5L661.6 702.4L664.9 700.4L667.7 699.6L669.6 697.5L668.7 694.3L668.1 690.9L665.4 688.6L661.6 690.3L659.7 688.3L658.2 690.3L656.2 694.1L653.5 695.1ZM883.9 557.2L879.2 558.2L877.4 554.6L873.4 556.2L874.0 560.7L873.7 561.2L880.0 566.7L884.0 557.3ZM665.2 559.8L666.6 558.1L666.3 554.7L664.9 550.2L664.7 547.2L662.7 546.1L659.9 546.9L657.6 548.2L655.8 551.9L651.6 551.7L652.8 554.6L654.6 557.1L654.3 559.6L657.1 561.8L660.2 561.9L664.0 560.9ZM725.8 588.7L725.2 591.2L724.1 594.6L726.0 597.6L729.9 599.8L734.2 599.7L736.3 597.2L738.2 595.0L742.5 594.8L742.6 591.3L738.2 588.8L740.3 585.4L737.4 583.2L735.7 586.1L731.7 586.4L727.9 583.2L725.7 586.1ZM762.0 542.2L765.8 543.8L768.4 540.6L769.1 535.3L770.9 529.2L774.3 526.9L773.7 524.8L768.2 523.2L765.1 525.8L759.2 524.3L754.7 526.7L754.3 529.8L758.7 533.9L757.8 539.0L758.3 542.3ZM720.6 644.6L718.1 647.8L716.5 651.5L714.9 655.7L719.4 655.7L723.7 654.1L725.8 657.0L729.4 657.9L729.8 656.2L730.8 654.8L728.0 652.5L730.3 648.4L727.6 646.7L726.7 643.1L724.0 640.6L720.3 641.0Z" fill="#fdf9cd" stroke="#86701f" stroke-width="0.45" stroke-linejoin="round"/><polygon points="643.0,357.0 647.8,343.0 657.0,333.7 660.5,322.0 664.0,324.4 675.5,324.4 687.0,326.7 686.0,336.0 677.8,340.6 668.6,347.6 664.0,354.5 669.7,356.8 674.4,370.7 669.7,376.5 661.6,373.0 654.7,370.7 650.0,363.8" fill="#f9a533" stroke="#6a5c1c" stroke-width="0.55"/><polygon points="690.0,342.0 697.0,336.0 701.5,338.0 697.0,345.0 692.0,347.0" fill="#f9a533" stroke="#6a5c1c" stroke-width="0.55"/><polygon points="665.0,303.0 669.0,303.0 670.0,311.0 666.0,311.0" fill="#f9a533" stroke="#6a5c1c" stroke-width="0.55"/><polygon points="633.0,267.0 638.0,266.0 638.0,271.0 634.0,271.0" fill="#f9a533" stroke="#6a5c1c" stroke-width="0.55"/><polygon points="672.6,469.0 679.0,467.0 684.4,468.0 682.0,476.0 679.0,480.0 674.0,478.0" fill="#f9a533" stroke="#6a5c1c" stroke-width="0.55"/><polygon points="646.3,572.0 653.0,569.4 659.4,573.0 661.0,580.0 666.0,581.0 664.7,588.0 658.0,597.0 649.0,601.0 641.0,598.3 637.0,590.0 640.0,582.5 646.3,580.0" fill="#f9a533" stroke="#6a5c1c" stroke-width="0.55"/><polygon points="665.0,638.0 672.0,635.0 681.0,638.0 684.4,645.0 678.0,650.0 670.0,653.5 666.0,648.0" fill="#f9a533" stroke="#6a5c1c" stroke-width="0.55"/><polygon points="699.0,633.0 703.0,631.0 705.5,635.0 702.0,638.0 699.0,637.0" fill="#f9a533" stroke="#6a5c1c" stroke-width="0.55"/><polygon points="636.0,671.0 645.0,669.0 654.0,672.0 652.0,680.0 648.0,687.0 638.0,686.0 634.0,680.0" fill="#f9a533" stroke="#6a5c1c" stroke-width="0.55"/><polygon points="628.0,635.0 634.0,636.0 636.0,645.0 631.0,651.0 628.0,650.0" fill="#f9a533" stroke="#6a5c1c" stroke-width="0.55"/><polygon points="564.0,686.0 575.0,684.0 588.0,686.0 587.0,694.0 582.0,699.4 572.0,698.0 566.0,694.0" fill="#f9a533" stroke="#6a5c1c" stroke-width="0.55"/><polygon points="733.0,729.0 742.0,725.7 750.0,728.0 751.0,736.0 745.0,741.0 741.0,746.8 734.0,745.0 731.0,738.0" fill="#f9a533" stroke="#6a5c1c" stroke-width="0.55"/><polygon points="727.0,750.0 735.0,749.0 736.0,754.0 729.0,754.7" fill="#f9a533" stroke="#6a5c1c" stroke-width="0.55"/><polygon points="551.0,779.0 560.0,775.0 568.0,774.0 570.7,780.0 566.0,788.0 560.0,794.0 553.0,795.0 549.7,789.0" fill="#f9a533" stroke="#6a5c1c" stroke-width="0.55"/><polygon points="801.0,441.0 806.0,436.0 812.0,438.0 817.0,434.0 822.0,439.0 828.0,441.0 830.0,447.0 825.0,452.0 819.0,456.0 813.0,453.0 808.0,455.0 803.0,450.0" fill="#f9a533" stroke="#6a5c1c" stroke-width="0.55"/><polygon points="665.0,402.0 673.0,391.6 675.5,382.0 685.0,379.0 696.0,381.0 704.5,381.0 715.0,394.0 708.0,394.0 701.0,389.0 700.0,395.0 689.4,394.0 681.0,397.0 673.0,399.7" fill="#d7261f" stroke="#6a5c1c" stroke-width="0.5"/><polygon points="691.0,449.0 695.0,446.0 697.0,448.5 700.0,446.5 703.0,450.0 701.0,455.0 697.0,457.6 693.0,456.0" fill="#d7261f" stroke="#6a5c1c" stroke-width="0.5"/><polygon points="787.1,773.6 791.6,771.8 795.5,769.1 798.7,775.7 796.9,781.5 801.3,786.2 802.4,794.1 799.7,800.7 794.5,798.8 790.3,796.7 791.6,791.5 793.4,786.7 788.2,784.1 786.3,779.6" fill="#d7261f" stroke="#6a5c1c" stroke-width="0.5"/><polygon points="751.5,480.0 763.0,474.7 768.6,480.0 762.0,486.5 759.4,495.7 767.0,503.6 777.8,506.0 775.0,511.5 762.0,514.0 746.0,506.0 746.0,493.0 754.0,490.5" fill="#a7a9b6" stroke="#6a5c1c" stroke-width="0.5"/><polygon points="837.0,491.8 846.0,490.0 850.0,495.7 848.8,509.0 851.4,514.0 843.5,519.4 839.6,527.0 830.4,527.0 829.0,519.4 838.0,511.5 835.6,501.0" fill="#a7a9b6" stroke="#6a5c1c" stroke-width="0.5"/><polygon points="720.0,592.0 727.0,590.0 731.7,598.0 730.0,610.0 722.0,614.0 718.6,606.0" fill="#a7a9b6" stroke="#6a5c1c" stroke-width="0.5"/><polygon points="671.0,553.0 677.0,552.0 679.0,557.0 673.0,559.0" fill="#a7a9b6" stroke="#6a5c1c" stroke-width="0.5"/><polygon points="809.0,287.0 813.0,285.0 816.0,288.0 821.0,289.0 822.0,293.0 818.0,295.0 815.0,292.0 811.0,293.0" fill="#1f2427"/><polygon points="812.0,297.0 817.0,298.0 820.0,301.0 816.0,303.0 812.0,301.0" fill="#1f2427"/><polygon points="823.0,297.0 826.0,296.0 826.0,300.0 823.0,301.0" fill="#1f2427"/><polygon points="806.0,299.0 809.0,298.0 810.0,302.0 807.0,303.0" fill="#1f2427"/><polygon points="842.0,335.0 848.0,337.0 853.0,345.0 849.0,348.0 845.0,342.0" fill="#1f2427"/><polygon points="835.0,321.0 839.0,323.0 841.0,329.0 837.0,330.0 834.0,326.0" fill="#1f2427"/><polygon points="838.0,333.0 842.0,334.0 843.0,339.0 839.0,338.0" fill="#1f2427"/><polygon points="790.0,300.0 794.0,299.5 795.0,302.0 791.0,303.0" fill="#1f2427"/><polyline points="699.0,332.0 697.2,337.9 697.8,341.7 696.0,348.0 700.1,351.0 700.8,355.8 704.0,358.0 699.9,362.8 697.1,367.5 691.0,371.4 685.8,372.8 679.8,373.4 675.0,374.0 677.0,376.5 680.2,377.8 683.0,379.0 690.6,382.3 698.7,383.2 706.8,382.0 709.6,385.6 709.1,390.3 713.0,395.0" fill="none" stroke="#5a5432" stroke-width="1.15" stroke-linejoin="round"/><polyline points="713.0,395.0 716.4,397.9 720.6,399.1 725.0,400.0 729.0,402.4 731.1,405.1 735.7,408.0 739.5,411.0 742.9,413.8 746.0,416.0 750.7,418.8 759.1,417.0 764.6,418.8 763.1,425.9 765.3,431.9 764.6,440.0 764.1,442.9 761.9,444.6 760.7,447.6 763.7,451.3 765.0,456.5 765.8,460.0 764.7,465.1 763.1,472.9 764.5,478.0" fill="none" stroke="#5a5432" stroke-width="1.15" stroke-linejoin="round"/><polyline points="725.0,400.0 727.5,397.0 730.3,395.5 733.0,392.5 740.0,389.0 747.6,384.3 756.7,382.0 759.4,384.6 764.2,386.1 767.0,390.0 774.1,392.0 781.5,392.1 788.0,392.5 794.8,390.2 800.9,393.2 809.0,390.0 815.2,385.1 816.6,378.8 822.5,374.0 827.6,372.7 832.4,371.7 835.6,368.8 838.6,371.4 841.0,374.0 846.2,373.7 851.8,375.6 856.7,379.0" fill="none" stroke="#5a5432" stroke-width="1.15" stroke-linejoin="round"/><polyline points="713.0,395.0 711.3,399.3 707.5,402.9 706.8,408.0 705.2,412.1 701.3,414.2 699.0,418.8 696.8,427.1 695.3,434.0 696.0,440.0 700.3,439.3 702.5,438.9 706.5,440.0 708.2,444.8 707.8,450.3 710.0,455.0 708.0,462.9 708.2,468.9 708.0,475.0 701.6,475.3 696.9,479.8 690.0,480.0 691.3,485.2 691.3,491.8 689.0,498.0 689.6,502.4 692.7,505.7 692.6,510.6" fill="none" stroke="#5a5432" stroke-width="1.15" stroke-linejoin="round"/><polyline points="692.6,510.6 686.3,510.7 679.0,514.0 672.0,515.7 667.9,514.4 663.6,513.6 660.0,513.0 653.3,512.3 646.4,511.5 642.0,508.0 639.7,511.9 639.3,517.6 637.0,523.0 639.6,524.1 642.7,525.7 644.7,528.0 649.1,526.4 654.8,527.4 660.0,528.0 659.5,533.2 662.9,540.2 662.0,546.0 664.1,547.5 667.5,549.8 670.0,551.0 670.0,555.2 665.9,560.2 665.0,566.0 662.4,572.5 659.9,575.3 657.0,581.0 662.2,583.9 664.1,588.8 667.0,591.0 661.1,595.1 659.1,600.5 652.0,604.0 647.3,605.5 642.1,610.1 637.0,614.0 635.4,617.6 635.4,622.6 634.6,626.7 636.5,630.2 637.9,635.2 640.0,640.0" fill="none" stroke="#5a5432" stroke-width="1.15" stroke-linejoin="round"/><polyline points="692.6,510.6 697.9,510.7 703.0,514.7 710.0,515.7 716.8,519.7 723.7,519.6 728.0,523.0 729.2,527.9 727.6,532.0 728.0,536.0 730.7,542.0 735.6,544.1 738.0,548.5 746.8,549.6 755.9,553.7 763.0,556.0 762.4,559.0 764.1,563.3 764.5,566.0" fill="none" stroke="#5a5432" stroke-width="1.15" stroke-linejoin="round"/><polyline points="764.5,478.0 768.9,479.6 772.9,482.4 778.0,485.0 785.3,486.1 796.0,489.8 803.6,493.0 804.3,499.9 804.5,507.7 806.0,513.0 800.6,514.4 794.9,514.5 791.0,513.0 783.5,516.2 771.1,516.8 763.0,515.7 762.9,519.7 761.0,522.9 760.7,528.0 764.2,533.9 762.9,540.1 764.5,548.5 765.0,554.6 764.0,560.3 764.5,566.0" fill="none" stroke="#5a5432" stroke-width="1.15" stroke-linejoin="round"/><polyline points="806.0,513.0 810.6,518.4 812.1,525.0 813.7,531.0 819.4,530.5 824.1,526.4 829.0,526.0 835.7,524.5 842.6,526.1 849.0,523.0 853.3,520.0 859.5,518.3 864.0,513.0 868.0,514.6 871.8,515.2 876.8,515.7" fill="none" stroke="#5a5432" stroke-width="1.15" stroke-linejoin="round"/><polyline points="764.5,566.0 764.5,571.6 766.8,576.5 765.8,584.0 762.2,586.2 755.4,587.1 750.6,589.0 751.1,592.7 751.1,596.6 750.6,601.5 753.6,607.1 757.9,609.0 763.0,614.0" fill="none" stroke="#5a5432" stroke-width="1.15" stroke-linejoin="round"/><polyline points="750.6,601.5 743.8,599.4 735.8,598.7 730.5,599.0 727.0,603.1 725.7,607.9 723.0,614.0 717.9,614.7 714.2,611.0 707.7,611.6 700.1,611.7 696.7,608.9 690.0,606.5 686.1,600.6 681.9,593.9 677.5,591.0 673.5,590.9 670.6,591.6 667.0,591.0" fill="none" stroke="#5a5432" stroke-width="1.15" stroke-linejoin="round"/><polyline points="640.0,640.0 642.6,640.2 647.0,640.2 650.0,642.0 653.1,645.3 657.0,650.6 658.0,655.0 660.8,661.4 663.1,665.6 666.7,670.5 666.1,676.2 666.5,678.8 669.0,683.7 673.9,688.5 678.4,693.3 680.0,699.0 680.1,705.6 683.6,711.1 682.5,718.0 680.0,723.3 678.6,726.3 674.6,731.0 669.6,731.9 667.0,737.2 661.0,739.0 663.5,743.7 665.0,749.8 664.0,754.7 665.6,758.7 665.3,764.7 668.0,770.0 666.3,776.8 667.5,784.7 666.7,791.5" fill="none" stroke="#5a5432" stroke-width="1.15" stroke-linejoin="round"/><polyline points="637.0,614.0 634.7,615.2 631.7,616.7 628.0,618.0" fill="none" stroke="#5a5432" stroke-width="1.15" stroke-linejoin="round"/><polyline points="642.0,508.0 640.4,505.2 636.7,503.2 634.0,500.0 630.9,499.0 628.0,498.0" fill="none" stroke="#5a5432" stroke-width="1.15" stroke-linejoin="round"/><polygon points="630.5,644.0 645.0,641.7 649.0,647.0 654.0,648.0 659.4,658.8 666.0,661.4 668.6,670.6 654.0,668.0 641.0,664.0 638.4,653.5 631.8,649.6" fill="#fdf6b4" stroke="#27e3ea" stroke-width="2" stroke-linejoin="round"/><text x="637.0" y="371.0" font-size="11" fill="#c9c9c9" stroke="#6e6e6e" stroke-width="2.4" paint-order="stroke" stroke-linejoin="round">Hamburg</text><text x="801.0" y="449.5" font-size="11" fill="#c9c9c9" stroke="#6e6e6e" stroke-width="2.4" paint-order="stroke" stroke-linejoin="round">Berlin</text><text x="627.0" y="459.5" font-size="11" fill="#c9c9c9" stroke="#6e6e6e" stroke-width="2.4" paint-order="stroke" stroke-linejoin="round">Hannover</text><text x="752.0" y="535.5" font-size="11" fill="#c9c9c9" stroke="#6e6e6e" stroke-width="2.4" paint-order="stroke" stroke-linejoin="round">Leipzig</text><text x="810.0" y="557.0" font-size="11" fill="#c9c9c9" stroke="#6e6e6e" stroke-width="2.4" paint-order="stroke" stroke-linejoin="round">Dresden</text><text x="774.0" y="572.5" font-size="11" fill="#c9c9c9" stroke="#6e6e6e" stroke-width="2.4" paint-order="stroke" stroke-linejoin="round">Chemnitz</text><text x="688.0" y="670.0" font-size="11" fill="#c9c9c9" stroke="#6e6e6e" stroke-width="2.4" paint-order="stroke" stroke-linejoin="round">Nürnberg</text><text x="603.0" y="718.5" font-size="11" fill="#c9c9c9" stroke="#6e6e6e" stroke-width="2.4" paint-order="stroke" stroke-linejoin="round">Stuttgart</text><text x="709.0" y="761.5" font-size="11" fill="#c9c9c9" stroke="#6e6e6e" stroke-width="2.4" paint-order="stroke" stroke-linejoin="round">München</text><text x="619" y="526" font-size="15" font-weight="700" fill="#777" stroke="#606060" stroke-width="1.2" paint-order="stroke" textLength="115" lengthAdjust="spacing">UTSCHLAND</text><text x="746.0" y="203.5" font-size="11" fill="#c4c4c4">Kopenhagen</text><text x="853.0" y="380.0" font-size="11" fill="#c4c4c4">Stettin</text><text x="851.0" y="626.0" font-size="11" fill="#c4c4c4">Prag</text><text x="938.0" y="756.5" font-size="11" fill="#c4c4c4">Wien</text><text x="580.0" y="812.5" font-size="11" fill="#c4c4c4">Zürich</text><text x="625.0" y="828.5" font-size="11" fill="#c4c4c4">Vaduz</text><text x="534.0" y="841.0" font-size="11" fill="#c4c4c4">Bern</text><text x="899.0" y="833.0" font-size="11" fill="#c4c4c4">Graz</text><text x="574.0" y="219.5" font-size="10.5" fill="#aeaeae" font-weight="700">Esbjerg</text><text x="926.0" y="788.0" font-size="10" fill="#bdbdbd">Mattersbu</text><text x="845.0" y="901.0" font-size="10.5" fill="#c4c4c4">Ljubljana</text><text x="871.0" y="293.0" font-size="10.5" fill="#7a7a7a" letter-spacing="1.6">Ostsee</text><text x="870.0" y="659.0" font-size="10.5" fill="#7a7a7a" letter-spacing="2.9">TSCHECHIEN</text><text x="801.0" y="819.0" font-size="10.5" fill="#7a7a7a" letter-spacing="2.6">ÖSTERREICH</text><text x="551.0" y="851.0" font-size="10.5" fill="#7a7a7a" letter-spacing="2.6">SCHWEIZ</text><text x="843.0" y="884.0" font-size="10.5" fill="#7a7a7a" letter-spacing="2.2">SLOWENIEN</text><text x="962.0" y="457.0" font-size="11" fill="#b5b5b5">P</text><text x="962.5" y="552.0" font-size="11" fill="#b5b5b5">B</text></g></svg>
<div class="b" style="left:400px;top:194px;width:58px;height:33px;background:#323232;"></div>
<div class="b" style="left:431px;top:194px;width:1px;height:33px;background:#444;"></div>
<svg class="b" style="left:405px;top:200px" width="24" height="22" viewBox="0 0 24 22"><path d="M8.5 4.5h3v2h3v-3h7v11h-8" fill="none" stroke="#bbb" stroke-width="1"/><path d="M14.5 6.5h3v4h4" fill="none" stroke="#bbb" stroke-width="1"/><path d="M3.5 5.5l8 6.5-3.8.6 2.3 4.2-1.3.7-2.3-4.2-2.9 2.6z" fill="#323232" stroke="#ddd" stroke-width="1"/></svg>
<svg class="b" style="left:437px;top:204px" width="18" height="12"><path d="M2 3.5h13l-6.5 6z" fill="none" stroke="#ccc" stroke-width="1.2"/></svg>
<div class="b" style="left:830px;top:194px;width:132px;height:35px;background:#2f2f2f;border:1px solid #444;"></div>
<svg class="b" style="left:830px;top:194px" width="132" height="35"><g fill="none" stroke="#d8d8d8" stroke-width="1.3"><circle cx="15.5" cy="14.5" r="5.5"/><path d="M19.5 18.5l6 6"/><path d="M47.500 10.500h8v14l-4-4-4 4z"/><path d="M76.500 10.500h2.500v2.500h-2.500zM76.500 15.500h2.500v2.500h-2.500zM76.500 20.500h2.500v2h-2.500zM77.800 24l1.500 2.300h-3zM82 11.500h8M82 16.500h8M82 21h8M82 25h8" stroke-width="1"/><path d="M107.500 9.500h6v6h-6zM116.500 9.500h6v6h-6zM107.500 18.500h6v6h-6zM116.500 18.500h6v6h-6z" stroke-width="1"/><path d="M109 14l3-3M118 11l3 3M109 21l1.500 2 2-3M118 20l3 3m0-3l-3 3" stroke-width="0.9"/></g></svg>
<div class="b" style="left:400px;top:232px;width:227px;height:31px;background:#333;"></div>
<div class="b" style="left:400px;top:263px;width:227px;height:382px;background:#222;"></div>
<div class="b" style="left:400px;top:645px;width:227px;height:38px;background:#353535;"></div>
<div class="b" style="left:400px;top:644px;width:227px;height:2px;background:#3e3e3e;"></div>
<div class="b" style="left:400px;top:232px;width:1px;height:451px;background:#3a3a3a;"></div>
<div class="b" style="left:626px;top:232px;width:1px;height:451px;background:#3a3a3a;"></div>
<div class="t" style="left:457.5px;top:241.7px;font-size:11px;line-height:11px;color:#eee;letter-spacing:-0.154px;">1 von 4</div>
<svg class="b" style="left:540px;top:238px" width="80" height="20"><g fill="none" stroke="#999" stroke-width="1.2"><path d="M11.500 3.500v12l-7-6z"/><path d="M33.500 3.500v12l7-6z"/><path d="M59.500 3.500l12 12m0-12l-12 12"/></g></svg>
<div class="t" style="left:406.0px;top:266.2px;font-size:14.5px;line-height:14.5px;color:#fff;font-weight:700;letter-spacing:-0.629px;">LK Main-Tauber-Kreis</div>
<div class="t" style="left:431.4px;top:296.7px;font-size:15px;line-height:15px;color:#eee;letter-spacing:-0.243px;">Fälle letzte 7</div>
<div class="t" style="left:481.8px;top:317.7px;font-size:15px;line-height:15px;color:#eee;letter-spacing:-0.325px;">Tage</div>
<div class="t" style="left:524.0px;top:296.7px;font-size:15px;line-height:15px;color:#eee;letter-spacing:-0.334px;">31</div>
<div class="t" style="left:431.4px;top:345.7px;font-size:15px;line-height:15px;color:#eee;letter-spacing:-0.243px;">Fälle letzte 7</div>
<div class="t" style="left:425.7px;top:366.7px;font-size:15px;line-height:15px;color:#eee;letter-spacing:-0.303px;">Tage/100.000</div>
<div class="t" style="left:489.8px;top:387.7px;font-size:15px;line-height:15px;color:#eee;letter-spacing:-0.483px;">EW</div>
<div class="t" style="left:524.0px;top:345.7px;font-size:15px;line-height:15px;color:#eee;letter-spacing:-0.292px;">23,4</div>
<div class="t" style="left:430.6px;top:416.7px;font-size:15px;line-height:15px;color:#eee;letter-spacing:-0.286px;">Fälle gesamt</div>
<div class="t" style="left:524.0px;top:416.7px;font-size:15px;line-height:15px;color:#eee;letter-spacing:-0.300px;">5.208</div>
<div class="t" style="left:481.8px;top:444.7px;font-size:15px;line-height:15px;color:#eee;letter-spacing:-0.260px;">Fälle</div>
<div class="t" style="left:409.7px;top:465.7px;font-size:15px;line-height:15px;color:#eee;letter-spacing:-0.307px;">gesamt/100.000</div>
<div class="t" style="left:489.8px;top:486.7px;font-size:15px;line-height:15px;color:#eee;letter-spacing:-0.483px;">EW</div>
<div class="t" style="left:524.0px;top:444.7px;font-size:15px;line-height:15px;color:#eee;letter-spacing:-0.286px;">3.933,6</div>
<div class="t" style="left:448.2px;top:514.7px;font-size:15px;line-height:15px;color:#eee;letter-spacing:-0.270px;">Todesfälle</div>
<div class="t" style="left:465.8px;top:535.7px;font-size:15px;line-height:15px;color:#eee;letter-spacing:-0.328px;">gesamt</div>
<div class="t" style="left:524.0px;top:514.7px;font-size:15px;line-height:15px;color:#eee;letter-spacing:-0.334px;">90</div>
<div class="t" style="left:418.5px;top:563.7px;font-size:15px;line-height:15px;color:#eee;letter-spacing:-0.303px;">Einwohnerzahl</div>
<div class="t" style="left:524.0px;top:563.7px;font-size:15px;line-height:15px;color:#eee;letter-spacing:-0.310px;">132.399</div>
<div class="t" style="left:436.9px;top:592.7px;font-size:15px;line-height:15px;color:#eee;letter-spacing:-0.317px;">Bundesland</div>
<div class="t" style="left:524.0px;top:592.7px;font-size:15px;line-height:15px;color:#eee;letter-spacing:-0.322px;">Baden-</div>
<div class="t" style="left:524.0px;top:613.7px;font-size:15px;line-height:15px;color:#eee;letter-spacing:-0.315px;">Württemberg</div>
<svg class="b" style="left:404px;top:652px" width="100" height="26"><g fill="none" stroke="#8a8a8a" stroke-width="1.1"><path d="M12 5.500v14M5 12.500h14M12 5l-2.200 2.500M12 5l2.200 2.500M12 20l-2.200-2.500M12 20l2.200-2.500M4.500 12.500l2.500-2.200M4.500 12.500l2.500 2.200M19.500 12.500l-2.500-2.200M19.500 12.500l-2.500 2.200"/><circle cx="43.500" cy="11.500" r="5.500"/><path d="M47.500 15.500l5 5M41 11.500h5M43.500 9v5"/><path d="M74.500 6.500h3v2h3v-3h6v10h-7"/><path d="M70.500 7.500l7 5.500-3.300.5 2 3.700-1.100.6-2-3.700-2.600 2.300z" fill="#353535" stroke="#aaa"/></g></svg>
<div class="b" style="left:930px;top:819px;width:31px;height:58px;background:#333;border:1px solid #484848;"></div>
<div class="b" style="left:931px;top:848px;width:29px;height:1px;background:#3d3d3d;"></div>
<svg class="b" style="left:930px;top:819px" width="31" height="58"><path d="M9.500 15h13M16 8.500v13M9.500 42h13" stroke="#bbb" stroke-width="1.6" fill="none"/></svg>
<div class="b" style="left:700px;top:882px;width:258px;height:15px;background:#cfcfcf;"></div>
<div class="t" style="left:705.0px;top:883.1px;font-size:13.5px;line-height:13.5px;color:#323232;letter-spacing:-0.480px;">GDI-TH, Esri, HERE, Garmin, FAO, NOA…</div>
<div class="b" style="left:405px;top:914px;width:253px;height:26px;background:#222;border-bottom:2px solid #2b7fd6;box-sizing:border-box;"></div>
<div class="t" style="left:417.2px;top:920.1px;font-size:13px;line-height:13px;color:#f2f2f2;letter-spacing:-0.120px;">Aktivität über 7 Tage/100.000 Einwohner</div>
<div class="b" style="left:664px;top:914px;width:163px;height:26px;background:#000;border:1px solid #3a3a3a;"></div>
<div class="t" style="left:676.2px;top:920.1px;font-size:13px;line-height:13px;color:#f2f2f2;letter-spacing:-0.231px;">Fälle/100.000 Einwohner</div>
</body></html>
